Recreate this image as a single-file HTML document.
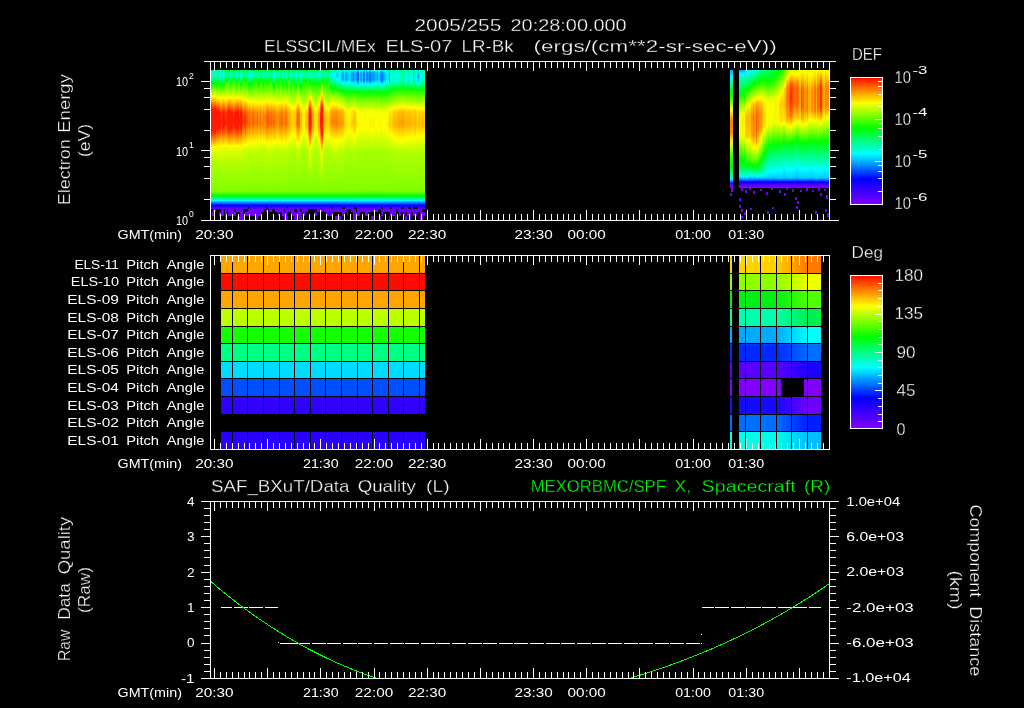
<!DOCTYPE html>
<html><head><meta charset="utf-8"><title>ELS plot</title>
<style>
html,body{margin:0;padding:0;background:#000;overflow:hidden}
svg{display:block;will-change:transform}
text{font-family:"Liberation Sans",sans-serif;fill:#fff}
.t{stroke:#000;stroke-width:.3px}
</style></head><body>
<svg width="1024" height="708" viewBox="0 0 1024 708">
<rect width="1024" height="708" fill="#000"/>
<defs>
<linearGradient id="cb" x1="0" y1="0" x2="0" y2="1"><stop offset="0" stop-color="#ff0a00"/><stop offset="0.2" stop-color="#ffff00"/><stop offset="0.4" stop-color="#00ff00"/><stop offset="0.6" stop-color="#00ffff"/><stop offset="0.8" stop-color="#0000ff"/><stop offset="1" stop-color="#8000ff"/></linearGradient>
<linearGradient id="a0" x1="0" y1="0" x2="0" y2="1"><stop offset="0.000" stop-color="#00ff5e"/><stop offset="0.013" stop-color="#00ffc2"/><stop offset="0.033" stop-color="#00ffef"/><stop offset="0.092" stop-color="#00ff00"/><stop offset="0.093" stop-color="#05ff00"/><stop offset="0.173" stop-color="#ffff00"/><stop offset="0.247" stop-color="#ff1700"/><stop offset="0.427" stop-color="#ff2000"/><stop offset="0.513" stop-color="#ffee00"/><stop offset="0.531" stop-color="#ffff00"/><stop offset="0.600" stop-color="#bbff00"/><stop offset="0.807" stop-color="#80ff00"/><stop offset="0.840" stop-color="#00ff00"/><stop offset="0.840" stop-color="#00ff00"/><stop offset="0.860" stop-color="#00ffae"/><stop offset="0.870" stop-color="#00ffff"/><stop offset="0.873" stop-color="#00dfff"/><stop offset="0.901" stop-color="#0000ff"/><stop offset="0.927" stop-color="#6600ff"/><stop offset="0.953" stop-color="#7300ff"/><stop offset="1.000" stop-color="#7300ff"/></linearGradient><linearGradient id="a1" x1="0" y1="0" x2="0" y2="1"><stop offset="0.000" stop-color="#00ff65"/><stop offset="0.013" stop-color="#00ffc8"/><stop offset="0.033" stop-color="#00fff6"/><stop offset="0.093" stop-color="#00ff05"/><stop offset="0.095" stop-color="#00ff00"/><stop offset="0.179" stop-color="#ffff00"/><stop offset="0.193" stop-color="#ffd300"/><stop offset="0.267" stop-color="#ff1300"/><stop offset="0.407" stop-color="#ff1a00"/><stop offset="0.513" stop-color="#fffd00"/><stop offset="0.516" stop-color="#ffff00"/><stop offset="0.607" stop-color="#b4ff00"/><stop offset="0.807" stop-color="#80ff00"/><stop offset="0.840" stop-color="#00ff00"/><stop offset="0.840" stop-color="#00ff00"/><stop offset="0.860" stop-color="#00ffae"/><stop offset="0.870" stop-color="#00ffff"/><stop offset="0.873" stop-color="#00dfff"/><stop offset="0.901" stop-color="#0000ff"/><stop offset="0.927" stop-color="#6600ff"/><stop offset="0.953" stop-color="#7300ff"/><stop offset="1.000" stop-color="#7300ff"/></linearGradient><linearGradient id="a2" x1="0" y1="0" x2="0" y2="1"><stop offset="0.000" stop-color="#00ff44"/><stop offset="0.013" stop-color="#00ffa7"/><stop offset="0.033" stop-color="#00ffd5"/><stop offset="0.085" stop-color="#00ff00"/><stop offset="0.087" stop-color="#05ff00"/><stop offset="0.176" stop-color="#ffff00"/><stop offset="0.260" stop-color="#ff1500"/><stop offset="0.413" stop-color="#ff2100"/><stop offset="0.513" stop-color="#fffb00"/><stop offset="0.518" stop-color="#ffff00"/><stop offset="0.607" stop-color="#b5ff00"/><stop offset="0.807" stop-color="#80ff00"/><stop offset="0.840" stop-color="#00ff00"/><stop offset="0.840" stop-color="#00ff00"/><stop offset="0.860" stop-color="#00ffae"/><stop offset="0.870" stop-color="#00ffff"/><stop offset="0.873" stop-color="#00dfff"/><stop offset="0.901" stop-color="#0000ff"/><stop offset="0.927" stop-color="#6600ff"/><stop offset="0.953" stop-color="#7300ff"/><stop offset="1.000" stop-color="#7300ff"/></linearGradient><linearGradient id="a3" x1="0" y1="0" x2="0" y2="1"><stop offset="0.000" stop-color="#00ff39"/><stop offset="0.013" stop-color="#00ff9d"/><stop offset="0.033" stop-color="#00ffca"/><stop offset="0.083" stop-color="#00ff00"/><stop offset="0.087" stop-color="#10ff00"/><stop offset="0.174" stop-color="#ffff00"/><stop offset="0.260" stop-color="#ff1300"/><stop offset="0.413" stop-color="#ff1d00"/><stop offset="0.513" stop-color="#fff900"/><stop offset="0.520" stop-color="#ffff00"/><stop offset="0.607" stop-color="#b5ff00"/><stop offset="0.807" stop-color="#80ff00"/><stop offset="0.840" stop-color="#00ff00"/><stop offset="0.840" stop-color="#00ff00"/><stop offset="0.860" stop-color="#00ffae"/><stop offset="0.870" stop-color="#00ffff"/><stop offset="0.873" stop-color="#00dfff"/><stop offset="0.901" stop-color="#0000ff"/><stop offset="0.927" stop-color="#6600ff"/><stop offset="0.953" stop-color="#7300ff"/><stop offset="1.000" stop-color="#7300ff"/></linearGradient><linearGradient id="a4" x1="0" y1="0" x2="0" y2="1"><stop offset="0.000" stop-color="#00ff52"/><stop offset="0.013" stop-color="#00ffb6"/><stop offset="0.033" stop-color="#00ffe4"/><stop offset="0.087" stop-color="#00ff0a"/><stop offset="0.090" stop-color="#00ff00"/><stop offset="0.184" stop-color="#ffff00"/><stop offset="0.260" stop-color="#ff3200"/><stop offset="0.287" stop-color="#ff1300"/><stop offset="0.400" stop-color="#ff2200"/><stop offset="0.510" stop-color="#ffff00"/><stop offset="0.513" stop-color="#f9ff00"/><stop offset="0.613" stop-color="#b1ff00"/><stop offset="0.807" stop-color="#80ff00"/><stop offset="0.840" stop-color="#00ff00"/><stop offset="0.840" stop-color="#00ff00"/><stop offset="0.860" stop-color="#00ffae"/><stop offset="0.870" stop-color="#00ffff"/><stop offset="0.873" stop-color="#00dfff"/><stop offset="0.901" stop-color="#0000ff"/><stop offset="0.927" stop-color="#6600ff"/><stop offset="0.953" stop-color="#7300ff"/><stop offset="1.000" stop-color="#7300ff"/></linearGradient><linearGradient id="a5" x1="0" y1="0" x2="0" y2="1"><stop offset="0.000" stop-color="#00ff3a"/><stop offset="0.013" stop-color="#00ff9e"/><stop offset="0.033" stop-color="#00ffcc"/><stop offset="0.084" stop-color="#00ff00"/><stop offset="0.087" stop-color="#0bff00"/><stop offset="0.185" stop-color="#ffff00"/><stop offset="0.280" stop-color="#ff1300"/><stop offset="0.393" stop-color="#ff1c00"/><stop offset="0.511" stop-color="#ffff00"/><stop offset="0.520" stop-color="#efff00"/><stop offset="0.633" stop-color="#acff00"/><stop offset="0.807" stop-color="#80ff00"/><stop offset="0.840" stop-color="#00ff00"/><stop offset="0.840" stop-color="#00ff00"/><stop offset="0.860" stop-color="#00ffae"/><stop offset="0.870" stop-color="#00ffff"/><stop offset="0.873" stop-color="#00dfff"/><stop offset="0.901" stop-color="#0000ff"/><stop offset="0.927" stop-color="#6600ff"/><stop offset="0.953" stop-color="#7300ff"/><stop offset="1.000" stop-color="#7300ff"/></linearGradient><linearGradient id="a6" x1="0" y1="0" x2="0" y2="1"><stop offset="0.000" stop-color="#00ff72"/><stop offset="0.013" stop-color="#00ffd6"/><stop offset="0.031" stop-color="#00ffff"/><stop offset="0.033" stop-color="#00f9ff"/><stop offset="0.035" stop-color="#00ffff"/><stop offset="0.093" stop-color="#00ff15"/><stop offset="0.100" stop-color="#00ff00"/><stop offset="0.173" stop-color="#e2ff00"/><stop offset="0.186" stop-color="#ffff00"/><stop offset="0.287" stop-color="#ff1d00"/><stop offset="0.380" stop-color="#ff1d00"/><stop offset="0.507" stop-color="#ffff00"/><stop offset="0.520" stop-color="#e8ff00"/><stop offset="0.647" stop-color="#a8ff00"/><stop offset="0.807" stop-color="#80ff00"/><stop offset="0.840" stop-color="#00ff00"/><stop offset="0.840" stop-color="#00ff00"/><stop offset="0.860" stop-color="#00ffae"/><stop offset="0.870" stop-color="#00ffff"/><stop offset="0.873" stop-color="#00dfff"/><stop offset="0.901" stop-color="#0000ff"/><stop offset="0.927" stop-color="#6600ff"/><stop offset="0.953" stop-color="#7300ff"/><stop offset="1.000" stop-color="#7300ff"/></linearGradient><linearGradient id="a7" x1="0" y1="0" x2="0" y2="1"><stop offset="0.000" stop-color="#00ff2e"/><stop offset="0.013" stop-color="#00ff92"/><stop offset="0.033" stop-color="#00ffc1"/><stop offset="0.082" stop-color="#00ff00"/><stop offset="0.087" stop-color="#11ff00"/><stop offset="0.197" stop-color="#ffff00"/><stop offset="0.280" stop-color="#ff4b00"/><stop offset="0.347" stop-color="#ff2800"/><stop offset="0.427" stop-color="#ff8c00"/><stop offset="0.501" stop-color="#ffff00"/><stop offset="0.527" stop-color="#d7ff00"/><stop offset="0.700" stop-color="#a1ff00"/><stop offset="0.807" stop-color="#80ff00"/><stop offset="0.840" stop-color="#00ff00"/><stop offset="0.840" stop-color="#00ff00"/><stop offset="0.860" stop-color="#00ffae"/><stop offset="0.870" stop-color="#00ffff"/><stop offset="0.873" stop-color="#00dfff"/><stop offset="0.901" stop-color="#0000ff"/><stop offset="0.927" stop-color="#6600ff"/><stop offset="0.953" stop-color="#7300ff"/><stop offset="1.000" stop-color="#7300ff"/></linearGradient><linearGradient id="a8" x1="0" y1="0" x2="0" y2="1"><stop offset="0.000" stop-color="#00ff7e"/><stop offset="0.013" stop-color="#00ffe2"/><stop offset="0.026" stop-color="#00ffff"/><stop offset="0.033" stop-color="#00eeff"/><stop offset="0.038" stop-color="#00ffff"/><stop offset="0.100" stop-color="#00ff07"/><stop offset="0.102" stop-color="#00ff00"/><stop offset="0.167" stop-color="#d7ff00"/><stop offset="0.184" stop-color="#ffff00"/><stop offset="0.287" stop-color="#ff1300"/><stop offset="0.387" stop-color="#ff1d00"/><stop offset="0.509" stop-color="#ffff00"/><stop offset="0.520" stop-color="#ebff00"/><stop offset="0.640" stop-color="#aaff00"/><stop offset="0.807" stop-color="#80ff00"/><stop offset="0.840" stop-color="#00ff00"/><stop offset="0.840" stop-color="#00ff00"/><stop offset="0.860" stop-color="#00ffae"/><stop offset="0.870" stop-color="#00ffff"/><stop offset="0.873" stop-color="#00dfff"/><stop offset="0.901" stop-color="#0000ff"/><stop offset="0.927" stop-color="#6600ff"/><stop offset="0.953" stop-color="#7300ff"/><stop offset="1.000" stop-color="#7300ff"/></linearGradient><linearGradient id="a9" x1="0" y1="0" x2="0" y2="1"><stop offset="0.000" stop-color="#00ff36"/><stop offset="0.013" stop-color="#00ff9a"/><stop offset="0.033" stop-color="#00ffc9"/><stop offset="0.084" stop-color="#00ff00"/><stop offset="0.087" stop-color="#0cff00"/><stop offset="0.189" stop-color="#ffff00"/><stop offset="0.280" stop-color="#ff2700"/><stop offset="0.360" stop-color="#ff1300"/><stop offset="0.413" stop-color="#ff5500"/><stop offset="0.507" stop-color="#ffff00"/><stop offset="0.520" stop-color="#e8ff00"/><stop offset="0.647" stop-color="#a8ff00"/><stop offset="0.807" stop-color="#80ff00"/><stop offset="0.840" stop-color="#00ff00"/><stop offset="0.840" stop-color="#00ff00"/><stop offset="0.860" stop-color="#00ffae"/><stop offset="0.870" stop-color="#00ffff"/><stop offset="0.873" stop-color="#00dfff"/><stop offset="0.901" stop-color="#0000ff"/><stop offset="0.927" stop-color="#6600ff"/><stop offset="0.953" stop-color="#7300ff"/><stop offset="1.000" stop-color="#7300ff"/></linearGradient><linearGradient id="a10" x1="0" y1="0" x2="0" y2="1"><stop offset="0.000" stop-color="#00ff0f"/><stop offset="0.013" stop-color="#00ff73"/><stop offset="0.033" stop-color="#00ffa2"/><stop offset="0.072" stop-color="#00ff00"/><stop offset="0.080" stop-color="#24ff00"/><stop offset="0.173" stop-color="#d8ff00"/><stop offset="0.192" stop-color="#ffff00"/><stop offset="0.287" stop-color="#ff3600"/><stop offset="0.347" stop-color="#ff1b00"/><stop offset="0.420" stop-color="#ff7700"/><stop offset="0.502" stop-color="#ffff00"/><stop offset="0.520" stop-color="#e1ff00"/><stop offset="0.660" stop-color="#a5ff00"/><stop offset="0.807" stop-color="#80ff00"/><stop offset="0.840" stop-color="#00ff00"/><stop offset="0.840" stop-color="#00ff00"/><stop offset="0.860" stop-color="#00ffae"/><stop offset="0.870" stop-color="#00ffff"/><stop offset="0.873" stop-color="#00dfff"/><stop offset="0.901" stop-color="#0000ff"/><stop offset="0.927" stop-color="#6600ff"/><stop offset="0.953" stop-color="#7300ff"/><stop offset="1.000" stop-color="#7300ff"/></linearGradient><linearGradient id="a11" x1="0" y1="0" x2="0" y2="1"><stop offset="0.000" stop-color="#03ff00"/><stop offset="0.000" stop-color="#00ff00"/><stop offset="0.013" stop-color="#00ff61"/><stop offset="0.033" stop-color="#00ff90"/><stop offset="0.067" stop-color="#00ff00"/><stop offset="0.080" stop-color="#37ff00"/><stop offset="0.160" stop-color="#bfff00"/><stop offset="0.188" stop-color="#ffff00"/><stop offset="0.287" stop-color="#ff2000"/><stop offset="0.380" stop-color="#ff2000"/><stop offset="0.507" stop-color="#ffff00"/><stop offset="0.520" stop-color="#e7ff00"/><stop offset="0.647" stop-color="#a8ff00"/><stop offset="0.807" stop-color="#80ff00"/><stop offset="0.840" stop-color="#00ff00"/><stop offset="0.840" stop-color="#00ff00"/><stop offset="0.860" stop-color="#00ffae"/><stop offset="0.870" stop-color="#00ffff"/><stop offset="0.873" stop-color="#00dfff"/><stop offset="0.901" stop-color="#0000ff"/><stop offset="0.927" stop-color="#6600ff"/><stop offset="0.953" stop-color="#7300ff"/><stop offset="1.000" stop-color="#7300ff"/></linearGradient><linearGradient id="a12" x1="0" y1="0" x2="0" y2="1"><stop offset="0.000" stop-color="#1fff00"/><stop offset="0.004" stop-color="#00ff00"/><stop offset="0.013" stop-color="#00ff45"/><stop offset="0.033" stop-color="#00ff73"/><stop offset="0.060" stop-color="#00ff00"/><stop offset="0.080" stop-color="#56ff00"/><stop offset="0.153" stop-color="#b7ff00"/><stop offset="0.182" stop-color="#ffff00"/><stop offset="0.273" stop-color="#ff1700"/><stop offset="0.400" stop-color="#ff2300"/><stop offset="0.510" stop-color="#ffff00"/><stop offset="0.513" stop-color="#f9ff00"/><stop offset="0.613" stop-color="#b1ff00"/><stop offset="0.807" stop-color="#80ff00"/><stop offset="0.840" stop-color="#00ff00"/><stop offset="0.840" stop-color="#00ff00"/><stop offset="0.860" stop-color="#00ffae"/><stop offset="0.870" stop-color="#00ffff"/><stop offset="0.873" stop-color="#00dfff"/><stop offset="0.901" stop-color="#0000ff"/><stop offset="0.927" stop-color="#6600ff"/><stop offset="0.953" stop-color="#7300ff"/><stop offset="1.000" stop-color="#7300ff"/></linearGradient><linearGradient id="a13" x1="0" y1="0" x2="0" y2="1"><stop offset="0.000" stop-color="#00ff73"/><stop offset="0.013" stop-color="#00ffd7"/><stop offset="0.031" stop-color="#00ffff"/><stop offset="0.033" stop-color="#00f9ff"/><stop offset="0.035" stop-color="#00ffff"/><stop offset="0.093" stop-color="#00ff13"/><stop offset="0.099" stop-color="#00ff00"/><stop offset="0.173" stop-color="#ebff00"/><stop offset="0.182" stop-color="#ffff00"/><stop offset="0.280" stop-color="#ff1300"/><stop offset="0.393" stop-color="#ff1a00"/><stop offset="0.512" stop-color="#ffff00"/><stop offset="0.520" stop-color="#efff00"/><stop offset="0.633" stop-color="#acff00"/><stop offset="0.807" stop-color="#80ff00"/><stop offset="0.840" stop-color="#00ff00"/><stop offset="0.840" stop-color="#00ff00"/><stop offset="0.860" stop-color="#00ffae"/><stop offset="0.870" stop-color="#00ffff"/><stop offset="0.873" stop-color="#00dfff"/><stop offset="0.901" stop-color="#0000ff"/><stop offset="0.927" stop-color="#6600ff"/><stop offset="0.953" stop-color="#7300ff"/><stop offset="1.000" stop-color="#7300ff"/></linearGradient><linearGradient id="a14" x1="0" y1="0" x2="0" y2="1"><stop offset="0.000" stop-color="#00ff0c"/><stop offset="0.013" stop-color="#00ff70"/><stop offset="0.033" stop-color="#00ff9e"/><stop offset="0.070" stop-color="#00ff00"/><stop offset="0.080" stop-color="#29ff00"/><stop offset="0.160" stop-color="#c3ff00"/><stop offset="0.186" stop-color="#ffff00"/><stop offset="0.287" stop-color="#ff1600"/><stop offset="0.387" stop-color="#ff2000"/><stop offset="0.509" stop-color="#ffff00"/><stop offset="0.520" stop-color="#eaff00"/><stop offset="0.640" stop-color="#aaff00"/><stop offset="0.807" stop-color="#80ff00"/><stop offset="0.840" stop-color="#00ff00"/><stop offset="0.840" stop-color="#00ff00"/><stop offset="0.860" stop-color="#00ffae"/><stop offset="0.870" stop-color="#00ffff"/><stop offset="0.873" stop-color="#00dfff"/><stop offset="0.901" stop-color="#0000ff"/><stop offset="0.927" stop-color="#6600ff"/><stop offset="0.953" stop-color="#7300ff"/><stop offset="1.000" stop-color="#7300ff"/></linearGradient><linearGradient id="a15" x1="0" y1="0" x2="0" y2="1"><stop offset="0.000" stop-color="#08ff00"/><stop offset="0.001" stop-color="#00ff00"/><stop offset="0.013" stop-color="#00ff5d"/><stop offset="0.033" stop-color="#00ff8b"/><stop offset="0.066" stop-color="#00ff00"/><stop offset="0.080" stop-color="#3aff00"/><stop offset="0.160" stop-color="#b6ff00"/><stop offset="0.195" stop-color="#ffff00"/><stop offset="0.287" stop-color="#ff3d00"/><stop offset="0.353" stop-color="#ff2500"/><stop offset="0.433" stop-color="#ff9500"/><stop offset="0.504" stop-color="#ffff00"/><stop offset="0.533" stop-color="#d2ff00"/><stop offset="0.807" stop-color="#80ff00"/><stop offset="0.840" stop-color="#00ff00"/><stop offset="0.840" stop-color="#00ff00"/><stop offset="0.860" stop-color="#00ffae"/><stop offset="0.870" stop-color="#00ffff"/><stop offset="0.873" stop-color="#00dfff"/><stop offset="0.901" stop-color="#0000ff"/><stop offset="0.927" stop-color="#6600ff"/><stop offset="0.953" stop-color="#7300ff"/><stop offset="1.000" stop-color="#7300ff"/></linearGradient><linearGradient id="a16" x1="0" y1="0" x2="0" y2="1"><stop offset="0.000" stop-color="#00ff02"/><stop offset="0.013" stop-color="#00ff66"/><stop offset="0.033" stop-color="#00ff94"/><stop offset="0.068" stop-color="#00ff00"/><stop offset="0.080" stop-color="#33ff00"/><stop offset="0.160" stop-color="#c1ff00"/><stop offset="0.187" stop-color="#ffff00"/><stop offset="0.287" stop-color="#ff1b00"/><stop offset="0.380" stop-color="#ff1b00"/><stop offset="0.508" stop-color="#ffff00"/><stop offset="0.520" stop-color="#e9ff00"/><stop offset="0.640" stop-color="#aaff00"/><stop offset="0.807" stop-color="#80ff00"/><stop offset="0.840" stop-color="#00ff00"/><stop offset="0.840" stop-color="#00ff00"/><stop offset="0.860" stop-color="#00ffae"/><stop offset="0.870" stop-color="#00ffff"/><stop offset="0.873" stop-color="#00dfff"/><stop offset="0.901" stop-color="#0000ff"/><stop offset="0.927" stop-color="#6600ff"/><stop offset="0.953" stop-color="#7300ff"/><stop offset="1.000" stop-color="#7300ff"/></linearGradient><linearGradient id="a17" x1="0" y1="0" x2="0" y2="1"><stop offset="0.000" stop-color="#00ff57"/><stop offset="0.013" stop-color="#00ffbb"/><stop offset="0.033" stop-color="#00ffe9"/><stop offset="0.087" stop-color="#00ff11"/><stop offset="0.093" stop-color="#00ff00"/><stop offset="0.188" stop-color="#ffff00"/><stop offset="0.227" stop-color="#ff9600"/><stop offset="0.287" stop-color="#ff1600"/><stop offset="0.387" stop-color="#ff1f00"/><stop offset="0.509" stop-color="#ffff00"/><stop offset="0.520" stop-color="#eaff00"/><stop offset="0.640" stop-color="#aaff00"/><stop offset="0.807" stop-color="#80ff00"/><stop offset="0.840" stop-color="#00ff00"/><stop offset="0.840" stop-color="#00ff00"/><stop offset="0.860" stop-color="#00ffae"/><stop offset="0.870" stop-color="#00ffff"/><stop offset="0.873" stop-color="#00dfff"/><stop offset="0.901" stop-color="#0000ff"/><stop offset="0.927" stop-color="#6600ff"/><stop offset="0.953" stop-color="#7300ff"/><stop offset="1.000" stop-color="#7300ff"/></linearGradient><linearGradient id="a18" x1="0" y1="0" x2="0" y2="1"><stop offset="0.000" stop-color="#00ff1b"/><stop offset="0.013" stop-color="#00ff7f"/><stop offset="0.033" stop-color="#00ffad"/><stop offset="0.077" stop-color="#00ff00"/><stop offset="0.087" stop-color="#27ff00"/><stop offset="0.180" stop-color="#ffff00"/><stop offset="0.200" stop-color="#ffd100"/><stop offset="0.280" stop-color="#ff1300"/><stop offset="0.393" stop-color="#ff1b00"/><stop offset="0.512" stop-color="#ffff00"/><stop offset="0.520" stop-color="#efff00"/><stop offset="0.633" stop-color="#acff00"/><stop offset="0.807" stop-color="#80ff00"/><stop offset="0.840" stop-color="#00ff00"/><stop offset="0.840" stop-color="#00ff00"/><stop offset="0.860" stop-color="#00ffae"/><stop offset="0.870" stop-color="#00ffff"/><stop offset="0.873" stop-color="#00dfff"/><stop offset="0.901" stop-color="#0000ff"/><stop offset="0.927" stop-color="#6600ff"/><stop offset="0.953" stop-color="#7300ff"/><stop offset="1.000" stop-color="#7300ff"/></linearGradient><linearGradient id="a19" x1="0" y1="0" x2="0" y2="1"><stop offset="0.000" stop-color="#25ff00"/><stop offset="0.005" stop-color="#00ff00"/><stop offset="0.013" stop-color="#00ff3f"/><stop offset="0.033" stop-color="#00ff6e"/><stop offset="0.059" stop-color="#00ff00"/><stop offset="0.080" stop-color="#58ff00"/><stop offset="0.153" stop-color="#a6ff00"/><stop offset="0.193" stop-color="#ffff00"/><stop offset="0.280" stop-color="#ff4000"/><stop offset="0.347" stop-color="#ff1c00"/><stop offset="0.420" stop-color="#ff7700"/><stop offset="0.502" stop-color="#ffff00"/><stop offset="0.520" stop-color="#e1ff00"/><stop offset="0.660" stop-color="#a5ff00"/><stop offset="0.807" stop-color="#80ff00"/><stop offset="0.840" stop-color="#00ff00"/><stop offset="0.840" stop-color="#00ff00"/><stop offset="0.860" stop-color="#00ffae"/><stop offset="0.870" stop-color="#00ffff"/><stop offset="0.873" stop-color="#00dfff"/><stop offset="0.901" stop-color="#0000ff"/><stop offset="0.927" stop-color="#6600ff"/><stop offset="0.953" stop-color="#7300ff"/><stop offset="1.000" stop-color="#7300ff"/></linearGradient><linearGradient id="a20" x1="0" y1="0" x2="0" y2="1"><stop offset="0.000" stop-color="#00ff70"/><stop offset="0.013" stop-color="#00ffd4"/><stop offset="0.032" stop-color="#00ffff"/><stop offset="0.033" stop-color="#00fbff"/><stop offset="0.034" stop-color="#00ffff"/><stop offset="0.093" stop-color="#00ff13"/><stop offset="0.099" stop-color="#00ff00"/><stop offset="0.173" stop-color="#e5ff00"/><stop offset="0.185" stop-color="#ffff00"/><stop offset="0.287" stop-color="#ff1400"/><stop offset="0.387" stop-color="#ff1e00"/><stop offset="0.509" stop-color="#ffff00"/><stop offset="0.520" stop-color="#ebff00"/><stop offset="0.640" stop-color="#aaff00"/><stop offset="0.807" stop-color="#80ff00"/><stop offset="0.840" stop-color="#00ff00"/><stop offset="0.840" stop-color="#00ff00"/><stop offset="0.860" stop-color="#00ffae"/><stop offset="0.870" stop-color="#00ffff"/><stop offset="0.873" stop-color="#00dfff"/><stop offset="0.901" stop-color="#0000ff"/><stop offset="0.927" stop-color="#6600ff"/><stop offset="0.953" stop-color="#7300ff"/><stop offset="1.000" stop-color="#7300ff"/></linearGradient><linearGradient id="a21" x1="0" y1="0" x2="0" y2="1"><stop offset="0.000" stop-color="#00ff19"/><stop offset="0.013" stop-color="#00ff7d"/><stop offset="0.033" stop-color="#00ffac"/><stop offset="0.074" stop-color="#00ff00"/><stop offset="0.080" stop-color="#19ff00"/><stop offset="0.193" stop-color="#ffff00"/><stop offset="0.207" stop-color="#ffe300"/><stop offset="0.287" stop-color="#ff4200"/><stop offset="0.353" stop-color="#ff2b00"/><stop offset="0.433" stop-color="#ff9900"/><stop offset="0.502" stop-color="#ffff00"/><stop offset="0.533" stop-color="#d1ff00"/><stop offset="0.807" stop-color="#80ff00"/><stop offset="0.840" stop-color="#00ff00"/><stop offset="0.840" stop-color="#00ff00"/><stop offset="0.860" stop-color="#00ffae"/><stop offset="0.870" stop-color="#00ffff"/><stop offset="0.873" stop-color="#00dfff"/><stop offset="0.901" stop-color="#0000ff"/><stop offset="0.927" stop-color="#6600ff"/><stop offset="0.953" stop-color="#7300ff"/><stop offset="1.000" stop-color="#7300ff"/></linearGradient><linearGradient id="a22" x1="0" y1="0" x2="0" y2="1"><stop offset="0.000" stop-color="#03ff00"/><stop offset="0.000" stop-color="#00ff00"/><stop offset="0.013" stop-color="#00ff61"/><stop offset="0.033" stop-color="#00ff90"/><stop offset="0.068" stop-color="#00ff00"/><stop offset="0.080" stop-color="#34ff00"/><stop offset="0.160" stop-color="#aeff00"/><stop offset="0.201" stop-color="#ffff00"/><stop offset="0.287" stop-color="#ff5400"/><stop offset="0.353" stop-color="#ff3d00"/><stop offset="0.440" stop-color="#ffb200"/><stop offset="0.498" stop-color="#ffff00"/><stop offset="0.540" stop-color="#c8ff00"/><stop offset="0.807" stop-color="#80ff00"/><stop offset="0.840" stop-color="#00ff00"/><stop offset="0.840" stop-color="#00ff00"/><stop offset="0.860" stop-color="#00ffae"/><stop offset="0.870" stop-color="#00ffff"/><stop offset="0.873" stop-color="#00dfff"/><stop offset="0.901" stop-color="#0000ff"/><stop offset="0.927" stop-color="#6600ff"/><stop offset="0.953" stop-color="#7300ff"/><stop offset="1.000" stop-color="#7300ff"/></linearGradient><linearGradient id="a23" x1="0" y1="0" x2="0" y2="1"><stop offset="0.000" stop-color="#00ff4d"/><stop offset="0.013" stop-color="#00ffb1"/><stop offset="0.033" stop-color="#00ffe0"/><stop offset="0.087" stop-color="#00ff0b"/><stop offset="0.091" stop-color="#00ff00"/><stop offset="0.195" stop-color="#ffff00"/><stop offset="0.247" stop-color="#ff7f00"/><stop offset="0.313" stop-color="#ff1f00"/><stop offset="0.373" stop-color="#ff2f00"/><stop offset="0.503" stop-color="#ffff00"/><stop offset="0.527" stop-color="#daff00"/><stop offset="0.687" stop-color="#a2ff00"/><stop offset="0.807" stop-color="#80ff00"/><stop offset="0.840" stop-color="#00ff00"/><stop offset="0.840" stop-color="#00ff00"/><stop offset="0.860" stop-color="#00ffae"/><stop offset="0.870" stop-color="#00ffff"/><stop offset="0.873" stop-color="#00dfff"/><stop offset="0.901" stop-color="#0000ff"/><stop offset="0.927" stop-color="#6600ff"/><stop offset="0.953" stop-color="#7300ff"/><stop offset="1.000" stop-color="#7300ff"/></linearGradient><linearGradient id="a24" x1="0" y1="0" x2="0" y2="1"><stop offset="0.000" stop-color="#00ff15"/><stop offset="0.013" stop-color="#00ff79"/><stop offset="0.033" stop-color="#00ffa8"/><stop offset="0.074" stop-color="#00ff00"/><stop offset="0.080" stop-color="#1bff00"/><stop offset="0.201" stop-color="#ffff00"/><stop offset="0.207" stop-color="#fff400"/><stop offset="0.287" stop-color="#ff6000"/><stop offset="0.353" stop-color="#ff4a00"/><stop offset="0.447" stop-color="#ffc600"/><stop offset="0.495" stop-color="#ffff00"/><stop offset="0.547" stop-color="#c2ff00"/><stop offset="0.807" stop-color="#80ff00"/><stop offset="0.840" stop-color="#00ff00"/><stop offset="0.840" stop-color="#00ff00"/><stop offset="0.860" stop-color="#00ffae"/><stop offset="0.870" stop-color="#00ffff"/><stop offset="0.873" stop-color="#00dfff"/><stop offset="0.901" stop-color="#0000ff"/><stop offset="0.927" stop-color="#6600ff"/><stop offset="0.953" stop-color="#7300ff"/><stop offset="1.000" stop-color="#7300ff"/></linearGradient><linearGradient id="a25" x1="0" y1="0" x2="0" y2="1"><stop offset="0.000" stop-color="#00ff5f"/><stop offset="0.013" stop-color="#00ffc3"/><stop offset="0.033" stop-color="#00fff3"/><stop offset="0.087" stop-color="#00ff21"/><stop offset="0.100" stop-color="#00ff00"/><stop offset="0.180" stop-color="#c7ff00"/><stop offset="0.212" stop-color="#ffff00"/><stop offset="0.287" stop-color="#ff7d00"/><stop offset="0.360" stop-color="#ff6d00"/><stop offset="0.483" stop-color="#ffff00"/><stop offset="0.533" stop-color="#c4ff00"/><stop offset="0.807" stop-color="#80ff00"/><stop offset="0.840" stop-color="#00ff00"/><stop offset="0.840" stop-color="#00ff00"/><stop offset="0.860" stop-color="#00ffae"/><stop offset="0.870" stop-color="#00ffff"/><stop offset="0.873" stop-color="#00dfff"/><stop offset="0.901" stop-color="#0000ff"/><stop offset="0.927" stop-color="#6600ff"/><stop offset="0.953" stop-color="#7300ff"/><stop offset="1.000" stop-color="#7300ff"/></linearGradient><linearGradient id="a26" x1="0" y1="0" x2="0" y2="1"><stop offset="0.000" stop-color="#00ff53"/><stop offset="0.013" stop-color="#00ffb8"/><stop offset="0.033" stop-color="#00ffe7"/><stop offset="0.087" stop-color="#00ff16"/><stop offset="0.096" stop-color="#00ff00"/><stop offset="0.193" stop-color="#e3ff00"/><stop offset="0.209" stop-color="#ffff00"/><stop offset="0.287" stop-color="#ff7600"/><stop offset="0.360" stop-color="#ff6600"/><stop offset="0.486" stop-color="#ffff00"/><stop offset="0.533" stop-color="#c5ff00"/><stop offset="0.807" stop-color="#80ff00"/><stop offset="0.840" stop-color="#00ff00"/><stop offset="0.840" stop-color="#00ff00"/><stop offset="0.860" stop-color="#00ffae"/><stop offset="0.870" stop-color="#00ffff"/><stop offset="0.873" stop-color="#00dfff"/><stop offset="0.901" stop-color="#0000ff"/><stop offset="0.927" stop-color="#6600ff"/><stop offset="0.953" stop-color="#7300ff"/><stop offset="1.000" stop-color="#7300ff"/></linearGradient><linearGradient id="a27" x1="0" y1="0" x2="0" y2="1"><stop offset="0.000" stop-color="#00ff54"/><stop offset="0.013" stop-color="#00ffb9"/><stop offset="0.033" stop-color="#00ffe9"/><stop offset="0.087" stop-color="#00ff19"/><stop offset="0.098" stop-color="#00ff00"/><stop offset="0.187" stop-color="#c6ff00"/><stop offset="0.224" stop-color="#ffff00"/><stop offset="0.293" stop-color="#ff9300"/><stop offset="0.367" stop-color="#ff8f00"/><stop offset="0.472" stop-color="#ffff00"/><stop offset="0.533" stop-color="#bdff00"/><stop offset="0.807" stop-color="#80ff00"/><stop offset="0.840" stop-color="#00ff00"/><stop offset="0.840" stop-color="#00ff00"/><stop offset="0.860" stop-color="#00ffae"/><stop offset="0.870" stop-color="#00ffff"/><stop offset="0.873" stop-color="#00dfff"/><stop offset="0.901" stop-color="#0000ff"/><stop offset="0.927" stop-color="#6600ff"/><stop offset="0.953" stop-color="#7300ff"/><stop offset="1.000" stop-color="#7300ff"/></linearGradient><linearGradient id="a28" x1="0" y1="0" x2="0" y2="1"><stop offset="0.000" stop-color="#00ff26"/><stop offset="0.013" stop-color="#00ff8b"/><stop offset="0.033" stop-color="#00ffba"/><stop offset="0.082" stop-color="#00ff00"/><stop offset="0.087" stop-color="#13ff00"/><stop offset="0.211" stop-color="#ffff00"/><stop offset="0.287" stop-color="#ff7000"/><stop offset="0.353" stop-color="#ff5b00"/><stop offset="0.447" stop-color="#ffd000"/><stop offset="0.489" stop-color="#ffff00"/><stop offset="0.547" stop-color="#bfff00"/><stop offset="0.807" stop-color="#80ff00"/><stop offset="0.840" stop-color="#00ff00"/><stop offset="0.840" stop-color="#00ff00"/><stop offset="0.860" stop-color="#00ffae"/><stop offset="0.870" stop-color="#00ffff"/><stop offset="0.873" stop-color="#00dfff"/><stop offset="0.901" stop-color="#0000ff"/><stop offset="0.927" stop-color="#6600ff"/><stop offset="0.953" stop-color="#7300ff"/><stop offset="1.000" stop-color="#7300ff"/></linearGradient><linearGradient id="a29" x1="0" y1="0" x2="0" y2="1"><stop offset="0.000" stop-color="#00ff33"/><stop offset="0.013" stop-color="#00ff98"/><stop offset="0.033" stop-color="#00ffc8"/><stop offset="0.085" stop-color="#00ff00"/><stop offset="0.087" stop-color="#06ff00"/><stop offset="0.216" stop-color="#ffff00"/><stop offset="0.273" stop-color="#ff9200"/><stop offset="0.347" stop-color="#ff6e00"/><stop offset="0.440" stop-color="#ffd300"/><stop offset="0.482" stop-color="#ffff00"/><stop offset="0.547" stop-color="#bbff00"/><stop offset="0.807" stop-color="#80ff00"/><stop offset="0.840" stop-color="#00ff00"/><stop offset="0.840" stop-color="#00ff00"/><stop offset="0.860" stop-color="#00ffae"/><stop offset="0.870" stop-color="#00ffff"/><stop offset="0.873" stop-color="#00dfff"/><stop offset="0.901" stop-color="#0000ff"/><stop offset="0.927" stop-color="#6600ff"/><stop offset="0.953" stop-color="#7300ff"/><stop offset="1.000" stop-color="#7300ff"/></linearGradient><linearGradient id="a30" x1="0" y1="0" x2="0" y2="1"><stop offset="0.000" stop-color="#00ff05"/><stop offset="0.013" stop-color="#00ff69"/><stop offset="0.033" stop-color="#00ff99"/><stop offset="0.070" stop-color="#00ff00"/><stop offset="0.080" stop-color="#28ff00"/><stop offset="0.173" stop-color="#b7ff00"/><stop offset="0.216" stop-color="#ffff00"/><stop offset="0.287" stop-color="#ff8800"/><stop offset="0.360" stop-color="#ff7900"/><stop offset="0.479" stop-color="#ffff00"/><stop offset="0.533" stop-color="#c1ff00"/><stop offset="0.807" stop-color="#80ff00"/><stop offset="0.840" stop-color="#00ff00"/><stop offset="0.840" stop-color="#00ff00"/><stop offset="0.860" stop-color="#00ffae"/><stop offset="0.870" stop-color="#00ffff"/><stop offset="0.873" stop-color="#00dfff"/><stop offset="0.901" stop-color="#0000ff"/><stop offset="0.927" stop-color="#6600ff"/><stop offset="0.953" stop-color="#7300ff"/><stop offset="1.000" stop-color="#7300ff"/></linearGradient><linearGradient id="a31" x1="0" y1="0" x2="0" y2="1"><stop offset="0.000" stop-color="#00ff59"/><stop offset="0.013" stop-color="#00ffbd"/><stop offset="0.033" stop-color="#00ffed"/><stop offset="0.087" stop-color="#00ff1a"/><stop offset="0.097" stop-color="#00ff00"/><stop offset="0.187" stop-color="#daff00"/><stop offset="0.207" stop-color="#ffff00"/><stop offset="0.287" stop-color="#ff6f00"/><stop offset="0.353" stop-color="#ff5b00"/><stop offset="0.447" stop-color="#ffd000"/><stop offset="0.489" stop-color="#ffff00"/><stop offset="0.547" stop-color="#bfff00"/><stop offset="0.807" stop-color="#80ff00"/><stop offset="0.840" stop-color="#00ff00"/><stop offset="0.840" stop-color="#00ff00"/><stop offset="0.860" stop-color="#00ffae"/><stop offset="0.870" stop-color="#00ffff"/><stop offset="0.873" stop-color="#00dfff"/><stop offset="0.901" stop-color="#0000ff"/><stop offset="0.927" stop-color="#6600ff"/><stop offset="0.953" stop-color="#7300ff"/><stop offset="1.000" stop-color="#7300ff"/></linearGradient><linearGradient id="a32" x1="0" y1="0" x2="0" y2="1"><stop offset="0.000" stop-color="#00ff35"/><stop offset="0.013" stop-color="#00ff9a"/><stop offset="0.033" stop-color="#00ffca"/><stop offset="0.086" stop-color="#00ff00"/><stop offset="0.087" stop-color="#03ff00"/><stop offset="0.221" stop-color="#ffff00"/><stop offset="0.267" stop-color="#ffa900"/><stop offset="0.347" stop-color="#ff8000"/><stop offset="0.447" stop-color="#ffe800"/><stop offset="0.472" stop-color="#ffff00"/><stop offset="0.553" stop-color="#b6ff00"/><stop offset="0.807" stop-color="#80ff00"/><stop offset="0.840" stop-color="#00ff00"/><stop offset="0.840" stop-color="#00ff00"/><stop offset="0.860" stop-color="#00ffae"/><stop offset="0.870" stop-color="#00ffff"/><stop offset="0.873" stop-color="#00dfff"/><stop offset="0.901" stop-color="#0000ff"/><stop offset="0.927" stop-color="#6600ff"/><stop offset="0.953" stop-color="#7300ff"/><stop offset="1.000" stop-color="#7300ff"/></linearGradient><linearGradient id="a33" x1="0" y1="0" x2="0" y2="1"><stop offset="0.000" stop-color="#00ff04"/><stop offset="0.013" stop-color="#00ff69"/><stop offset="0.033" stop-color="#00ff98"/><stop offset="0.070" stop-color="#00ff00"/><stop offset="0.080" stop-color="#2aff00"/><stop offset="0.167" stop-color="#b2ff00"/><stop offset="0.210" stop-color="#ffff00"/><stop offset="0.287" stop-color="#ff7700"/><stop offset="0.360" stop-color="#ff6600"/><stop offset="0.486" stop-color="#ffff00"/><stop offset="0.533" stop-color="#c5ff00"/><stop offset="0.807" stop-color="#80ff00"/><stop offset="0.840" stop-color="#00ff00"/><stop offset="0.840" stop-color="#00ff00"/><stop offset="0.860" stop-color="#00ffae"/><stop offset="0.870" stop-color="#00ffff"/><stop offset="0.873" stop-color="#00dfff"/><stop offset="0.901" stop-color="#0000ff"/><stop offset="0.927" stop-color="#6600ff"/><stop offset="0.953" stop-color="#7300ff"/><stop offset="1.000" stop-color="#7300ff"/></linearGradient><linearGradient id="a34" x1="0" y1="0" x2="0" y2="1"><stop offset="0.000" stop-color="#00ff17"/><stop offset="0.013" stop-color="#00ff7b"/><stop offset="0.033" stop-color="#00ffab"/><stop offset="0.075" stop-color="#00ff00"/><stop offset="0.080" stop-color="#15ff00"/><stop offset="0.224" stop-color="#ffff00"/><stop offset="0.287" stop-color="#ff9a00"/><stop offset="0.360" stop-color="#ff8b00"/><stop offset="0.470" stop-color="#ffff00"/><stop offset="0.533" stop-color="#bdff00"/><stop offset="0.807" stop-color="#80ff00"/><stop offset="0.840" stop-color="#00ff00"/><stop offset="0.840" stop-color="#00ff00"/><stop offset="0.860" stop-color="#00ffae"/><stop offset="0.870" stop-color="#00ffff"/><stop offset="0.873" stop-color="#00dfff"/><stop offset="0.901" stop-color="#0000ff"/><stop offset="0.927" stop-color="#6600ff"/><stop offset="0.953" stop-color="#7300ff"/><stop offset="1.000" stop-color="#7300ff"/></linearGradient><linearGradient id="a35" x1="0" y1="0" x2="0" y2="1"><stop offset="0.000" stop-color="#00ff6a"/><stop offset="0.013" stop-color="#00ffcf"/><stop offset="0.033" stop-color="#00ffff"/><stop offset="0.093" stop-color="#00ff1a"/><stop offset="0.103" stop-color="#00ff00"/><stop offset="0.173" stop-color="#b7ff00"/><stop offset="0.216" stop-color="#ffff00"/><stop offset="0.287" stop-color="#ff8700"/><stop offset="0.360" stop-color="#ff7700"/><stop offset="0.479" stop-color="#ffff00"/><stop offset="0.533" stop-color="#c1ff00"/><stop offset="0.807" stop-color="#80ff00"/><stop offset="0.840" stop-color="#00ff00"/><stop offset="0.840" stop-color="#00ff00"/><stop offset="0.860" stop-color="#00ffae"/><stop offset="0.870" stop-color="#00ffff"/><stop offset="0.873" stop-color="#00dfff"/><stop offset="0.901" stop-color="#0000ff"/><stop offset="0.927" stop-color="#6600ff"/><stop offset="0.953" stop-color="#7300ff"/><stop offset="1.000" stop-color="#7300ff"/></linearGradient><linearGradient id="a36" x1="0" y1="0" x2="0" y2="1"><stop offset="0.000" stop-color="#00ff12"/><stop offset="0.013" stop-color="#00ff76"/><stop offset="0.033" stop-color="#00ffa6"/><stop offset="0.074" stop-color="#00ff00"/><stop offset="0.080" stop-color="#1bff00"/><stop offset="0.214" stop-color="#ffff00"/><stop offset="0.233" stop-color="#ffde00"/><stop offset="0.307" stop-color="#ff7f00"/><stop offset="0.380" stop-color="#ff8e00"/><stop offset="0.476" stop-color="#ffff00"/><stop offset="0.527" stop-color="#c4ff00"/><stop offset="0.807" stop-color="#80ff00"/><stop offset="0.840" stop-color="#00ff00"/><stop offset="0.840" stop-color="#00ff00"/><stop offset="0.860" stop-color="#00ffae"/><stop offset="0.870" stop-color="#00ffff"/><stop offset="0.873" stop-color="#00dfff"/><stop offset="0.901" stop-color="#0000ff"/><stop offset="0.927" stop-color="#6600ff"/><stop offset="0.953" stop-color="#7300ff"/><stop offset="1.000" stop-color="#7300ff"/></linearGradient><linearGradient id="a37" x1="0" y1="0" x2="0" y2="1"><stop offset="0.000" stop-color="#00ff44"/><stop offset="0.013" stop-color="#00ffa9"/><stop offset="0.033" stop-color="#00ffd8"/><stop offset="0.087" stop-color="#00ff07"/><stop offset="0.090" stop-color="#00ff00"/><stop offset="0.206" stop-color="#ffff00"/><stop offset="0.240" stop-color="#ffb600"/><stop offset="0.307" stop-color="#ff5900"/><stop offset="0.373" stop-color="#ff6400"/><stop offset="0.489" stop-color="#ffff00"/><stop offset="0.527" stop-color="#cdff00"/><stop offset="0.807" stop-color="#80ff00"/><stop offset="0.840" stop-color="#00ff00"/><stop offset="0.840" stop-color="#00ff00"/><stop offset="0.860" stop-color="#00ffae"/><stop offset="0.870" stop-color="#00ffff"/><stop offset="0.873" stop-color="#00dfff"/><stop offset="0.901" stop-color="#0000ff"/><stop offset="0.927" stop-color="#6600ff"/><stop offset="0.953" stop-color="#7300ff"/><stop offset="1.000" stop-color="#7300ff"/></linearGradient><linearGradient id="a38" x1="0" y1="0" x2="0" y2="1"><stop offset="0.000" stop-color="#00ff1e"/><stop offset="0.013" stop-color="#00ff82"/><stop offset="0.033" stop-color="#00ffb1"/><stop offset="0.079" stop-color="#00ff00"/><stop offset="0.087" stop-color="#1cff00"/><stop offset="0.206" stop-color="#ffff00"/><stop offset="0.287" stop-color="#ff6600"/><stop offset="0.353" stop-color="#ff5100"/><stop offset="0.447" stop-color="#ffca00"/><stop offset="0.493" stop-color="#ffff00"/><stop offset="0.547" stop-color="#c1ff00"/><stop offset="0.807" stop-color="#80ff00"/><stop offset="0.840" stop-color="#00ff00"/><stop offset="0.840" stop-color="#00ff00"/><stop offset="0.860" stop-color="#00ffae"/><stop offset="0.870" stop-color="#00ffff"/><stop offset="0.873" stop-color="#00dfff"/><stop offset="0.901" stop-color="#0000ff"/><stop offset="0.927" stop-color="#6600ff"/><stop offset="0.953" stop-color="#7300ff"/><stop offset="1.000" stop-color="#7300ff"/></linearGradient><linearGradient id="a39" x1="0" y1="0" x2="0" y2="1"><stop offset="0.000" stop-color="#00ff22"/><stop offset="0.013" stop-color="#00ff86"/><stop offset="0.033" stop-color="#00ffb6"/><stop offset="0.081" stop-color="#00ff00"/><stop offset="0.087" stop-color="#16ff00"/><stop offset="0.217" stop-color="#ffff00"/><stop offset="0.287" stop-color="#ff8200"/><stop offset="0.360" stop-color="#ff7300"/><stop offset="0.481" stop-color="#ffff00"/><stop offset="0.533" stop-color="#c2ff00"/><stop offset="0.807" stop-color="#80ff00"/><stop offset="0.840" stop-color="#00ff00"/><stop offset="0.840" stop-color="#00ff00"/><stop offset="0.860" stop-color="#00ffae"/><stop offset="0.870" stop-color="#00ffff"/><stop offset="0.873" stop-color="#00dfff"/><stop offset="0.901" stop-color="#0000ff"/><stop offset="0.927" stop-color="#6600ff"/><stop offset="0.953" stop-color="#7300ff"/><stop offset="1.000" stop-color="#7300ff"/></linearGradient><linearGradient id="a40" x1="0" y1="0" x2="0" y2="1"><stop offset="0.000" stop-color="#07ff00"/><stop offset="0.001" stop-color="#00ff00"/><stop offset="0.013" stop-color="#00ff5d"/><stop offset="0.033" stop-color="#00ff8d"/><stop offset="0.067" stop-color="#00ff00"/><stop offset="0.080" stop-color="#36ff00"/><stop offset="0.160" stop-color="#a4ff00"/><stop offset="0.210" stop-color="#ffff00"/><stop offset="0.287" stop-color="#ff7300"/><stop offset="0.353" stop-color="#ff5f00"/><stop offset="0.447" stop-color="#ffd300"/><stop offset="0.487" stop-color="#ffff00"/><stop offset="0.547" stop-color="#beff00"/><stop offset="0.807" stop-color="#80ff00"/><stop offset="0.840" stop-color="#00ff00"/><stop offset="0.840" stop-color="#00ff00"/><stop offset="0.860" stop-color="#00ffae"/><stop offset="0.870" stop-color="#00ffff"/><stop offset="0.873" stop-color="#00dfff"/><stop offset="0.901" stop-color="#0000ff"/><stop offset="0.927" stop-color="#6600ff"/><stop offset="0.953" stop-color="#7300ff"/><stop offset="1.000" stop-color="#7300ff"/></linearGradient><linearGradient id="a41" x1="0" y1="0" x2="0" y2="1"><stop offset="0.000" stop-color="#00ff2a"/><stop offset="0.013" stop-color="#00ff8f"/><stop offset="0.033" stop-color="#00ffbe"/><stop offset="0.083" stop-color="#00ff00"/><stop offset="0.087" stop-color="#0eff00"/><stop offset="0.216" stop-color="#ffff00"/><stop offset="0.280" stop-color="#ff8900"/><stop offset="0.353" stop-color="#ff6f00"/><stop offset="0.453" stop-color="#ffe700"/><stop offset="0.480" stop-color="#ffff00"/><stop offset="0.560" stop-color="#b6ff00"/><stop offset="0.807" stop-color="#80ff00"/><stop offset="0.840" stop-color="#00ff00"/><stop offset="0.840" stop-color="#00ff00"/><stop offset="0.860" stop-color="#00ffae"/><stop offset="0.870" stop-color="#00ffff"/><stop offset="0.873" stop-color="#00dfff"/><stop offset="0.901" stop-color="#0000ff"/><stop offset="0.927" stop-color="#6600ff"/><stop offset="0.953" stop-color="#7300ff"/><stop offset="1.000" stop-color="#7300ff"/></linearGradient><linearGradient id="a42" x1="0" y1="0" x2="0" y2="1"><stop offset="0.000" stop-color="#00ff82"/><stop offset="0.013" stop-color="#00ffe6"/><stop offset="0.024" stop-color="#00ffff"/><stop offset="0.033" stop-color="#00e8ff"/><stop offset="0.039" stop-color="#00ffff"/><stop offset="0.100" stop-color="#00ff16"/><stop offset="0.107" stop-color="#00ff00"/><stop offset="0.167" stop-color="#b1ff00"/><stop offset="0.211" stop-color="#ffff00"/><stop offset="0.287" stop-color="#ff7900"/><stop offset="0.360" stop-color="#ff6900"/><stop offset="0.485" stop-color="#ffff00"/><stop offset="0.533" stop-color="#c4ff00"/><stop offset="0.807" stop-color="#80ff00"/><stop offset="0.840" stop-color="#00ff00"/><stop offset="0.840" stop-color="#00ff00"/><stop offset="0.860" stop-color="#00ffae"/><stop offset="0.870" stop-color="#00ffff"/><stop offset="0.873" stop-color="#00dfff"/><stop offset="0.901" stop-color="#0000ff"/><stop offset="0.927" stop-color="#6600ff"/><stop offset="0.953" stop-color="#7300ff"/><stop offset="1.000" stop-color="#7300ff"/></linearGradient><linearGradient id="a43" x1="0" y1="0" x2="0" y2="1"><stop offset="0.000" stop-color="#00ff6d"/><stop offset="0.013" stop-color="#00ffd1"/><stop offset="0.033" stop-color="#00ffff"/><stop offset="0.033" stop-color="#00fdff"/><stop offset="0.034" stop-color="#00ffff"/><stop offset="0.093" stop-color="#00ff1c"/><stop offset="0.104" stop-color="#00ff00"/><stop offset="0.173" stop-color="#b5ff00"/><stop offset="0.218" stop-color="#ffff00"/><stop offset="0.287" stop-color="#ff8c00"/><stop offset="0.360" stop-color="#ff7d00"/><stop offset="0.477" stop-color="#ffff00"/><stop offset="0.533" stop-color="#c0ff00"/><stop offset="0.807" stop-color="#80ff00"/><stop offset="0.840" stop-color="#00ff00"/><stop offset="0.840" stop-color="#00ff00"/><stop offset="0.860" stop-color="#00ffae"/><stop offset="0.870" stop-color="#00ffff"/><stop offset="0.873" stop-color="#00dfff"/><stop offset="0.901" stop-color="#0000ff"/><stop offset="0.927" stop-color="#6600ff"/><stop offset="0.953" stop-color="#7300ff"/><stop offset="1.000" stop-color="#7300ff"/></linearGradient><linearGradient id="a44" x1="0" y1="0" x2="0" y2="1"><stop offset="0.000" stop-color="#00ff0f"/><stop offset="0.013" stop-color="#00ff74"/><stop offset="0.033" stop-color="#00ffa4"/><stop offset="0.073" stop-color="#00ff00"/><stop offset="0.080" stop-color="#1dff00"/><stop offset="0.219" stop-color="#ffff00"/><stop offset="0.220" stop-color="#fffe00"/><stop offset="0.300" stop-color="#ff8f00"/><stop offset="0.373" stop-color="#ff9400"/><stop offset="0.472" stop-color="#ffff00"/><stop offset="0.533" stop-color="#bdff00"/><stop offset="0.807" stop-color="#80ff00"/><stop offset="0.840" stop-color="#00ff00"/><stop offset="0.840" stop-color="#00ff00"/><stop offset="0.860" stop-color="#00ffae"/><stop offset="0.870" stop-color="#00ffff"/><stop offset="0.873" stop-color="#00dfff"/><stop offset="0.901" stop-color="#0000ff"/><stop offset="0.927" stop-color="#6600ff"/><stop offset="0.953" stop-color="#7300ff"/><stop offset="1.000" stop-color="#7300ff"/></linearGradient><linearGradient id="a45" x1="0" y1="0" x2="0" y2="1"><stop offset="0.000" stop-color="#00ff3b"/><stop offset="0.013" stop-color="#00ffa0"/><stop offset="0.033" stop-color="#00ffd0"/><stop offset="0.087" stop-color="#00ff03"/><stop offset="0.088" stop-color="#00ff00"/><stop offset="0.222" stop-color="#ffff00"/><stop offset="0.240" stop-color="#ffdc00"/><stop offset="0.313" stop-color="#ff8b00"/><stop offset="0.393" stop-color="#ffa900"/><stop offset="0.471" stop-color="#ffff00"/><stop offset="0.527" stop-color="#c0ff00"/><stop offset="0.807" stop-color="#80ff00"/><stop offset="0.840" stop-color="#00ff00"/><stop offset="0.840" stop-color="#00ff00"/><stop offset="0.860" stop-color="#00ffae"/><stop offset="0.870" stop-color="#00ffff"/><stop offset="0.873" stop-color="#00dfff"/><stop offset="0.901" stop-color="#0000ff"/><stop offset="0.927" stop-color="#6600ff"/><stop offset="0.953" stop-color="#7300ff"/><stop offset="1.000" stop-color="#7300ff"/></linearGradient><linearGradient id="a46" x1="0" y1="0" x2="0" y2="1"><stop offset="0.000" stop-color="#04ff00"/><stop offset="0.000" stop-color="#00ff00"/><stop offset="0.013" stop-color="#00ff61"/><stop offset="0.033" stop-color="#00ff91"/><stop offset="0.068" stop-color="#00ff00"/><stop offset="0.080" stop-color="#31ff00"/><stop offset="0.160" stop-color="#9fff00"/><stop offset="0.215" stop-color="#ffff00"/><stop offset="0.287" stop-color="#ff8100"/><stop offset="0.360" stop-color="#ff7100"/><stop offset="0.482" stop-color="#ffff00"/><stop offset="0.533" stop-color="#c3ff00"/><stop offset="0.807" stop-color="#80ff00"/><stop offset="0.840" stop-color="#00ff00"/><stop offset="0.840" stop-color="#00ff00"/><stop offset="0.860" stop-color="#00ffae"/><stop offset="0.870" stop-color="#00ffff"/><stop offset="0.873" stop-color="#00dfff"/><stop offset="0.901" stop-color="#0000ff"/><stop offset="0.927" stop-color="#6600ff"/><stop offset="0.953" stop-color="#7300ff"/><stop offset="1.000" stop-color="#7300ff"/></linearGradient><linearGradient id="a47" x1="0" y1="0" x2="0" y2="1"><stop offset="0.000" stop-color="#00ff23"/><stop offset="0.013" stop-color="#00ff87"/><stop offset="0.033" stop-color="#00ffb6"/><stop offset="0.081" stop-color="#00ff00"/><stop offset="0.087" stop-color="#17ff00"/><stop offset="0.208" stop-color="#ffff00"/><stop offset="0.287" stop-color="#ff6900"/><stop offset="0.353" stop-color="#ff5500"/><stop offset="0.447" stop-color="#ffcc00"/><stop offset="0.491" stop-color="#ffff00"/><stop offset="0.547" stop-color="#c0ff00"/><stop offset="0.807" stop-color="#80ff00"/><stop offset="0.840" stop-color="#00ff00"/><stop offset="0.840" stop-color="#00ff00"/><stop offset="0.860" stop-color="#00ffae"/><stop offset="0.870" stop-color="#00ffff"/><stop offset="0.873" stop-color="#00dfff"/><stop offset="0.901" stop-color="#0000ff"/><stop offset="0.927" stop-color="#6600ff"/><stop offset="0.953" stop-color="#7300ff"/><stop offset="1.000" stop-color="#7300ff"/></linearGradient><linearGradient id="a48" x1="0" y1="0" x2="0" y2="1"><stop offset="0.000" stop-color="#00ff51"/><stop offset="0.013" stop-color="#00ffb5"/><stop offset="0.033" stop-color="#00ffe5"/><stop offset="0.087" stop-color="#00ff15"/><stop offset="0.096" stop-color="#00ff00"/><stop offset="0.193" stop-color="#dcff00"/><stop offset="0.214" stop-color="#ffff00"/><stop offset="0.287" stop-color="#ff8400"/><stop offset="0.360" stop-color="#ff7500"/><stop offset="0.480" stop-color="#ffff00"/><stop offset="0.533" stop-color="#c2ff00"/><stop offset="0.807" stop-color="#80ff00"/><stop offset="0.840" stop-color="#00ff00"/><stop offset="0.840" stop-color="#00ff00"/><stop offset="0.860" stop-color="#00ffae"/><stop offset="0.870" stop-color="#00ffff"/><stop offset="0.873" stop-color="#00dfff"/><stop offset="0.901" stop-color="#0000ff"/><stop offset="0.927" stop-color="#6600ff"/><stop offset="0.953" stop-color="#7300ff"/><stop offset="1.000" stop-color="#7300ff"/></linearGradient><linearGradient id="a49" x1="0" y1="0" x2="0" y2="1"><stop offset="0.000" stop-color="#01ff00"/><stop offset="0.000" stop-color="#00ff00"/><stop offset="0.013" stop-color="#00ff64"/><stop offset="0.033" stop-color="#00ff94"/><stop offset="0.069" stop-color="#00ff00"/><stop offset="0.080" stop-color="#2dff00"/><stop offset="0.160" stop-color="#9aff00"/><stop offset="0.220" stop-color="#ffff00"/><stop offset="0.287" stop-color="#ff9000"/><stop offset="0.360" stop-color="#ff8100"/><stop offset="0.475" stop-color="#ffff00"/><stop offset="0.533" stop-color="#bfff00"/><stop offset="0.807" stop-color="#80ff00"/><stop offset="0.840" stop-color="#00ff00"/><stop offset="0.840" stop-color="#00ff00"/><stop offset="0.860" stop-color="#00ffae"/><stop offset="0.870" stop-color="#00ffff"/><stop offset="0.873" stop-color="#00dfff"/><stop offset="0.901" stop-color="#0000ff"/><stop offset="0.927" stop-color="#6600ff"/><stop offset="0.953" stop-color="#7300ff"/><stop offset="1.000" stop-color="#7300ff"/></linearGradient><linearGradient id="a50" x1="0" y1="0" x2="0" y2="1"><stop offset="0.000" stop-color="#00ff53"/><stop offset="0.013" stop-color="#00ffb8"/><stop offset="0.033" stop-color="#00ffe7"/><stop offset="0.087" stop-color="#00ff16"/><stop offset="0.096" stop-color="#00ff00"/><stop offset="0.193" stop-color="#e1ff00"/><stop offset="0.210" stop-color="#ffff00"/><stop offset="0.287" stop-color="#ff7900"/><stop offset="0.360" stop-color="#ff6900"/><stop offset="0.485" stop-color="#ffff00"/><stop offset="0.533" stop-color="#c4ff00"/><stop offset="0.807" stop-color="#80ff00"/><stop offset="0.840" stop-color="#00ff00"/><stop offset="0.840" stop-color="#00ff00"/><stop offset="0.860" stop-color="#00ffae"/><stop offset="0.870" stop-color="#00ffff"/><stop offset="0.873" stop-color="#00dfff"/><stop offset="0.901" stop-color="#0000ff"/><stop offset="0.927" stop-color="#6600ff"/><stop offset="0.953" stop-color="#7300ff"/><stop offset="1.000" stop-color="#7300ff"/></linearGradient><linearGradient id="a51" x1="0" y1="0" x2="0" y2="1"><stop offset="0.000" stop-color="#00ff8b"/><stop offset="0.013" stop-color="#00fff0"/><stop offset="0.020" stop-color="#00ffff"/><stop offset="0.033" stop-color="#00deff"/><stop offset="0.042" stop-color="#00ffff"/><stop offset="0.100" stop-color="#00ff21"/><stop offset="0.111" stop-color="#00ff00"/><stop offset="0.160" stop-color="#95ff00"/><stop offset="0.226" stop-color="#ffff00"/><stop offset="0.287" stop-color="#ff9d00"/><stop offset="0.360" stop-color="#ff8f00"/><stop offset="0.471" stop-color="#ffff00"/><stop offset="0.540" stop-color="#b9ff00"/><stop offset="0.807" stop-color="#80ff00"/><stop offset="0.840" stop-color="#00ff00"/><stop offset="0.840" stop-color="#00ff00"/><stop offset="0.860" stop-color="#00ffae"/><stop offset="0.870" stop-color="#00ffff"/><stop offset="0.873" stop-color="#00dfff"/><stop offset="0.901" stop-color="#0000ff"/><stop offset="0.927" stop-color="#6600ff"/><stop offset="0.953" stop-color="#7300ff"/><stop offset="1.000" stop-color="#7300ff"/></linearGradient><linearGradient id="a52" x1="0" y1="0" x2="0" y2="1"><stop offset="0.000" stop-color="#2cff00"/><stop offset="0.006" stop-color="#00ff00"/><stop offset="0.013" stop-color="#00ff38"/><stop offset="0.033" stop-color="#00ff69"/><stop offset="0.059" stop-color="#00ff00"/><stop offset="0.080" stop-color="#56ff00"/><stop offset="0.153" stop-color="#82ff00"/><stop offset="0.234" stop-color="#ffff00"/><stop offset="0.287" stop-color="#ffae00"/><stop offset="0.367" stop-color="#ffa500"/><stop offset="0.460" stop-color="#ffff00"/><stop offset="0.533" stop-color="#b8ff00"/><stop offset="0.807" stop-color="#80ff00"/><stop offset="0.840" stop-color="#00ff00"/><stop offset="0.840" stop-color="#00ff00"/><stop offset="0.860" stop-color="#00ffae"/><stop offset="0.870" stop-color="#00ffff"/><stop offset="0.873" stop-color="#00dfff"/><stop offset="0.901" stop-color="#0000ff"/><stop offset="0.927" stop-color="#6600ff"/><stop offset="0.953" stop-color="#7300ff"/><stop offset="1.000" stop-color="#7300ff"/></linearGradient><linearGradient id="a53" x1="0" y1="0" x2="0" y2="1"><stop offset="0.000" stop-color="#00ff85"/><stop offset="0.013" stop-color="#00ffea"/><stop offset="0.022" stop-color="#00ffff"/><stop offset="0.033" stop-color="#00e3ff"/><stop offset="0.041" stop-color="#00ffff"/><stop offset="0.093" stop-color="#00ff35"/><stop offset="0.112" stop-color="#00ff00"/><stop offset="0.160" stop-color="#8bff00"/><stop offset="0.240" stop-color="#ffff00"/><stop offset="0.287" stop-color="#ffbc00"/><stop offset="0.367" stop-color="#ffb300"/><stop offset="0.451" stop-color="#ffff00"/><stop offset="0.533" stop-color="#b5ff00"/><stop offset="0.807" stop-color="#80ff00"/><stop offset="0.840" stop-color="#00ff00"/><stop offset="0.840" stop-color="#00ff00"/><stop offset="0.860" stop-color="#00ffae"/><stop offset="0.870" stop-color="#00ffff"/><stop offset="0.873" stop-color="#00dfff"/><stop offset="0.901" stop-color="#0000ff"/><stop offset="0.927" stop-color="#6600ff"/><stop offset="0.953" stop-color="#7300ff"/><stop offset="1.000" stop-color="#7300ff"/></linearGradient><linearGradient id="a54" x1="0" y1="0" x2="0" y2="1"><stop offset="0.000" stop-color="#00ff14"/><stop offset="0.013" stop-color="#00ff79"/><stop offset="0.033" stop-color="#00ffa9"/><stop offset="0.075" stop-color="#00ff00"/><stop offset="0.080" stop-color="#14ff00"/><stop offset="0.251" stop-color="#ffff00"/><stop offset="0.287" stop-color="#ffcf00"/><stop offset="0.373" stop-color="#ffca00"/><stop offset="0.438" stop-color="#ffff00"/><stop offset="0.533" stop-color="#b1ff00"/><stop offset="0.807" stop-color="#80ff00"/><stop offset="0.840" stop-color="#00ff00"/><stop offset="0.840" stop-color="#00ff00"/><stop offset="0.860" stop-color="#00ffae"/><stop offset="0.870" stop-color="#00ffff"/><stop offset="0.873" stop-color="#00dfff"/><stop offset="0.901" stop-color="#0000ff"/><stop offset="0.927" stop-color="#6600ff"/><stop offset="0.953" stop-color="#7300ff"/><stop offset="1.000" stop-color="#7300ff"/></linearGradient><linearGradient id="a55" x1="0" y1="0" x2="0" y2="1"><stop offset="0.000" stop-color="#00ff06"/><stop offset="0.013" stop-color="#00ff6b"/><stop offset="0.033" stop-color="#00ff9c"/><stop offset="0.072" stop-color="#00ff00"/><stop offset="0.080" stop-color="#21ff00"/><stop offset="0.213" stop-color="#d4ff00"/><stop offset="0.251" stop-color="#ffff00"/><stop offset="0.300" stop-color="#ffc600"/><stop offset="0.387" stop-color="#ffd300"/><stop offset="0.440" stop-color="#ffff00"/><stop offset="0.533" stop-color="#b1ff00"/><stop offset="0.807" stop-color="#80ff00"/><stop offset="0.840" stop-color="#00ff00"/><stop offset="0.840" stop-color="#00ff00"/><stop offset="0.860" stop-color="#00ffae"/><stop offset="0.870" stop-color="#00ffff"/><stop offset="0.873" stop-color="#00dfff"/><stop offset="0.901" stop-color="#0000ff"/><stop offset="0.927" stop-color="#6600ff"/><stop offset="0.953" stop-color="#7300ff"/><stop offset="1.000" stop-color="#7300ff"/></linearGradient><linearGradient id="a56" x1="0" y1="0" x2="0" y2="1"><stop offset="0.000" stop-color="#00ff2a"/><stop offset="0.013" stop-color="#00ff8f"/><stop offset="0.033" stop-color="#00ffbf"/><stop offset="0.085" stop-color="#00ff00"/><stop offset="0.087" stop-color="#07ff00"/><stop offset="0.248" stop-color="#ffff00"/><stop offset="0.267" stop-color="#ffe300"/><stop offset="0.353" stop-color="#ffc600"/><stop offset="0.430" stop-color="#ffff00"/><stop offset="0.540" stop-color="#aeff00"/><stop offset="0.807" stop-color="#80ff00"/><stop offset="0.840" stop-color="#00ff00"/><stop offset="0.840" stop-color="#00ff00"/><stop offset="0.860" stop-color="#00ffae"/><stop offset="0.870" stop-color="#00ffff"/><stop offset="0.873" stop-color="#00dfff"/><stop offset="0.901" stop-color="#0000ff"/><stop offset="0.927" stop-color="#6600ff"/><stop offset="0.953" stop-color="#7300ff"/><stop offset="1.000" stop-color="#7300ff"/></linearGradient><linearGradient id="a57" x1="0" y1="0" x2="0" y2="1"><stop offset="0.000" stop-color="#00ff7b"/><stop offset="0.013" stop-color="#00ffdf"/><stop offset="0.027" stop-color="#00ffff"/><stop offset="0.033" stop-color="#00efff"/><stop offset="0.038" stop-color="#00ffff"/><stop offset="0.093" stop-color="#00ff29"/><stop offset="0.108" stop-color="#00ff00"/><stop offset="0.167" stop-color="#a6ff00"/><stop offset="0.222" stop-color="#ffff00"/><stop offset="0.287" stop-color="#ff9700"/><stop offset="0.360" stop-color="#ff8900"/><stop offset="0.472" stop-color="#ffff00"/><stop offset="0.533" stop-color="#beff00"/><stop offset="0.807" stop-color="#80ff00"/><stop offset="0.840" stop-color="#00ff00"/><stop offset="0.840" stop-color="#00ff00"/><stop offset="0.860" stop-color="#00ffae"/><stop offset="0.870" stop-color="#00ffff"/><stop offset="0.873" stop-color="#00dfff"/><stop offset="0.901" stop-color="#0000ff"/><stop offset="0.927" stop-color="#6600ff"/><stop offset="0.953" stop-color="#7300ff"/><stop offset="1.000" stop-color="#7300ff"/></linearGradient><linearGradient id="a58" x1="0" y1="0" x2="0" y2="1"><stop offset="0.000" stop-color="#00ff02"/><stop offset="0.013" stop-color="#00ff66"/><stop offset="0.033" stop-color="#00ff96"/><stop offset="0.069" stop-color="#00ff00"/><stop offset="0.080" stop-color="#2dff00"/><stop offset="0.160" stop-color="#a5ff00"/><stop offset="0.209" stop-color="#ffff00"/><stop offset="0.287" stop-color="#ff7000"/><stop offset="0.353" stop-color="#ff5b00"/><stop offset="0.447" stop-color="#ffd000"/><stop offset="0.489" stop-color="#ffff00"/><stop offset="0.547" stop-color="#bfff00"/><stop offset="0.807" stop-color="#80ff00"/><stop offset="0.840" stop-color="#00ff00"/><stop offset="0.840" stop-color="#00ff00"/><stop offset="0.860" stop-color="#00ffae"/><stop offset="0.870" stop-color="#00ffff"/><stop offset="0.873" stop-color="#00dfff"/><stop offset="0.901" stop-color="#0000ff"/><stop offset="0.927" stop-color="#6600ff"/><stop offset="0.953" stop-color="#7300ff"/><stop offset="1.000" stop-color="#7300ff"/></linearGradient><linearGradient id="a59" x1="0" y1="0" x2="0" y2="1"><stop offset="0.000" stop-color="#00ff70"/><stop offset="0.013" stop-color="#00ffd4"/><stop offset="0.031" stop-color="#00ffff"/><stop offset="0.033" stop-color="#00faff"/><stop offset="0.035" stop-color="#00ffff"/><stop offset="0.093" stop-color="#00ff1d"/><stop offset="0.104" stop-color="#00ff00"/><stop offset="0.173" stop-color="#bbff00"/><stop offset="0.213" stop-color="#ffff00"/><stop offset="0.287" stop-color="#ff7e00"/><stop offset="0.360" stop-color="#ff6f00"/><stop offset="0.483" stop-color="#ffff00"/><stop offset="0.533" stop-color="#c3ff00"/><stop offset="0.807" stop-color="#80ff00"/><stop offset="0.840" stop-color="#00ff00"/><stop offset="0.840" stop-color="#00ff00"/><stop offset="0.860" stop-color="#00ffae"/><stop offset="0.870" stop-color="#00ffff"/><stop offset="0.873" stop-color="#00dfff"/><stop offset="0.901" stop-color="#0000ff"/><stop offset="0.927" stop-color="#6600ff"/><stop offset="0.953" stop-color="#7300ff"/><stop offset="1.000" stop-color="#7300ff"/></linearGradient><linearGradient id="a60" x1="0" y1="0" x2="0" y2="1"><stop offset="0.000" stop-color="#00ff6c"/><stop offset="0.013" stop-color="#00ffd1"/><stop offset="0.032" stop-color="#00ffff"/><stop offset="0.033" stop-color="#00fdff"/><stop offset="0.034" stop-color="#00ffff"/><stop offset="0.087" stop-color="#00ff32"/><stop offset="0.107" stop-color="#00ff00"/><stop offset="0.167" stop-color="#97ff00"/><stop offset="0.243" stop-color="#ffff00"/><stop offset="0.293" stop-color="#ffbc00"/><stop offset="0.373" stop-color="#ffbc00"/><stop offset="0.449" stop-color="#ffff00"/><stop offset="0.533" stop-color="#b4ff00"/><stop offset="0.807" stop-color="#80ff00"/><stop offset="0.840" stop-color="#00ff00"/><stop offset="0.840" stop-color="#00ff00"/><stop offset="0.860" stop-color="#00ffae"/><stop offset="0.870" stop-color="#00ffff"/><stop offset="0.873" stop-color="#00dfff"/><stop offset="0.901" stop-color="#0000ff"/><stop offset="0.927" stop-color="#6600ff"/><stop offset="0.953" stop-color="#7300ff"/><stop offset="1.000" stop-color="#7300ff"/></linearGradient><linearGradient id="a61" x1="0" y1="0" x2="0" y2="1"><stop offset="0.000" stop-color="#00ff41"/><stop offset="0.013" stop-color="#00ffa6"/><stop offset="0.033" stop-color="#00ffd7"/><stop offset="0.087" stop-color="#00ff0f"/><stop offset="0.095" stop-color="#00ff00"/><stop offset="0.193" stop-color="#a9ff00"/><stop offset="0.270" stop-color="#ffff00"/><stop offset="0.293" stop-color="#ffe500"/><stop offset="0.387" stop-color="#ffed00"/><stop offset="0.413" stop-color="#ffff00"/><stop offset="0.533" stop-color="#abff00"/><stop offset="0.800" stop-color="#83ff00"/><stop offset="0.820" stop-color="#4dff00"/><stop offset="0.837" stop-color="#00ff00"/><stop offset="0.847" stop-color="#00ff2d"/><stop offset="0.867" stop-color="#00fff2"/><stop offset="0.869" stop-color="#00ffff"/><stop offset="0.880" stop-color="#00b3ff"/><stop offset="0.901" stop-color="#0000ff"/><stop offset="0.907" stop-color="#1a00ff"/><stop offset="0.927" stop-color="#6600ff"/><stop offset="0.953" stop-color="#7300ff"/><stop offset="1.000" stop-color="#7300ff"/></linearGradient><linearGradient id="a62" x1="0" y1="0" x2="0" y2="1"><stop offset="0.000" stop-color="#00ff0e"/><stop offset="0.013" stop-color="#00ff73"/><stop offset="0.033" stop-color="#00ffa4"/><stop offset="0.074" stop-color="#00ff00"/><stop offset="0.080" stop-color="#17ff00"/><stop offset="0.277" stop-color="#ffff00"/><stop offset="0.293" stop-color="#ffec00"/><stop offset="0.387" stop-color="#fff400"/><stop offset="0.404" stop-color="#ffff00"/><stop offset="0.533" stop-color="#a9ff00"/><stop offset="0.800" stop-color="#83ff00"/><stop offset="0.820" stop-color="#4dff00"/><stop offset="0.837" stop-color="#00ff00"/><stop offset="0.847" stop-color="#00ff2d"/><stop offset="0.867" stop-color="#00fff2"/><stop offset="0.869" stop-color="#00ffff"/><stop offset="0.880" stop-color="#00b3ff"/><stop offset="0.901" stop-color="#0000ff"/><stop offset="0.907" stop-color="#1a00ff"/><stop offset="0.927" stop-color="#6600ff"/><stop offset="0.953" stop-color="#7300ff"/><stop offset="1.000" stop-color="#7300ff"/></linearGradient><linearGradient id="a63" x1="0" y1="0" x2="0" y2="1"><stop offset="0.000" stop-color="#00ff23"/><stop offset="0.013" stop-color="#00ff88"/><stop offset="0.033" stop-color="#00ffb8"/><stop offset="0.079" stop-color="#00ff00"/><stop offset="0.080" stop-color="#05ff00"/><stop offset="0.249" stop-color="#ffff00"/><stop offset="0.280" stop-color="#ffd100"/><stop offset="0.367" stop-color="#ffc300"/><stop offset="0.439" stop-color="#ffff00"/><stop offset="0.533" stop-color="#b2ff00"/><stop offset="0.807" stop-color="#80ff00"/><stop offset="0.840" stop-color="#00ff00"/><stop offset="0.840" stop-color="#00ff00"/><stop offset="0.860" stop-color="#00ffae"/><stop offset="0.870" stop-color="#00ffff"/><stop offset="0.873" stop-color="#00dfff"/><stop offset="0.901" stop-color="#0000ff"/><stop offset="0.927" stop-color="#6600ff"/><stop offset="0.953" stop-color="#7300ff"/><stop offset="1.000" stop-color="#7300ff"/></linearGradient><linearGradient id="a64" x1="0" y1="0" x2="0" y2="1"><stop offset="0.000" stop-color="#00ff0c"/><stop offset="0.013" stop-color="#00ff71"/><stop offset="0.033" stop-color="#00ffa1"/><stop offset="0.073" stop-color="#00ff00"/><stop offset="0.080" stop-color="#1dff00"/><stop offset="0.245" stop-color="#ffff00"/><stop offset="0.293" stop-color="#ffbd00"/><stop offset="0.373" stop-color="#ffbd00"/><stop offset="0.448" stop-color="#ffff00"/><stop offset="0.533" stop-color="#b4ff00"/><stop offset="0.807" stop-color="#80ff00"/><stop offset="0.840" stop-color="#00ff00"/><stop offset="0.840" stop-color="#00ff00"/><stop offset="0.860" stop-color="#00ffae"/><stop offset="0.870" stop-color="#00ffff"/><stop offset="0.873" stop-color="#00dfff"/><stop offset="0.901" stop-color="#0000ff"/><stop offset="0.927" stop-color="#6600ff"/><stop offset="0.953" stop-color="#7300ff"/><stop offset="1.000" stop-color="#7300ff"/></linearGradient><linearGradient id="a65" x1="0" y1="0" x2="0" y2="1"><stop offset="0.000" stop-color="#00ff43"/><stop offset="0.013" stop-color="#00ffa7"/><stop offset="0.033" stop-color="#00ffd7"/><stop offset="0.087" stop-color="#00ff06"/><stop offset="0.089" stop-color="#00ff00"/><stop offset="0.208" stop-color="#ffff00"/><stop offset="0.247" stop-color="#ffab00"/><stop offset="0.313" stop-color="#ff5900"/><stop offset="0.380" stop-color="#ff6e00"/><stop offset="0.489" stop-color="#ffff00"/><stop offset="0.527" stop-color="#ccff00"/><stop offset="0.807" stop-color="#80ff00"/><stop offset="0.840" stop-color="#00ff00"/><stop offset="0.840" stop-color="#00ff00"/><stop offset="0.860" stop-color="#00ffae"/><stop offset="0.870" stop-color="#00ffff"/><stop offset="0.873" stop-color="#00dfff"/><stop offset="0.901" stop-color="#0000ff"/><stop offset="0.927" stop-color="#6600ff"/><stop offset="0.953" stop-color="#7300ff"/><stop offset="1.000" stop-color="#7300ff"/></linearGradient><linearGradient id="a66" x1="0" y1="0" x2="0" y2="1"><stop offset="0.000" stop-color="#00ff31"/><stop offset="0.013" stop-color="#00ff94"/><stop offset="0.033" stop-color="#00ffc0"/><stop offset="0.080" stop-color="#00ff00"/><stop offset="0.087" stop-color="#1dff00"/><stop offset="0.179" stop-color="#ffff00"/><stop offset="0.267" stop-color="#ff2700"/><stop offset="0.320" stop-color="#ff1300"/><stop offset="0.393" stop-color="#ff1d00"/><stop offset="0.525" stop-color="#ffff00"/><stop offset="0.533" stop-color="#f1ff00"/><stop offset="0.680" stop-color="#a6ff00"/><stop offset="0.807" stop-color="#80ff00"/><stop offset="0.840" stop-color="#00ff00"/><stop offset="0.840" stop-color="#00ff00"/><stop offset="0.860" stop-color="#00ffae"/><stop offset="0.870" stop-color="#00ffff"/><stop offset="0.873" stop-color="#00dfff"/><stop offset="0.901" stop-color="#0000ff"/><stop offset="0.927" stop-color="#6600ff"/><stop offset="0.953" stop-color="#7300ff"/><stop offset="1.000" stop-color="#7300ff"/></linearGradient><linearGradient id="a67" x1="0" y1="0" x2="0" y2="1"><stop offset="0.000" stop-color="#00ff61"/><stop offset="0.013" stop-color="#00ffc5"/><stop offset="0.033" stop-color="#00fff5"/><stop offset="0.087" stop-color="#00ff1f"/><stop offset="0.098" stop-color="#00ff00"/><stop offset="0.180" stop-color="#dbff00"/><stop offset="0.198" stop-color="#ffff00"/><stop offset="0.287" stop-color="#ff4f00"/><stop offset="0.353" stop-color="#ff3800"/><stop offset="0.440" stop-color="#ffae00"/><stop offset="0.500" stop-color="#ffff00"/><stop offset="0.540" stop-color="#c9ff00"/><stop offset="0.807" stop-color="#80ff00"/><stop offset="0.840" stop-color="#00ff00"/><stop offset="0.840" stop-color="#00ff00"/><stop offset="0.860" stop-color="#00ffae"/><stop offset="0.870" stop-color="#00ffff"/><stop offset="0.873" stop-color="#00dfff"/><stop offset="0.901" stop-color="#0000ff"/><stop offset="0.927" stop-color="#6600ff"/><stop offset="0.953" stop-color="#7300ff"/><stop offset="1.000" stop-color="#7300ff"/></linearGradient><linearGradient id="a68" x1="0" y1="0" x2="0" y2="1"><stop offset="0.000" stop-color="#00ff3e"/><stop offset="0.013" stop-color="#00ffa3"/><stop offset="0.033" stop-color="#00ffd3"/><stop offset="0.087" stop-color="#00ff07"/><stop offset="0.090" stop-color="#00ff00"/><stop offset="0.220" stop-color="#f5ff00"/><stop offset="0.228" stop-color="#ffff00"/><stop offset="0.300" stop-color="#ffa100"/><stop offset="0.380" stop-color="#ffaa00"/><stop offset="0.462" stop-color="#ffff00"/><stop offset="0.527" stop-color="#bdff00"/><stop offset="0.807" stop-color="#80ff00"/><stop offset="0.840" stop-color="#00ff00"/><stop offset="0.840" stop-color="#00ff00"/><stop offset="0.860" stop-color="#00ffae"/><stop offset="0.870" stop-color="#00ffff"/><stop offset="0.873" stop-color="#00dfff"/><stop offset="0.901" stop-color="#0000ff"/><stop offset="0.927" stop-color="#6600ff"/><stop offset="0.953" stop-color="#7300ff"/><stop offset="1.000" stop-color="#7300ff"/></linearGradient><linearGradient id="a69" x1="0" y1="0" x2="0" y2="1"><stop offset="0.000" stop-color="#00ff16"/><stop offset="0.013" stop-color="#00ff7b"/><stop offset="0.033" stop-color="#00ffac"/><stop offset="0.076" stop-color="#00ff00"/><stop offset="0.080" stop-color="#11ff00"/><stop offset="0.260" stop-color="#ffff00"/><stop offset="0.287" stop-color="#ffdc00"/><stop offset="0.373" stop-color="#ffd800"/><stop offset="0.425" stop-color="#ffff00"/><stop offset="0.533" stop-color="#aeff00"/><stop offset="0.807" stop-color="#80ff00"/><stop offset="0.840" stop-color="#00ff00"/><stop offset="0.840" stop-color="#00ff00"/><stop offset="0.860" stop-color="#00ffae"/><stop offset="0.870" stop-color="#00ffff"/><stop offset="0.873" stop-color="#00dfff"/><stop offset="0.901" stop-color="#0000ff"/><stop offset="0.927" stop-color="#6600ff"/><stop offset="0.953" stop-color="#7300ff"/><stop offset="1.000" stop-color="#7300ff"/></linearGradient><linearGradient id="a70" x1="0" y1="0" x2="0" y2="1"><stop offset="0.000" stop-color="#00ff3e"/><stop offset="0.013" stop-color="#00ffa3"/><stop offset="0.033" stop-color="#00ffd4"/><stop offset="0.087" stop-color="#00ff0c"/><stop offset="0.094" stop-color="#00ff00"/><stop offset="0.200" stop-color="#b5ff00"/><stop offset="0.267" stop-color="#ffff00"/><stop offset="0.300" stop-color="#ffdb00"/><stop offset="0.393" stop-color="#ffeb00"/><stop offset="0.420" stop-color="#ffff00"/><stop offset="0.533" stop-color="#acff00"/><stop offset="0.807" stop-color="#80ff00"/><stop offset="0.840" stop-color="#00ff00"/><stop offset="0.840" stop-color="#00ff00"/><stop offset="0.860" stop-color="#00ffae"/><stop offset="0.870" stop-color="#00ffff"/><stop offset="0.873" stop-color="#00dfff"/><stop offset="0.901" stop-color="#0000ff"/><stop offset="0.927" stop-color="#6600ff"/><stop offset="0.953" stop-color="#7300ff"/><stop offset="1.000" stop-color="#7300ff"/></linearGradient><linearGradient id="a71" x1="0" y1="0" x2="0" y2="1"><stop offset="0.000" stop-color="#00ff1b"/><stop offset="0.013" stop-color="#00ff80"/><stop offset="0.033" stop-color="#00ffb1"/><stop offset="0.077" stop-color="#00ff00"/><stop offset="0.080" stop-color="#0cff00"/><stop offset="0.255" stop-color="#ffff00"/><stop offset="0.287" stop-color="#ffd300"/><stop offset="0.373" stop-color="#ffcf00"/><stop offset="0.433" stop-color="#ffff00"/><stop offset="0.533" stop-color="#b0ff00"/><stop offset="0.807" stop-color="#80ff00"/><stop offset="0.840" stop-color="#00ff00"/><stop offset="0.840" stop-color="#00ff00"/><stop offset="0.860" stop-color="#00ffae"/><stop offset="0.870" stop-color="#00ffff"/><stop offset="0.873" stop-color="#00dfff"/><stop offset="0.901" stop-color="#0000ff"/><stop offset="0.927" stop-color="#6600ff"/><stop offset="0.953" stop-color="#7300ff"/><stop offset="1.000" stop-color="#7300ff"/></linearGradient><linearGradient id="a72" x1="0" y1="0" x2="0" y2="1"><stop offset="0.000" stop-color="#00ff49"/><stop offset="0.013" stop-color="#00ffae"/><stop offset="0.033" stop-color="#00ffde"/><stop offset="0.087" stop-color="#00ff11"/><stop offset="0.095" stop-color="#00ff00"/><stop offset="0.200" stop-color="#d6ff00"/><stop offset="0.229" stop-color="#ffff00"/><stop offset="0.293" stop-color="#ffa100"/><stop offset="0.373" stop-color="#ffa100"/><stop offset="0.465" stop-color="#ffff00"/><stop offset="0.533" stop-color="#baff00"/><stop offset="0.807" stop-color="#80ff00"/><stop offset="0.840" stop-color="#00ff00"/><stop offset="0.840" stop-color="#00ff00"/><stop offset="0.860" stop-color="#00ffae"/><stop offset="0.870" stop-color="#00ffff"/><stop offset="0.873" stop-color="#00dfff"/><stop offset="0.901" stop-color="#0000ff"/><stop offset="0.927" stop-color="#6600ff"/><stop offset="0.953" stop-color="#7300ff"/><stop offset="1.000" stop-color="#7300ff"/></linearGradient><linearGradient id="a73" x1="0" y1="0" x2="0" y2="1"><stop offset="0.000" stop-color="#00ff47"/><stop offset="0.013" stop-color="#00ffaa"/><stop offset="0.033" stop-color="#00ffd8"/><stop offset="0.087" stop-color="#00ff00"/><stop offset="0.087" stop-color="#01ff00"/><stop offset="0.189" stop-color="#ffff00"/><stop offset="0.240" stop-color="#ff7f00"/><stop offset="0.307" stop-color="#ff1600"/><stop offset="0.373" stop-color="#ff2200"/><stop offset="0.513" stop-color="#ffff00"/><stop offset="0.533" stop-color="#dfff00"/><stop offset="0.693" stop-color="#a3ff00"/><stop offset="0.807" stop-color="#80ff00"/><stop offset="0.840" stop-color="#00ff00"/><stop offset="0.840" stop-color="#00ff00"/><stop offset="0.860" stop-color="#00ffae"/><stop offset="0.870" stop-color="#00ffff"/><stop offset="0.873" stop-color="#00dfff"/><stop offset="0.901" stop-color="#0000ff"/><stop offset="0.927" stop-color="#6600ff"/><stop offset="0.953" stop-color="#7300ff"/><stop offset="1.000" stop-color="#7300ff"/></linearGradient><linearGradient id="a74" x1="0" y1="0" x2="0" y2="1"><stop offset="0.000" stop-color="#00ff20"/><stop offset="0.013" stop-color="#00ff81"/><stop offset="0.033" stop-color="#00ffaa"/><stop offset="0.073" stop-color="#00ff00"/><stop offset="0.087" stop-color="#3dff00"/><stop offset="0.162" stop-color="#ffff00"/><stop offset="0.253" stop-color="#ff1300"/><stop offset="0.427" stop-color="#ff2100"/><stop offset="0.547" stop-color="#fffa00"/><stop offset="0.554" stop-color="#ffff00"/><stop offset="0.687" stop-color="#abff00"/><stop offset="0.807" stop-color="#80ff00"/><stop offset="0.840" stop-color="#00ff00"/><stop offset="0.840" stop-color="#00ff00"/><stop offset="0.860" stop-color="#00ffae"/><stop offset="0.870" stop-color="#00ffff"/><stop offset="0.873" stop-color="#00dfff"/><stop offset="0.901" stop-color="#0000ff"/><stop offset="0.927" stop-color="#6600ff"/><stop offset="0.953" stop-color="#7300ff"/><stop offset="1.000" stop-color="#7300ff"/></linearGradient><linearGradient id="a75" x1="0" y1="0" x2="0" y2="1"><stop offset="0.000" stop-color="#00ff38"/><stop offset="0.013" stop-color="#00ff9c"/><stop offset="0.033" stop-color="#00ffcc"/><stop offset="0.086" stop-color="#00ff00"/><stop offset="0.087" stop-color="#03ff00"/><stop offset="0.213" stop-color="#ffff00"/><stop offset="0.267" stop-color="#ff9300"/><stop offset="0.340" stop-color="#ff6500"/><stop offset="0.420" stop-color="#ffaf00"/><stop offset="0.483" stop-color="#ffff00"/><stop offset="0.527" stop-color="#c9ff00"/><stop offset="0.807" stop-color="#80ff00"/><stop offset="0.840" stop-color="#00ff00"/><stop offset="0.840" stop-color="#00ff00"/><stop offset="0.860" stop-color="#00ffae"/><stop offset="0.870" stop-color="#00ffff"/><stop offset="0.873" stop-color="#00dfff"/><stop offset="0.901" stop-color="#0000ff"/><stop offset="0.927" stop-color="#6600ff"/><stop offset="0.953" stop-color="#7300ff"/><stop offset="1.000" stop-color="#7300ff"/></linearGradient><linearGradient id="a76" x1="0" y1="0" x2="0" y2="1"><stop offset="0.000" stop-color="#00ff16"/><stop offset="0.013" stop-color="#00ff7a"/><stop offset="0.033" stop-color="#00ffab"/><stop offset="0.075" stop-color="#00ff00"/><stop offset="0.080" stop-color="#13ff00"/><stop offset="0.242" stop-color="#ffff00"/><stop offset="0.287" stop-color="#ffbe00"/><stop offset="0.367" stop-color="#ffb500"/><stop offset="0.450" stop-color="#ffff00"/><stop offset="0.533" stop-color="#b5ff00"/><stop offset="0.807" stop-color="#80ff00"/><stop offset="0.840" stop-color="#00ff00"/><stop offset="0.840" stop-color="#00ff00"/><stop offset="0.860" stop-color="#00ffae"/><stop offset="0.870" stop-color="#00ffff"/><stop offset="0.873" stop-color="#00dfff"/><stop offset="0.901" stop-color="#0000ff"/><stop offset="0.927" stop-color="#6600ff"/><stop offset="0.953" stop-color="#7300ff"/><stop offset="1.000" stop-color="#7300ff"/></linearGradient><linearGradient id="a77" x1="0" y1="0" x2="0" y2="1"><stop offset="0.000" stop-color="#00ff32"/><stop offset="0.013" stop-color="#00ff97"/><stop offset="0.033" stop-color="#00ffc7"/><stop offset="0.087" stop-color="#00ff07"/><stop offset="0.091" stop-color="#00ff00"/><stop offset="0.243" stop-color="#ffff00"/><stop offset="0.247" stop-color="#fff900"/><stop offset="0.327" stop-color="#ffbc00"/><stop offset="0.420" stop-color="#fff000"/><stop offset="0.439" stop-color="#ffff00"/><stop offset="0.540" stop-color="#b0ff00"/><stop offset="0.807" stop-color="#80ff00"/><stop offset="0.840" stop-color="#00ff00"/><stop offset="0.840" stop-color="#00ff00"/><stop offset="0.860" stop-color="#00ffae"/><stop offset="0.870" stop-color="#00ffff"/><stop offset="0.873" stop-color="#00dfff"/><stop offset="0.901" stop-color="#0000ff"/><stop offset="0.927" stop-color="#6600ff"/><stop offset="0.953" stop-color="#7300ff"/><stop offset="1.000" stop-color="#7300ff"/></linearGradient><linearGradient id="a78" x1="0" y1="0" x2="0" y2="1"><stop offset="0.000" stop-color="#08ff00"/><stop offset="0.001" stop-color="#00ff00"/><stop offset="0.013" stop-color="#00ff5e"/><stop offset="0.033" stop-color="#00ff8c"/><stop offset="0.072" stop-color="#00ff00"/><stop offset="0.080" stop-color="#1eff00"/><stop offset="0.160" stop-color="#78ff00"/><stop offset="0.256" stop-color="#ffff00"/><stop offset="0.287" stop-color="#ffd400"/><stop offset="0.373" stop-color="#ffcf00"/><stop offset="0.434" stop-color="#ffff00"/><stop offset="0.533" stop-color="#b0ff00"/><stop offset="0.807" stop-color="#80ff00"/><stop offset="0.840" stop-color="#00ff00"/><stop offset="0.840" stop-color="#00ff00"/><stop offset="0.860" stop-color="#00ffae"/><stop offset="0.870" stop-color="#00ffff"/><stop offset="0.873" stop-color="#00dfff"/><stop offset="0.901" stop-color="#0000ff"/><stop offset="0.927" stop-color="#6600ff"/><stop offset="0.953" stop-color="#7300ff"/><stop offset="1.000" stop-color="#7300ff"/></linearGradient><linearGradient id="a79" x1="0" y1="0" x2="0" y2="1"><stop offset="0.000" stop-color="#00ff5b"/><stop offset="0.013" stop-color="#00ffc2"/><stop offset="0.033" stop-color="#00ffee"/><stop offset="0.093" stop-color="#00ff2f"/><stop offset="0.114" stop-color="#00ff00"/><stop offset="0.180" stop-color="#95ff00"/><stop offset="0.254" stop-color="#ffff00"/><stop offset="0.287" stop-color="#ffd000"/><stop offset="0.373" stop-color="#ffca00"/><stop offset="0.438" stop-color="#ffff00"/><stop offset="0.533" stop-color="#b1ff00"/><stop offset="0.807" stop-color="#80ff00"/><stop offset="0.840" stop-color="#00ff00"/><stop offset="0.840" stop-color="#00ff00"/><stop offset="0.860" stop-color="#00ffae"/><stop offset="0.870" stop-color="#00ffff"/><stop offset="0.873" stop-color="#00dfff"/><stop offset="0.901" stop-color="#0000ff"/><stop offset="0.927" stop-color="#6600ff"/><stop offset="0.953" stop-color="#7300ff"/><stop offset="1.000" stop-color="#7300ff"/></linearGradient><linearGradient id="a80" x1="0" y1="0" x2="0" y2="1"><stop offset="0.000" stop-color="#00ff66"/><stop offset="0.013" stop-color="#00ffcd"/><stop offset="0.033" stop-color="#00fff8"/><stop offset="0.116" stop-color="#00ff00"/><stop offset="0.153" stop-color="#6eff00"/><stop offset="0.232" stop-color="#ffff00"/><stop offset="0.280" stop-color="#ffa700"/><stop offset="0.353" stop-color="#ff8e00"/><stop offset="0.469" stop-color="#ffff00"/><stop offset="0.540" stop-color="#b9ff00"/><stop offset="0.807" stop-color="#80ff00"/><stop offset="0.840" stop-color="#00ff00"/><stop offset="0.840" stop-color="#00ff00"/><stop offset="0.860" stop-color="#00ffae"/><stop offset="0.870" stop-color="#00ffff"/><stop offset="0.873" stop-color="#00dfff"/><stop offset="0.901" stop-color="#0000ff"/><stop offset="0.927" stop-color="#6600ff"/><stop offset="0.953" stop-color="#7300ff"/><stop offset="1.000" stop-color="#7300ff"/></linearGradient><linearGradient id="a81" x1="0" y1="0" x2="0" y2="1"><stop offset="0.000" stop-color="#00ff95"/><stop offset="0.013" stop-color="#00fffe"/><stop offset="0.014" stop-color="#00ffff"/><stop offset="0.033" stop-color="#00d7ff"/><stop offset="0.047" stop-color="#00ffff"/><stop offset="0.073" stop-color="#00ffb3"/><stop offset="0.126" stop-color="#00ff00"/><stop offset="0.167" stop-color="#8cff00"/><stop offset="0.227" stop-color="#ffff00"/><stop offset="0.280" stop-color="#ff9800"/><stop offset="0.353" stop-color="#ff7e00"/><stop offset="0.460" stop-color="#fff800"/><stop offset="0.469" stop-color="#ffff00"/><stop offset="0.567" stop-color="#b3ff00"/><stop offset="0.807" stop-color="#80ff00"/><stop offset="0.840" stop-color="#00ff00"/><stop offset="0.840" stop-color="#00ff00"/><stop offset="0.860" stop-color="#00ffae"/><stop offset="0.870" stop-color="#00ffff"/><stop offset="0.873" stop-color="#00dfff"/><stop offset="0.901" stop-color="#0000ff"/><stop offset="0.927" stop-color="#6600ff"/><stop offset="0.953" stop-color="#7300ff"/><stop offset="1.000" stop-color="#7300ff"/></linearGradient><linearGradient id="a82" x1="0" y1="0" x2="0" y2="1"><stop offset="0.000" stop-color="#00ff71"/><stop offset="0.013" stop-color="#00ffda"/><stop offset="0.032" stop-color="#00ffff"/><stop offset="0.033" stop-color="#00fcff"/><stop offset="0.034" stop-color="#00ffff"/><stop offset="0.073" stop-color="#00ff99"/><stop offset="0.124" stop-color="#00ff00"/><stop offset="0.173" stop-color="#95ff00"/><stop offset="0.227" stop-color="#ffff00"/><stop offset="0.280" stop-color="#ff9400"/><stop offset="0.353" stop-color="#ff7900"/><stop offset="0.460" stop-color="#fff500"/><stop offset="0.473" stop-color="#ffff00"/><stop offset="0.567" stop-color="#b3ff00"/><stop offset="0.807" stop-color="#80ff00"/><stop offset="0.840" stop-color="#00ff00"/><stop offset="0.840" stop-color="#00ff00"/><stop offset="0.860" stop-color="#00ffae"/><stop offset="0.870" stop-color="#00ffff"/><stop offset="0.873" stop-color="#00dfff"/><stop offset="0.901" stop-color="#0000ff"/><stop offset="0.927" stop-color="#6600ff"/><stop offset="0.953" stop-color="#7300ff"/><stop offset="1.000" stop-color="#7300ff"/></linearGradient><linearGradient id="a83" x1="0" y1="0" x2="0" y2="1"><stop offset="0.000" stop-color="#00ff5f"/><stop offset="0.013" stop-color="#00ffc9"/><stop offset="0.033" stop-color="#00ffef"/><stop offset="0.073" stop-color="#00ff91"/><stop offset="0.125" stop-color="#00ff00"/><stop offset="0.180" stop-color="#9bff00"/><stop offset="0.230" stop-color="#ffff00"/><stop offset="0.280" stop-color="#ff9c00"/><stop offset="0.353" stop-color="#ff8100"/><stop offset="0.460" stop-color="#fff900"/><stop offset="0.468" stop-color="#ffff00"/><stop offset="0.567" stop-color="#b3ff00"/><stop offset="0.807" stop-color="#80ff00"/><stop offset="0.840" stop-color="#00ff00"/><stop offset="0.840" stop-color="#00ff00"/><stop offset="0.860" stop-color="#00ffae"/><stop offset="0.870" stop-color="#00ffff"/><stop offset="0.873" stop-color="#00dfff"/><stop offset="0.901" stop-color="#0000ff"/><stop offset="0.927" stop-color="#6600ff"/><stop offset="0.953" stop-color="#7300ff"/><stop offset="1.000" stop-color="#7300ff"/></linearGradient><linearGradient id="a84" x1="0" y1="0" x2="0" y2="1"><stop offset="0.000" stop-color="#00ffaa"/><stop offset="0.011" stop-color="#00ffff"/><stop offset="0.013" stop-color="#00e9ff"/><stop offset="0.033" stop-color="#00c5ff"/><stop offset="0.061" stop-color="#00ffff"/><stop offset="0.073" stop-color="#00ffe5"/><stop offset="0.132" stop-color="#00ff00"/><stop offset="0.160" stop-color="#6bff00"/><stop offset="0.230" stop-color="#ffff00"/><stop offset="0.280" stop-color="#ff9400"/><stop offset="0.353" stop-color="#ff7800"/><stop offset="0.460" stop-color="#fff400"/><stop offset="0.474" stop-color="#ffff00"/><stop offset="0.567" stop-color="#b4ff00"/><stop offset="0.807" stop-color="#80ff00"/><stop offset="0.840" stop-color="#00ff00"/><stop offset="0.840" stop-color="#00ff00"/><stop offset="0.860" stop-color="#00ffae"/><stop offset="0.870" stop-color="#00ffff"/><stop offset="0.873" stop-color="#00dfff"/><stop offset="0.901" stop-color="#0000ff"/><stop offset="0.927" stop-color="#6600ff"/><stop offset="0.953" stop-color="#7300ff"/><stop offset="1.000" stop-color="#7300ff"/></linearGradient><linearGradient id="a85" x1="0" y1="0" x2="0" y2="1"><stop offset="0.000" stop-color="#00ff97"/><stop offset="0.013" stop-color="#00ffff"/><stop offset="0.013" stop-color="#00fcff"/><stop offset="0.033" stop-color="#00d8ff"/><stop offset="0.062" stop-color="#00ffff"/><stop offset="0.067" stop-color="#00fff8"/><stop offset="0.134" stop-color="#00ff00"/><stop offset="0.160" stop-color="#5fff00"/><stop offset="0.237" stop-color="#ffff00"/><stop offset="0.280" stop-color="#ffa500"/><stop offset="0.353" stop-color="#ff8a00"/><stop offset="0.471" stop-color="#ffff00"/><stop offset="0.540" stop-color="#baff00"/><stop offset="0.807" stop-color="#80ff00"/><stop offset="0.840" stop-color="#00ff00"/><stop offset="0.840" stop-color="#00ff00"/><stop offset="0.860" stop-color="#00ffae"/><stop offset="0.870" stop-color="#00ffff"/><stop offset="0.873" stop-color="#00dfff"/><stop offset="0.901" stop-color="#0000ff"/><stop offset="0.927" stop-color="#6600ff"/><stop offset="0.953" stop-color="#7300ff"/><stop offset="1.000" stop-color="#7300ff"/></linearGradient><linearGradient id="a86" x1="0" y1="0" x2="0" y2="1"><stop offset="0.000" stop-color="#00ff80"/><stop offset="0.013" stop-color="#00ffed"/><stop offset="0.024" stop-color="#00ffff"/><stop offset="0.033" stop-color="#00efff"/><stop offset="0.048" stop-color="#00ffff"/><stop offset="0.067" stop-color="#00ffeb"/><stop offset="0.136" stop-color="#00ff00"/><stop offset="0.167" stop-color="#66ff00"/><stop offset="0.241" stop-color="#ffff00"/><stop offset="0.280" stop-color="#ffae00"/><stop offset="0.360" stop-color="#ff9600"/><stop offset="0.468" stop-color="#ffff00"/><stop offset="0.540" stop-color="#b9ff00"/><stop offset="0.807" stop-color="#80ff00"/><stop offset="0.840" stop-color="#00ff00"/><stop offset="0.840" stop-color="#00ff00"/><stop offset="0.860" stop-color="#00ffae"/><stop offset="0.870" stop-color="#00ffff"/><stop offset="0.873" stop-color="#00dfff"/><stop offset="0.901" stop-color="#0000ff"/><stop offset="0.927" stop-color="#6600ff"/><stop offset="0.953" stop-color="#7300ff"/><stop offset="1.000" stop-color="#7300ff"/></linearGradient><linearGradient id="a87" x1="0" y1="0" x2="0" y2="1"><stop offset="0.000" stop-color="#00ffb2"/><stop offset="0.009" stop-color="#00ffff"/><stop offset="0.013" stop-color="#00e0ff"/><stop offset="0.033" stop-color="#00bfff"/><stop offset="0.067" stop-color="#00d8ff"/><stop offset="0.076" stop-color="#00ffff"/><stop offset="0.140" stop-color="#00ff00"/><stop offset="0.160" stop-color="#52ff00"/><stop offset="0.240" stop-color="#ffff00"/><stop offset="0.280" stop-color="#ffa800"/><stop offset="0.353" stop-color="#ff8c00"/><stop offset="0.472" stop-color="#ffff00"/><stop offset="0.547" stop-color="#b7ff00"/><stop offset="0.807" stop-color="#80ff00"/><stop offset="0.840" stop-color="#00ff00"/><stop offset="0.840" stop-color="#00ff00"/><stop offset="0.860" stop-color="#00ffae"/><stop offset="0.870" stop-color="#00ffff"/><stop offset="0.873" stop-color="#00dfff"/><stop offset="0.901" stop-color="#0000ff"/><stop offset="0.927" stop-color="#6600ff"/><stop offset="0.953" stop-color="#7300ff"/><stop offset="1.000" stop-color="#7300ff"/></linearGradient><linearGradient id="a88" x1="0" y1="0" x2="0" y2="1"><stop offset="0.000" stop-color="#00ffcf"/><stop offset="0.006" stop-color="#00ffff"/><stop offset="0.013" stop-color="#00c2ff"/><stop offset="0.027" stop-color="#00a4ff"/><stop offset="0.067" stop-color="#00b1ff"/><stop offset="0.084" stop-color="#00ffff"/><stop offset="0.140" stop-color="#00ff0c"/><stop offset="0.143" stop-color="#00ff00"/><stop offset="0.160" stop-color="#46ff00"/><stop offset="0.244" stop-color="#ffff00"/><stop offset="0.273" stop-color="#ffbe00"/><stop offset="0.353" stop-color="#ff9d00"/><stop offset="0.463" stop-color="#ffff00"/><stop offset="0.547" stop-color="#b5ff00"/><stop offset="0.807" stop-color="#80ff00"/><stop offset="0.840" stop-color="#00ff00"/><stop offset="0.840" stop-color="#00ff00"/><stop offset="0.860" stop-color="#00ffae"/><stop offset="0.870" stop-color="#00ffff"/><stop offset="0.873" stop-color="#00dfff"/><stop offset="0.901" stop-color="#0000ff"/><stop offset="0.927" stop-color="#6600ff"/><stop offset="0.953" stop-color="#7300ff"/><stop offset="1.000" stop-color="#7300ff"/></linearGradient><linearGradient id="a89" x1="0" y1="0" x2="0" y2="1"><stop offset="0.000" stop-color="#00ff98"/><stop offset="0.012" stop-color="#00ffff"/><stop offset="0.013" stop-color="#00f7ff"/><stop offset="0.027" stop-color="#00daff"/><stop offset="0.067" stop-color="#00dcff"/><stop offset="0.076" stop-color="#00ffff"/><stop offset="0.145" stop-color="#00ff00"/><stop offset="0.147" stop-color="#06ff00"/><stop offset="0.200" stop-color="#93ff00"/><stop offset="0.258" stop-color="#ffff00"/><stop offset="0.280" stop-color="#ffd700"/><stop offset="0.367" stop-color="#ffc400"/><stop offset="0.443" stop-color="#ffff00"/><stop offset="0.547" stop-color="#afff00"/><stop offset="0.807" stop-color="#80ff00"/><stop offset="0.840" stop-color="#00ff00"/><stop offset="0.840" stop-color="#00ff00"/><stop offset="0.860" stop-color="#00ffae"/><stop offset="0.870" stop-color="#00ffff"/><stop offset="0.873" stop-color="#00dfff"/><stop offset="0.901" stop-color="#0000ff"/><stop offset="0.927" stop-color="#6600ff"/><stop offset="0.953" stop-color="#7300ff"/><stop offset="1.000" stop-color="#7300ff"/></linearGradient><linearGradient id="a90" x1="0" y1="0" x2="0" y2="1"><stop offset="0.000" stop-color="#00ffc5"/><stop offset="0.007" stop-color="#00ffff"/><stop offset="0.013" stop-color="#00caff"/><stop offset="0.027" stop-color="#00acff"/><stop offset="0.067" stop-color="#00a9ff"/><stop offset="0.087" stop-color="#00ffff"/><stop offset="0.147" stop-color="#00ff05"/><stop offset="0.148" stop-color="#00ff00"/><stop offset="0.187" stop-color="#66ff00"/><stop offset="0.270" stop-color="#ffff00"/><stop offset="0.280" stop-color="#ffed00"/><stop offset="0.367" stop-color="#ffdc00"/><stop offset="0.420" stop-color="#ffff00"/><stop offset="0.547" stop-color="#abff00"/><stop offset="0.807" stop-color="#80ff00"/><stop offset="0.840" stop-color="#00ff00"/><stop offset="0.840" stop-color="#00ff00"/><stop offset="0.860" stop-color="#00ffae"/><stop offset="0.870" stop-color="#00ffff"/><stop offset="0.873" stop-color="#00dfff"/><stop offset="0.901" stop-color="#0000ff"/><stop offset="0.927" stop-color="#6600ff"/><stop offset="0.953" stop-color="#7300ff"/><stop offset="1.000" stop-color="#7300ff"/></linearGradient><linearGradient id="a91" x1="0" y1="0" x2="0" y2="1"><stop offset="0.000" stop-color="#00ffb8"/><stop offset="0.008" stop-color="#00ffff"/><stop offset="0.013" stop-color="#00d7ff"/><stop offset="0.027" stop-color="#00b9ff"/><stop offset="0.067" stop-color="#00b5ff"/><stop offset="0.085" stop-color="#00ffff"/><stop offset="0.147" stop-color="#00ff09"/><stop offset="0.150" stop-color="#00ff00"/><stop offset="0.187" stop-color="#5eff00"/><stop offset="0.279" stop-color="#ffff00"/><stop offset="0.280" stop-color="#fffd00"/><stop offset="0.373" stop-color="#ffef00"/><stop offset="0.400" stop-color="#ffff00"/><stop offset="0.547" stop-color="#a8ff00"/><stop offset="0.800" stop-color="#83ff00"/><stop offset="0.820" stop-color="#4dff00"/><stop offset="0.837" stop-color="#00ff00"/><stop offset="0.847" stop-color="#00ff2d"/><stop offset="0.867" stop-color="#00fff2"/><stop offset="0.869" stop-color="#00ffff"/><stop offset="0.880" stop-color="#00b3ff"/><stop offset="0.901" stop-color="#0000ff"/><stop offset="0.907" stop-color="#1a00ff"/><stop offset="0.927" stop-color="#6600ff"/><stop offset="0.953" stop-color="#7300ff"/><stop offset="1.000" stop-color="#7300ff"/></linearGradient><linearGradient id="a92" x1="0" y1="0" x2="0" y2="1"><stop offset="0.000" stop-color="#00ff95"/><stop offset="0.013" stop-color="#00ffff"/><stop offset="0.013" stop-color="#00f9ff"/><stop offset="0.027" stop-color="#00dcff"/><stop offset="0.067" stop-color="#00d8ff"/><stop offset="0.078" stop-color="#00ffff"/><stop offset="0.147" stop-color="#00ff09"/><stop offset="0.150" stop-color="#00ff00"/><stop offset="0.187" stop-color="#5fff00"/><stop offset="0.278" stop-color="#ffff00"/><stop offset="0.280" stop-color="#fffc00"/><stop offset="0.373" stop-color="#ffef00"/><stop offset="0.401" stop-color="#ffff00"/><stop offset="0.547" stop-color="#a8ff00"/><stop offset="0.800" stop-color="#83ff00"/><stop offset="0.820" stop-color="#4dff00"/><stop offset="0.837" stop-color="#00ff00"/><stop offset="0.847" stop-color="#00ff2d"/><stop offset="0.867" stop-color="#00fff2"/><stop offset="0.869" stop-color="#00ffff"/><stop offset="0.880" stop-color="#00b3ff"/><stop offset="0.901" stop-color="#0000ff"/><stop offset="0.907" stop-color="#1a00ff"/><stop offset="0.927" stop-color="#6600ff"/><stop offset="0.953" stop-color="#7300ff"/><stop offset="1.000" stop-color="#7300ff"/></linearGradient><linearGradient id="a93" x1="0" y1="0" x2="0" y2="1"><stop offset="0.000" stop-color="#00ff97"/><stop offset="0.013" stop-color="#00ffff"/><stop offset="0.013" stop-color="#00f8ff"/><stop offset="0.027" stop-color="#00dbff"/><stop offset="0.067" stop-color="#00d7ff"/><stop offset="0.078" stop-color="#00ffff"/><stop offset="0.147" stop-color="#00ff07"/><stop offset="0.149" stop-color="#00ff00"/><stop offset="0.187" stop-color="#63ff00"/><stop offset="0.274" stop-color="#ffff00"/><stop offset="0.280" stop-color="#fff400"/><stop offset="0.373" stop-color="#ffe600"/><stop offset="0.412" stop-color="#ffff00"/><stop offset="0.547" stop-color="#a9ff00"/><stop offset="0.800" stop-color="#83ff00"/><stop offset="0.820" stop-color="#4dff00"/><stop offset="0.837" stop-color="#00ff00"/><stop offset="0.847" stop-color="#00ff2d"/><stop offset="0.867" stop-color="#00fff2"/><stop offset="0.869" stop-color="#00ffff"/><stop offset="0.880" stop-color="#00b3ff"/><stop offset="0.901" stop-color="#0000ff"/><stop offset="0.907" stop-color="#1a00ff"/><stop offset="0.927" stop-color="#6600ff"/><stop offset="0.953" stop-color="#7300ff"/><stop offset="1.000" stop-color="#7300ff"/></linearGradient><linearGradient id="a94" x1="0" y1="0" x2="0" y2="1"><stop offset="0.000" stop-color="#00ffd9"/><stop offset="0.005" stop-color="#00ffff"/><stop offset="0.013" stop-color="#00b6ff"/><stop offset="0.027" stop-color="#0099ff"/><stop offset="0.067" stop-color="#0096ff"/><stop offset="0.090" stop-color="#00ffff"/><stop offset="0.140" stop-color="#00ff24"/><stop offset="0.149" stop-color="#00ff00"/><stop offset="0.160" stop-color="#2eff00"/><stop offset="0.262" stop-color="#ffff00"/><stop offset="0.273" stop-color="#ffe900"/><stop offset="0.360" stop-color="#ffce00"/><stop offset="0.429" stop-color="#ffff00"/><stop offset="0.547" stop-color="#adff00"/><stop offset="0.807" stop-color="#80ff00"/><stop offset="0.840" stop-color="#00ff00"/><stop offset="0.840" stop-color="#00ff00"/><stop offset="0.860" stop-color="#00ffae"/><stop offset="0.870" stop-color="#00ffff"/><stop offset="0.873" stop-color="#00dfff"/><stop offset="0.901" stop-color="#0000ff"/><stop offset="0.927" stop-color="#6600ff"/><stop offset="0.953" stop-color="#7300ff"/><stop offset="1.000" stop-color="#7300ff"/></linearGradient><linearGradient id="a95" x1="0" y1="0" x2="0" y2="1"><stop offset="0.000" stop-color="#00ffe1"/><stop offset="0.004" stop-color="#00ffff"/><stop offset="0.013" stop-color="#00aeff"/><stop offset="0.027" stop-color="#0091ff"/><stop offset="0.067" stop-color="#0090ff"/><stop offset="0.091" stop-color="#00ffff"/><stop offset="0.140" stop-color="#00ff20"/><stop offset="0.147" stop-color="#00ff00"/><stop offset="0.160" stop-color="#35ff00"/><stop offset="0.254" stop-color="#ffff00"/><stop offset="0.273" stop-color="#ffd400"/><stop offset="0.353" stop-color="#ffb500"/><stop offset="0.447" stop-color="#ffff00"/><stop offset="0.547" stop-color="#b1ff00"/><stop offset="0.807" stop-color="#80ff00"/><stop offset="0.840" stop-color="#00ff00"/><stop offset="0.840" stop-color="#00ff00"/><stop offset="0.860" stop-color="#00ffae"/><stop offset="0.870" stop-color="#00ffff"/><stop offset="0.873" stop-color="#00dfff"/><stop offset="0.901" stop-color="#0000ff"/><stop offset="0.927" stop-color="#6600ff"/><stop offset="0.953" stop-color="#7300ff"/><stop offset="1.000" stop-color="#7300ff"/></linearGradient><linearGradient id="a96" x1="0" y1="0" x2="0" y2="1"><stop offset="0.000" stop-color="#00ffbc"/><stop offset="0.008" stop-color="#00ffff"/><stop offset="0.013" stop-color="#00d3ff"/><stop offset="0.027" stop-color="#00b6ff"/><stop offset="0.067" stop-color="#00b4ff"/><stop offset="0.085" stop-color="#00ffff"/><stop offset="0.146" stop-color="#00ff00"/><stop offset="0.147" stop-color="#03ff00"/><stop offset="0.187" stop-color="#74ff00"/><stop offset="0.256" stop-color="#ffff00"/><stop offset="0.280" stop-color="#ffd000"/><stop offset="0.360" stop-color="#ffba00"/><stop offset="0.447" stop-color="#ffff00"/><stop offset="0.547" stop-color="#b0ff00"/><stop offset="0.807" stop-color="#80ff00"/><stop offset="0.840" stop-color="#00ff00"/><stop offset="0.840" stop-color="#00ff00"/><stop offset="0.860" stop-color="#00ffae"/><stop offset="0.870" stop-color="#00ffff"/><stop offset="0.873" stop-color="#00dfff"/><stop offset="0.901" stop-color="#0000ff"/><stop offset="0.927" stop-color="#6600ff"/><stop offset="0.953" stop-color="#7300ff"/><stop offset="1.000" stop-color="#7300ff"/></linearGradient><linearGradient id="a97" x1="0" y1="0" x2="0" y2="1"><stop offset="0.000" stop-color="#00ffd0"/><stop offset="0.006" stop-color="#00ffff"/><stop offset="0.013" stop-color="#00bfff"/><stop offset="0.027" stop-color="#00a2ff"/><stop offset="0.067" stop-color="#009fff"/><stop offset="0.089" stop-color="#00ffff"/><stop offset="0.140" stop-color="#00ff27"/><stop offset="0.150" stop-color="#00ff00"/><stop offset="0.160" stop-color="#29ff00"/><stop offset="0.269" stop-color="#ffff00"/><stop offset="0.273" stop-color="#fff700"/><stop offset="0.367" stop-color="#ffe000"/><stop offset="0.414" stop-color="#ffff00"/><stop offset="0.547" stop-color="#aaff00"/><stop offset="0.800" stop-color="#83ff00"/><stop offset="0.820" stop-color="#4dff00"/><stop offset="0.837" stop-color="#00ff00"/><stop offset="0.847" stop-color="#00ff2d"/><stop offset="0.867" stop-color="#00fff2"/><stop offset="0.869" stop-color="#00ffff"/><stop offset="0.880" stop-color="#00b3ff"/><stop offset="0.901" stop-color="#0000ff"/><stop offset="0.907" stop-color="#1a00ff"/><stop offset="0.927" stop-color="#6600ff"/><stop offset="0.953" stop-color="#7300ff"/><stop offset="1.000" stop-color="#7300ff"/></linearGradient><linearGradient id="a98" x1="0" y1="0" x2="0" y2="1"><stop offset="0.000" stop-color="#00dfff"/><stop offset="0.013" stop-color="#0070ff"/><stop offset="0.027" stop-color="#0053ff"/><stop offset="0.067" stop-color="#004fff"/><stop offset="0.101" stop-color="#00ffff"/><stop offset="0.133" stop-color="#00ff5c"/><stop offset="0.150" stop-color="#00ff00"/><stop offset="0.153" stop-color="#16ff00"/><stop offset="0.273" stop-color="#f8ff00"/><stop offset="0.306" stop-color="#ffff00"/><stop offset="0.367" stop-color="#fff200"/><stop offset="0.391" stop-color="#ffff00"/><stop offset="0.547" stop-color="#a7ff00"/><stop offset="0.800" stop-color="#83ff00"/><stop offset="0.820" stop-color="#4dff00"/><stop offset="0.837" stop-color="#00ff00"/><stop offset="0.847" stop-color="#00ff2d"/><stop offset="0.867" stop-color="#00fff2"/><stop offset="0.869" stop-color="#00ffff"/><stop offset="0.880" stop-color="#00b3ff"/><stop offset="0.901" stop-color="#0000ff"/><stop offset="0.907" stop-color="#1a00ff"/><stop offset="0.927" stop-color="#6600ff"/><stop offset="0.953" stop-color="#7300ff"/><stop offset="1.000" stop-color="#7300ff"/></linearGradient><linearGradient id="a99" x1="0" y1="0" x2="0" y2="1"><stop offset="0.000" stop-color="#00ff91"/><stop offset="0.013" stop-color="#00ffff"/><stop offset="0.013" stop-color="#00feff"/><stop offset="0.027" stop-color="#00e0ff"/><stop offset="0.067" stop-color="#00dcff"/><stop offset="0.077" stop-color="#00ffff"/><stop offset="0.147" stop-color="#00ff0d"/><stop offset="0.152" stop-color="#00ff00"/><stop offset="0.187" stop-color="#59ff00"/><stop offset="0.280" stop-color="#f5ff00"/><stop offset="0.376" stop-color="#ffff00"/><stop offset="0.380" stop-color="#ffff00"/><stop offset="0.381" stop-color="#ffff00"/><stop offset="0.547" stop-color="#a6ff00"/><stop offset="0.793" stop-color="#86ff00"/><stop offset="0.813" stop-color="#66ff00"/><stop offset="0.837" stop-color="#00ff00"/><stop offset="0.847" stop-color="#00ff2d"/><stop offset="0.867" stop-color="#00fff2"/><stop offset="0.869" stop-color="#00ffff"/><stop offset="0.880" stop-color="#00b3ff"/><stop offset="0.901" stop-color="#0000ff"/><stop offset="0.907" stop-color="#1a00ff"/><stop offset="0.927" stop-color="#6600ff"/><stop offset="0.953" stop-color="#7300ff"/><stop offset="1.000" stop-color="#7300ff"/></linearGradient><linearGradient id="a100" x1="0" y1="0" x2="0" y2="1"><stop offset="0.000" stop-color="#00ffc9"/><stop offset="0.006" stop-color="#00ffff"/><stop offset="0.013" stop-color="#00c5ff"/><stop offset="0.027" stop-color="#00a8ff"/><stop offset="0.067" stop-color="#00a3ff"/><stop offset="0.089" stop-color="#00ffff"/><stop offset="0.147" stop-color="#00ff0e"/><stop offset="0.152" stop-color="#00ff00"/><stop offset="0.187" stop-color="#56ff00"/><stop offset="0.280" stop-color="#efff00"/><stop offset="0.380" stop-color="#f9ff00"/><stop offset="0.547" stop-color="#a4ff00"/><stop offset="0.793" stop-color="#86ff00"/><stop offset="0.813" stop-color="#66ff00"/><stop offset="0.837" stop-color="#00ff00"/><stop offset="0.847" stop-color="#00ff2d"/><stop offset="0.867" stop-color="#00fff2"/><stop offset="0.869" stop-color="#00ffff"/><stop offset="0.880" stop-color="#00b3ff"/><stop offset="0.901" stop-color="#0000ff"/><stop offset="0.907" stop-color="#1a00ff"/><stop offset="0.927" stop-color="#6600ff"/><stop offset="0.953" stop-color="#7300ff"/><stop offset="1.000" stop-color="#7300ff"/></linearGradient><linearGradient id="a101" x1="0" y1="0" x2="0" y2="1"><stop offset="0.000" stop-color="#00ffa9"/><stop offset="0.010" stop-color="#00ffff"/><stop offset="0.013" stop-color="#00e6ff"/><stop offset="0.027" stop-color="#00c8ff"/><stop offset="0.067" stop-color="#00c4ff"/><stop offset="0.082" stop-color="#00ffff"/><stop offset="0.147" stop-color="#00ff0c"/><stop offset="0.151" stop-color="#00ff00"/><stop offset="0.187" stop-color="#5aff00"/><stop offset="0.280" stop-color="#f8ff00"/><stop offset="0.347" stop-color="#ffff00"/><stop offset="0.380" stop-color="#fffc00"/><stop offset="0.386" stop-color="#ffff00"/><stop offset="0.547" stop-color="#a6ff00"/><stop offset="0.793" stop-color="#86ff00"/><stop offset="0.813" stop-color="#66ff00"/><stop offset="0.837" stop-color="#00ff00"/><stop offset="0.847" stop-color="#00ff2d"/><stop offset="0.867" stop-color="#00fff2"/><stop offset="0.869" stop-color="#00ffff"/><stop offset="0.880" stop-color="#00b3ff"/><stop offset="0.901" stop-color="#0000ff"/><stop offset="0.907" stop-color="#1a00ff"/><stop offset="0.927" stop-color="#6600ff"/><stop offset="0.953" stop-color="#7300ff"/><stop offset="1.000" stop-color="#7300ff"/></linearGradient><linearGradient id="a102" x1="0" y1="0" x2="0" y2="1"><stop offset="0.000" stop-color="#00fffe"/><stop offset="0.000" stop-color="#00ffff"/><stop offset="0.013" stop-color="#0090ff"/><stop offset="0.027" stop-color="#0073ff"/><stop offset="0.067" stop-color="#006fff"/><stop offset="0.097" stop-color="#00ffff"/><stop offset="0.140" stop-color="#00ff31"/><stop offset="0.152" stop-color="#00ff00"/><stop offset="0.160" stop-color="#22ff00"/><stop offset="0.273" stop-color="#f4ff00"/><stop offset="0.337" stop-color="#ffff00"/><stop offset="0.373" stop-color="#fff900"/><stop offset="0.385" stop-color="#ffff00"/><stop offset="0.547" stop-color="#a6ff00"/><stop offset="0.793" stop-color="#86ff00"/><stop offset="0.813" stop-color="#66ff00"/><stop offset="0.837" stop-color="#00ff00"/><stop offset="0.847" stop-color="#00ff2d"/><stop offset="0.867" stop-color="#00fff2"/><stop offset="0.869" stop-color="#00ffff"/><stop offset="0.880" stop-color="#00b3ff"/><stop offset="0.901" stop-color="#0000ff"/><stop offset="0.907" stop-color="#1a00ff"/><stop offset="0.927" stop-color="#6600ff"/><stop offset="0.953" stop-color="#7300ff"/><stop offset="1.000" stop-color="#7300ff"/></linearGradient><linearGradient id="a103" x1="0" y1="0" x2="0" y2="1"><stop offset="0.000" stop-color="#00ff91"/><stop offset="0.013" stop-color="#00ffff"/><stop offset="0.013" stop-color="#00feff"/><stop offset="0.027" stop-color="#00e0ff"/><stop offset="0.067" stop-color="#00dcff"/><stop offset="0.077" stop-color="#00ffff"/><stop offset="0.147" stop-color="#00ff10"/><stop offset="0.153" stop-color="#00ff00"/><stop offset="0.187" stop-color="#54ff00"/><stop offset="0.280" stop-color="#ebff00"/><stop offset="0.380" stop-color="#f5ff00"/><stop offset="0.547" stop-color="#a4ff00"/><stop offset="0.793" stop-color="#86ff00"/><stop offset="0.813" stop-color="#66ff00"/><stop offset="0.837" stop-color="#00ff00"/><stop offset="0.847" stop-color="#00ff2d"/><stop offset="0.867" stop-color="#00fff2"/><stop offset="0.869" stop-color="#00ffff"/><stop offset="0.880" stop-color="#00b3ff"/><stop offset="0.901" stop-color="#0000ff"/><stop offset="0.907" stop-color="#1a00ff"/><stop offset="0.927" stop-color="#6600ff"/><stop offset="0.953" stop-color="#7300ff"/><stop offset="1.000" stop-color="#7300ff"/></linearGradient><linearGradient id="a104" x1="0" y1="0" x2="0" y2="1"><stop offset="0.000" stop-color="#00ffe4"/><stop offset="0.003" stop-color="#00ffff"/><stop offset="0.013" stop-color="#00abff"/><stop offset="0.027" stop-color="#008dff"/><stop offset="0.067" stop-color="#0089ff"/><stop offset="0.093" stop-color="#00ffff"/><stop offset="0.140" stop-color="#00ff2e"/><stop offset="0.152" stop-color="#00ff00"/><stop offset="0.160" stop-color="#22ff00"/><stop offset="0.273" stop-color="#f4ff00"/><stop offset="0.333" stop-color="#ffff00"/><stop offset="0.373" stop-color="#fff800"/><stop offset="0.386" stop-color="#ffff00"/><stop offset="0.547" stop-color="#a6ff00"/><stop offset="0.793" stop-color="#86ff00"/><stop offset="0.813" stop-color="#66ff00"/><stop offset="0.837" stop-color="#00ff00"/><stop offset="0.847" stop-color="#00ff2d"/><stop offset="0.867" stop-color="#00fff2"/><stop offset="0.869" stop-color="#00ffff"/><stop offset="0.880" stop-color="#00b3ff"/><stop offset="0.901" stop-color="#0000ff"/><stop offset="0.907" stop-color="#1a00ff"/><stop offset="0.927" stop-color="#6600ff"/><stop offset="0.953" stop-color="#7300ff"/><stop offset="1.000" stop-color="#7300ff"/></linearGradient><linearGradient id="a105" x1="0" y1="0" x2="0" y2="1"><stop offset="0.000" stop-color="#00ffcf"/><stop offset="0.006" stop-color="#00ffff"/><stop offset="0.013" stop-color="#00c0ff"/><stop offset="0.027" stop-color="#00a2ff"/><stop offset="0.067" stop-color="#009eff"/><stop offset="0.090" stop-color="#00ffff"/><stop offset="0.147" stop-color="#00ff0e"/><stop offset="0.152" stop-color="#00ff00"/><stop offset="0.187" stop-color="#57ff00"/><stop offset="0.280" stop-color="#f1ff00"/><stop offset="0.380" stop-color="#fbff00"/><stop offset="0.547" stop-color="#a5ff00"/><stop offset="0.793" stop-color="#86ff00"/><stop offset="0.813" stop-color="#66ff00"/><stop offset="0.837" stop-color="#00ff00"/><stop offset="0.847" stop-color="#00ff2d"/><stop offset="0.867" stop-color="#00fff2"/><stop offset="0.869" stop-color="#00ffff"/><stop offset="0.880" stop-color="#00b3ff"/><stop offset="0.901" stop-color="#0000ff"/><stop offset="0.907" stop-color="#1a00ff"/><stop offset="0.927" stop-color="#6600ff"/><stop offset="0.953" stop-color="#7300ff"/><stop offset="1.000" stop-color="#7300ff"/></linearGradient><linearGradient id="a106" x1="0" y1="0" x2="0" y2="1"><stop offset="0.000" stop-color="#00f6ff"/><stop offset="0.013" stop-color="#0086ff"/><stop offset="0.027" stop-color="#0069ff"/><stop offset="0.067" stop-color="#0065ff"/><stop offset="0.098" stop-color="#00ffff"/><stop offset="0.133" stop-color="#00ff56"/><stop offset="0.149" stop-color="#00ff00"/><stop offset="0.153" stop-color="#17ff00"/><stop offset="0.273" stop-color="#fbff00"/><stop offset="0.292" stop-color="#ffff00"/><stop offset="0.367" stop-color="#ffee00"/><stop offset="0.396" stop-color="#ffff00"/><stop offset="0.547" stop-color="#a8ff00"/><stop offset="0.800" stop-color="#83ff00"/><stop offset="0.820" stop-color="#4dff00"/><stop offset="0.837" stop-color="#00ff00"/><stop offset="0.847" stop-color="#00ff2d"/><stop offset="0.867" stop-color="#00fff2"/><stop offset="0.869" stop-color="#00ffff"/><stop offset="0.880" stop-color="#00b3ff"/><stop offset="0.901" stop-color="#0000ff"/><stop offset="0.907" stop-color="#1a00ff"/><stop offset="0.927" stop-color="#6600ff"/><stop offset="0.953" stop-color="#7300ff"/><stop offset="1.000" stop-color="#7300ff"/></linearGradient><linearGradient id="a107" x1="0" y1="0" x2="0" y2="1"><stop offset="0.000" stop-color="#00ffd1"/><stop offset="0.005" stop-color="#00ffff"/><stop offset="0.013" stop-color="#00bdff"/><stop offset="0.027" stop-color="#00a0ff"/><stop offset="0.067" stop-color="#009cff"/><stop offset="0.090" stop-color="#00ffff"/><stop offset="0.147" stop-color="#00ff0c"/><stop offset="0.152" stop-color="#00ff00"/><stop offset="0.187" stop-color="#59ff00"/><stop offset="0.280" stop-color="#f7ff00"/><stop offset="0.363" stop-color="#ffff00"/><stop offset="0.380" stop-color="#fffd00"/><stop offset="0.383" stop-color="#ffff00"/><stop offset="0.547" stop-color="#a6ff00"/><stop offset="0.793" stop-color="#86ff00"/><stop offset="0.813" stop-color="#66ff00"/><stop offset="0.837" stop-color="#00ff00"/><stop offset="0.847" stop-color="#00ff2d"/><stop offset="0.867" stop-color="#00fff2"/><stop offset="0.869" stop-color="#00ffff"/><stop offset="0.880" stop-color="#00b3ff"/><stop offset="0.901" stop-color="#0000ff"/><stop offset="0.907" stop-color="#1a00ff"/><stop offset="0.927" stop-color="#6600ff"/><stop offset="0.953" stop-color="#7300ff"/><stop offset="1.000" stop-color="#7300ff"/></linearGradient><linearGradient id="a108" x1="0" y1="0" x2="0" y2="1"><stop offset="0.000" stop-color="#00ffd4"/><stop offset="0.005" stop-color="#00ffff"/><stop offset="0.013" stop-color="#00bbff"/><stop offset="0.027" stop-color="#009dff"/><stop offset="0.067" stop-color="#009aff"/><stop offset="0.090" stop-color="#00ffff"/><stop offset="0.140" stop-color="#00ff2a"/><stop offset="0.151" stop-color="#00ff00"/><stop offset="0.160" stop-color="#25ff00"/><stop offset="0.273" stop-color="#fdff00"/><stop offset="0.283" stop-color="#ffff00"/><stop offset="0.367" stop-color="#ffec00"/><stop offset="0.399" stop-color="#ffff00"/><stop offset="0.547" stop-color="#a8ff00"/><stop offset="0.800" stop-color="#83ff00"/><stop offset="0.820" stop-color="#4dff00"/><stop offset="0.837" stop-color="#00ff00"/><stop offset="0.847" stop-color="#00ff2d"/><stop offset="0.867" stop-color="#00fff2"/><stop offset="0.869" stop-color="#00ffff"/><stop offset="0.880" stop-color="#00b3ff"/><stop offset="0.901" stop-color="#0000ff"/><stop offset="0.907" stop-color="#1a00ff"/><stop offset="0.927" stop-color="#6600ff"/><stop offset="0.953" stop-color="#7300ff"/><stop offset="1.000" stop-color="#7300ff"/></linearGradient><linearGradient id="a109" x1="0" y1="0" x2="0" y2="1"><stop offset="0.000" stop-color="#00ffd2"/><stop offset="0.005" stop-color="#00ffff"/><stop offset="0.013" stop-color="#00bcff"/><stop offset="0.027" stop-color="#009fff"/><stop offset="0.067" stop-color="#009aff"/><stop offset="0.090" stop-color="#00ffff"/><stop offset="0.147" stop-color="#00ff0e"/><stop offset="0.152" stop-color="#00ff00"/><stop offset="0.187" stop-color="#57ff00"/><stop offset="0.280" stop-color="#f2ff00"/><stop offset="0.380" stop-color="#fcff00"/><stop offset="0.547" stop-color="#a5ff00"/><stop offset="0.793" stop-color="#86ff00"/><stop offset="0.813" stop-color="#66ff00"/><stop offset="0.837" stop-color="#00ff00"/><stop offset="0.847" stop-color="#00ff2d"/><stop offset="0.867" stop-color="#00fff2"/><stop offset="0.869" stop-color="#00ffff"/><stop offset="0.880" stop-color="#00b3ff"/><stop offset="0.901" stop-color="#0000ff"/><stop offset="0.907" stop-color="#1a00ff"/><stop offset="0.927" stop-color="#6600ff"/><stop offset="0.953" stop-color="#7300ff"/><stop offset="1.000" stop-color="#7300ff"/></linearGradient><linearGradient id="a110" x1="0" y1="0" x2="0" y2="1"><stop offset="0.000" stop-color="#00ffb6"/><stop offset="0.009" stop-color="#00ffff"/><stop offset="0.013" stop-color="#00d8ff"/><stop offset="0.027" stop-color="#00bbff"/><stop offset="0.067" stop-color="#00b6ff"/><stop offset="0.085" stop-color="#00ffff"/><stop offset="0.147" stop-color="#00ff0d"/><stop offset="0.152" stop-color="#00ff00"/><stop offset="0.187" stop-color="#58ff00"/><stop offset="0.280" stop-color="#f3ff00"/><stop offset="0.380" stop-color="#fdff00"/><stop offset="0.547" stop-color="#a5ff00"/><stop offset="0.793" stop-color="#86ff00"/><stop offset="0.813" stop-color="#66ff00"/><stop offset="0.837" stop-color="#00ff00"/><stop offset="0.847" stop-color="#00ff2d"/><stop offset="0.867" stop-color="#00fff2"/><stop offset="0.869" stop-color="#00ffff"/><stop offset="0.880" stop-color="#00b3ff"/><stop offset="0.901" stop-color="#0000ff"/><stop offset="0.907" stop-color="#1a00ff"/><stop offset="0.927" stop-color="#6600ff"/><stop offset="0.953" stop-color="#7300ff"/><stop offset="1.000" stop-color="#7300ff"/></linearGradient><linearGradient id="a111" x1="0" y1="0" x2="0" y2="1"><stop offset="0.000" stop-color="#00ffc7"/><stop offset="0.007" stop-color="#00ffff"/><stop offset="0.013" stop-color="#00c7ff"/><stop offset="0.027" stop-color="#00aaff"/><stop offset="0.067" stop-color="#00a6ff"/><stop offset="0.088" stop-color="#00ffff"/><stop offset="0.147" stop-color="#00ff0c"/><stop offset="0.151" stop-color="#00ff00"/><stop offset="0.187" stop-color="#5aff00"/><stop offset="0.280" stop-color="#f8ff00"/><stop offset="0.353" stop-color="#ffff00"/><stop offset="0.380" stop-color="#fffc00"/><stop offset="0.385" stop-color="#ffff00"/><stop offset="0.547" stop-color="#a6ff00"/><stop offset="0.793" stop-color="#86ff00"/><stop offset="0.813" stop-color="#66ff00"/><stop offset="0.837" stop-color="#00ff00"/><stop offset="0.847" stop-color="#00ff2d"/><stop offset="0.867" stop-color="#00fff2"/><stop offset="0.869" stop-color="#00ffff"/><stop offset="0.880" stop-color="#00b3ff"/><stop offset="0.901" stop-color="#0000ff"/><stop offset="0.907" stop-color="#1a00ff"/><stop offset="0.927" stop-color="#6600ff"/><stop offset="0.953" stop-color="#7300ff"/><stop offset="1.000" stop-color="#7300ff"/></linearGradient><linearGradient id="a112" x1="0" y1="0" x2="0" y2="1"><stop offset="0.000" stop-color="#00ff9e"/><stop offset="0.012" stop-color="#00ffff"/><stop offset="0.013" stop-color="#00f0ff"/><stop offset="0.027" stop-color="#00d3ff"/><stop offset="0.067" stop-color="#00cfff"/><stop offset="0.080" stop-color="#00ffff"/><stop offset="0.147" stop-color="#00ff0b"/><stop offset="0.151" stop-color="#00ff00"/><stop offset="0.187" stop-color="#5cff00"/><stop offset="0.280" stop-color="#fdff00"/><stop offset="0.294" stop-color="#ffff00"/><stop offset="0.373" stop-color="#fff400"/><stop offset="0.393" stop-color="#ffff00"/><stop offset="0.547" stop-color="#a7ff00"/><stop offset="0.800" stop-color="#83ff00"/><stop offset="0.820" stop-color="#4dff00"/><stop offset="0.837" stop-color="#00ff00"/><stop offset="0.847" stop-color="#00ff2d"/><stop offset="0.867" stop-color="#00fff2"/><stop offset="0.869" stop-color="#00ffff"/><stop offset="0.880" stop-color="#00b3ff"/><stop offset="0.901" stop-color="#0000ff"/><stop offset="0.907" stop-color="#1a00ff"/><stop offset="0.927" stop-color="#6600ff"/><stop offset="0.953" stop-color="#7300ff"/><stop offset="1.000" stop-color="#7300ff"/></linearGradient><linearGradient id="a113" x1="0" y1="0" x2="0" y2="1"><stop offset="0.000" stop-color="#00ffdf"/><stop offset="0.004" stop-color="#00ffff"/><stop offset="0.013" stop-color="#00b0ff"/><stop offset="0.027" stop-color="#0092ff"/><stop offset="0.067" stop-color="#008eff"/><stop offset="0.092" stop-color="#00ffff"/><stop offset="0.140" stop-color="#00ff2e"/><stop offset="0.151" stop-color="#00ff00"/><stop offset="0.160" stop-color="#22ff00"/><stop offset="0.273" stop-color="#f5ff00"/><stop offset="0.330" stop-color="#ffff00"/><stop offset="0.373" stop-color="#fff700"/><stop offset="0.387" stop-color="#ffff00"/><stop offset="0.547" stop-color="#a6ff00"/><stop offset="0.793" stop-color="#86ff00"/><stop offset="0.813" stop-color="#66ff00"/><stop offset="0.837" stop-color="#00ff00"/><stop offset="0.847" stop-color="#00ff2d"/><stop offset="0.867" stop-color="#00fff2"/><stop offset="0.869" stop-color="#00ffff"/><stop offset="0.880" stop-color="#00b3ff"/><stop offset="0.901" stop-color="#0000ff"/><stop offset="0.907" stop-color="#1a00ff"/><stop offset="0.927" stop-color="#6600ff"/><stop offset="0.953" stop-color="#7300ff"/><stop offset="1.000" stop-color="#7300ff"/></linearGradient><linearGradient id="a114" x1="0" y1="0" x2="0" y2="1"><stop offset="0.000" stop-color="#00fff6"/><stop offset="0.001" stop-color="#00ffff"/><stop offset="0.013" stop-color="#0098ff"/><stop offset="0.027" stop-color="#007bff"/><stop offset="0.067" stop-color="#0076ff"/><stop offset="0.096" stop-color="#00ffff"/><stop offset="0.140" stop-color="#00ff33"/><stop offset="0.153" stop-color="#00ff00"/><stop offset="0.160" stop-color="#1eff00"/><stop offset="0.280" stop-color="#edff00"/><stop offset="0.380" stop-color="#f7ff00"/><stop offset="0.547" stop-color="#a4ff00"/><stop offset="0.793" stop-color="#86ff00"/><stop offset="0.813" stop-color="#66ff00"/><stop offset="0.837" stop-color="#00ff00"/><stop offset="0.847" stop-color="#00ff2d"/><stop offset="0.867" stop-color="#00fff2"/><stop offset="0.869" stop-color="#00ffff"/><stop offset="0.880" stop-color="#00b3ff"/><stop offset="0.901" stop-color="#0000ff"/><stop offset="0.907" stop-color="#1a00ff"/><stop offset="0.927" stop-color="#6600ff"/><stop offset="0.953" stop-color="#7300ff"/><stop offset="1.000" stop-color="#7300ff"/></linearGradient><linearGradient id="a115" x1="0" y1="0" x2="0" y2="1"><stop offset="0.000" stop-color="#00ffcb"/><stop offset="0.006" stop-color="#00ffff"/><stop offset="0.013" stop-color="#00c4ff"/><stop offset="0.027" stop-color="#00a6ff"/><stop offset="0.067" stop-color="#00a2ff"/><stop offset="0.089" stop-color="#00ffff"/><stop offset="0.147" stop-color="#00ff0c"/><stop offset="0.152" stop-color="#00ff00"/><stop offset="0.187" stop-color="#59ff00"/><stop offset="0.280" stop-color="#f7ff00"/><stop offset="0.361" stop-color="#ffff00"/><stop offset="0.380" stop-color="#fffd00"/><stop offset="0.384" stop-color="#ffff00"/><stop offset="0.547" stop-color="#a6ff00"/><stop offset="0.793" stop-color="#86ff00"/><stop offset="0.813" stop-color="#66ff00"/><stop offset="0.837" stop-color="#00ff00"/><stop offset="0.847" stop-color="#00ff2d"/><stop offset="0.867" stop-color="#00fff2"/><stop offset="0.869" stop-color="#00ffff"/><stop offset="0.880" stop-color="#00b3ff"/><stop offset="0.901" stop-color="#0000ff"/><stop offset="0.907" stop-color="#1a00ff"/><stop offset="0.927" stop-color="#6600ff"/><stop offset="0.953" stop-color="#7300ff"/><stop offset="1.000" stop-color="#7300ff"/></linearGradient><linearGradient id="a116" x1="0" y1="0" x2="0" y2="1"><stop offset="0.000" stop-color="#00ffae"/><stop offset="0.010" stop-color="#00ffff"/><stop offset="0.013" stop-color="#00e1ff"/><stop offset="0.027" stop-color="#00c3ff"/><stop offset="0.067" stop-color="#00bfff"/><stop offset="0.083" stop-color="#00ffff"/><stop offset="0.147" stop-color="#00ff0d"/><stop offset="0.152" stop-color="#00ff00"/><stop offset="0.187" stop-color="#59ff00"/><stop offset="0.280" stop-color="#f6ff00"/><stop offset="0.372" stop-color="#ffff00"/><stop offset="0.380" stop-color="#fffe00"/><stop offset="0.381" stop-color="#ffff00"/><stop offset="0.547" stop-color="#a6ff00"/><stop offset="0.793" stop-color="#86ff00"/><stop offset="0.813" stop-color="#66ff00"/><stop offset="0.837" stop-color="#00ff00"/><stop offset="0.847" stop-color="#00ff2d"/><stop offset="0.867" stop-color="#00fff2"/><stop offset="0.869" stop-color="#00ffff"/><stop offset="0.880" stop-color="#00b3ff"/><stop offset="0.901" stop-color="#0000ff"/><stop offset="0.907" stop-color="#1a00ff"/><stop offset="0.927" stop-color="#6600ff"/><stop offset="0.953" stop-color="#7300ff"/><stop offset="1.000" stop-color="#7300ff"/></linearGradient><linearGradient id="a117" x1="0" y1="0" x2="0" y2="1"><stop offset="0.000" stop-color="#00ff8f"/><stop offset="0.013" stop-color="#00fff4"/><stop offset="0.019" stop-color="#00ffff"/><stop offset="0.027" stop-color="#00eeff"/><stop offset="0.067" stop-color="#00ebff"/><stop offset="0.072" stop-color="#00ffff"/><stop offset="0.149" stop-color="#00ff00"/><stop offset="0.160" stop-color="#26ff00"/><stop offset="0.280" stop-color="#fbff00"/><stop offset="0.305" stop-color="#ffff00"/><stop offset="0.373" stop-color="#fff500"/><stop offset="0.391" stop-color="#ffff00"/><stop offset="0.547" stop-color="#a7ff00"/><stop offset="0.793" stop-color="#86ff00"/><stop offset="0.813" stop-color="#66ff00"/><stop offset="0.837" stop-color="#00ff00"/><stop offset="0.847" stop-color="#00ff2d"/><stop offset="0.867" stop-color="#00fff2"/><stop offset="0.869" stop-color="#00ffff"/><stop offset="0.880" stop-color="#00b3ff"/><stop offset="0.901" stop-color="#0000ff"/><stop offset="0.907" stop-color="#1a00ff"/><stop offset="0.927" stop-color="#6600ff"/><stop offset="0.953" stop-color="#7300ff"/><stop offset="1.000" stop-color="#7300ff"/></linearGradient><linearGradient id="a118" x1="0" y1="0" x2="0" y2="1"><stop offset="0.000" stop-color="#00ff9e"/><stop offset="0.017" stop-color="#00ffff"/><stop offset="0.020" stop-color="#00f0ff"/><stop offset="0.067" stop-color="#00edff"/><stop offset="0.072" stop-color="#00ffff"/><stop offset="0.147" stop-color="#00ff00"/><stop offset="0.160" stop-color="#2dff00"/><stop offset="0.277" stop-color="#ffff00"/><stop offset="0.280" stop-color="#fffa00"/><stop offset="0.373" stop-color="#ffec00"/><stop offset="0.405" stop-color="#ffff00"/><stop offset="0.547" stop-color="#a8ff00"/><stop offset="0.800" stop-color="#83ff00"/><stop offset="0.820" stop-color="#4dff00"/><stop offset="0.837" stop-color="#00ff00"/><stop offset="0.847" stop-color="#00ff2d"/><stop offset="0.867" stop-color="#00fff2"/><stop offset="0.869" stop-color="#00ffff"/><stop offset="0.880" stop-color="#00b3ff"/><stop offset="0.901" stop-color="#0000ff"/><stop offset="0.907" stop-color="#1a00ff"/><stop offset="0.927" stop-color="#6600ff"/><stop offset="0.953" stop-color="#7300ff"/><stop offset="1.000" stop-color="#7300ff"/></linearGradient><linearGradient id="a119" x1="0" y1="0" x2="0" y2="1"><stop offset="0.000" stop-color="#00f1ff"/><stop offset="0.020" stop-color="#0091ff"/><stop offset="0.067" stop-color="#0090ff"/><stop offset="0.087" stop-color="#00d7ff"/><stop offset="0.095" stop-color="#00ffff"/><stop offset="0.145" stop-color="#00ff00"/><stop offset="0.153" stop-color="#2dff00"/><stop offset="0.261" stop-color="#ffff00"/><stop offset="0.280" stop-color="#ffda00"/><stop offset="0.367" stop-color="#ffc700"/><stop offset="0.440" stop-color="#ffff00"/><stop offset="0.547" stop-color="#aeff00"/><stop offset="0.807" stop-color="#80ff00"/><stop offset="0.840" stop-color="#00ff00"/><stop offset="0.840" stop-color="#00ff00"/><stop offset="0.860" stop-color="#00ffae"/><stop offset="0.870" stop-color="#00ffff"/><stop offset="0.873" stop-color="#00dfff"/><stop offset="0.901" stop-color="#0000ff"/><stop offset="0.927" stop-color="#6600ff"/><stop offset="0.953" stop-color="#7300ff"/><stop offset="1.000" stop-color="#7300ff"/></linearGradient><linearGradient id="a120" x1="0" y1="0" x2="0" y2="1"><stop offset="0.000" stop-color="#00ffaa"/><stop offset="0.020" stop-color="#00fffa"/><stop offset="0.067" stop-color="#00fffb"/><stop offset="0.120" stop-color="#00ff49"/><stop offset="0.142" stop-color="#00ff00"/><stop offset="0.160" stop-color="#3dff00"/><stop offset="0.264" stop-color="#ffff00"/><stop offset="0.280" stop-color="#ffe200"/><stop offset="0.367" stop-color="#ffd000"/><stop offset="0.432" stop-color="#ffff00"/><stop offset="0.547" stop-color="#adff00"/><stop offset="0.807" stop-color="#80ff00"/><stop offset="0.840" stop-color="#00ff00"/><stop offset="0.840" stop-color="#00ff00"/><stop offset="0.860" stop-color="#00ffae"/><stop offset="0.870" stop-color="#00ffff"/><stop offset="0.873" stop-color="#00dfff"/><stop offset="0.901" stop-color="#0000ff"/><stop offset="0.927" stop-color="#6600ff"/><stop offset="0.953" stop-color="#7300ff"/><stop offset="1.000" stop-color="#7300ff"/></linearGradient><linearGradient id="a121" x1="0" y1="0" x2="0" y2="1"><stop offset="0.000" stop-color="#00ff76"/><stop offset="0.033" stop-color="#00ffc8"/><stop offset="0.080" stop-color="#00ff9f"/><stop offset="0.135" stop-color="#00ff00"/><stop offset="0.153" stop-color="#34ff00"/><stop offset="0.262" stop-color="#ffff00"/><stop offset="0.280" stop-color="#ffdd00"/><stop offset="0.367" stop-color="#ffca00"/><stop offset="0.438" stop-color="#ffff00"/><stop offset="0.547" stop-color="#aeff00"/><stop offset="0.807" stop-color="#80ff00"/><stop offset="0.840" stop-color="#00ff00"/><stop offset="0.840" stop-color="#00ff00"/><stop offset="0.860" stop-color="#00ffae"/><stop offset="0.870" stop-color="#00ffff"/><stop offset="0.873" stop-color="#00dfff"/><stop offset="0.901" stop-color="#0000ff"/><stop offset="0.927" stop-color="#6600ff"/><stop offset="0.953" stop-color="#7300ff"/><stop offset="1.000" stop-color="#7300ff"/></linearGradient><linearGradient id="a122" x1="0" y1="0" x2="0" y2="1"><stop offset="0.000" stop-color="#00ffb0"/><stop offset="0.033" stop-color="#00fff6"/><stop offset="0.080" stop-color="#00ffce"/><stop offset="0.133" stop-color="#00ff00"/><stop offset="0.140" stop-color="#1cff00"/><stop offset="0.253" stop-color="#ffff00"/><stop offset="0.280" stop-color="#ffca00"/><stop offset="0.360" stop-color="#ffb300"/><stop offset="0.452" stop-color="#ffff00"/><stop offset="0.547" stop-color="#b1ff00"/><stop offset="0.807" stop-color="#80ff00"/><stop offset="0.840" stop-color="#00ff00"/><stop offset="0.840" stop-color="#00ff00"/><stop offset="0.860" stop-color="#00ffae"/><stop offset="0.870" stop-color="#00ffff"/><stop offset="0.873" stop-color="#00dfff"/><stop offset="0.901" stop-color="#0000ff"/><stop offset="0.927" stop-color="#6600ff"/><stop offset="0.953" stop-color="#7300ff"/><stop offset="1.000" stop-color="#7300ff"/></linearGradient><linearGradient id="a123" x1="0" y1="0" x2="0" y2="1"><stop offset="0.000" stop-color="#00ffc7"/><stop offset="0.040" stop-color="#00fffe"/><stop offset="0.080" stop-color="#00ffdd"/><stop offset="0.132" stop-color="#00ff00"/><stop offset="0.140" stop-color="#22ff00"/><stop offset="0.253" stop-color="#ffff00"/><stop offset="0.280" stop-color="#ffcb00"/><stop offset="0.360" stop-color="#ffb400"/><stop offset="0.452" stop-color="#ffff00"/><stop offset="0.547" stop-color="#b1ff00"/><stop offset="0.807" stop-color="#80ff00"/><stop offset="0.840" stop-color="#00ff00"/><stop offset="0.840" stop-color="#00ff00"/><stop offset="0.860" stop-color="#00ffae"/><stop offset="0.870" stop-color="#00ffff"/><stop offset="0.873" stop-color="#00dfff"/><stop offset="0.901" stop-color="#0000ff"/><stop offset="0.927" stop-color="#6600ff"/><stop offset="0.953" stop-color="#7300ff"/><stop offset="1.000" stop-color="#7300ff"/></linearGradient><linearGradient id="a124" x1="0" y1="0" x2="0" y2="1"><stop offset="0.000" stop-color="#00ffa2"/><stop offset="0.040" stop-color="#00ffd9"/><stop offset="0.080" stop-color="#00ffb8"/><stop offset="0.130" stop-color="#00ff00"/><stop offset="0.140" stop-color="#26ff00"/><stop offset="0.252" stop-color="#ffff00"/><stop offset="0.280" stop-color="#ffc800"/><stop offset="0.360" stop-color="#ffb100"/><stop offset="0.454" stop-color="#ffff00"/><stop offset="0.547" stop-color="#b2ff00"/><stop offset="0.807" stop-color="#80ff00"/><stop offset="0.840" stop-color="#00ff00"/><stop offset="0.840" stop-color="#00ff00"/><stop offset="0.860" stop-color="#00ffae"/><stop offset="0.870" stop-color="#00ffff"/><stop offset="0.873" stop-color="#00dfff"/><stop offset="0.901" stop-color="#0000ff"/><stop offset="0.927" stop-color="#6600ff"/><stop offset="0.953" stop-color="#7300ff"/><stop offset="1.000" stop-color="#7300ff"/></linearGradient><linearGradient id="a125" x1="0" y1="0" x2="0" y2="1"><stop offset="0.000" stop-color="#00ffc6"/><stop offset="0.040" stop-color="#00fffd"/><stop offset="0.080" stop-color="#00ffdb"/><stop offset="0.131" stop-color="#00ff00"/><stop offset="0.140" stop-color="#26ff00"/><stop offset="0.247" stop-color="#ffff00"/><stop offset="0.280" stop-color="#ffbb00"/><stop offset="0.360" stop-color="#ffa300"/><stop offset="0.463" stop-color="#ffff00"/><stop offset="0.547" stop-color="#b4ff00"/><stop offset="0.807" stop-color="#80ff00"/><stop offset="0.840" stop-color="#00ff00"/><stop offset="0.840" stop-color="#00ff00"/><stop offset="0.860" stop-color="#00ffae"/><stop offset="0.870" stop-color="#00ffff"/><stop offset="0.873" stop-color="#00dfff"/><stop offset="0.901" stop-color="#0000ff"/><stop offset="0.927" stop-color="#6600ff"/><stop offset="0.953" stop-color="#7300ff"/><stop offset="1.000" stop-color="#7300ff"/></linearGradient><linearGradient id="a126" x1="0" y1="0" x2="0" y2="1"><stop offset="0.000" stop-color="#00ff93"/><stop offset="0.040" stop-color="#00ffca"/><stop offset="0.087" stop-color="#00ff92"/><stop offset="0.128" stop-color="#00ff00"/><stop offset="0.140" stop-color="#2bff00"/><stop offset="0.246" stop-color="#ffff00"/><stop offset="0.280" stop-color="#ffba00"/><stop offset="0.360" stop-color="#ffa100"/><stop offset="0.464" stop-color="#ffff00"/><stop offset="0.547" stop-color="#b4ff00"/><stop offset="0.807" stop-color="#80ff00"/><stop offset="0.840" stop-color="#00ff00"/><stop offset="0.840" stop-color="#00ff00"/><stop offset="0.860" stop-color="#00ffae"/><stop offset="0.870" stop-color="#00ffff"/><stop offset="0.873" stop-color="#00dfff"/><stop offset="0.901" stop-color="#0000ff"/><stop offset="0.927" stop-color="#6600ff"/><stop offset="0.953" stop-color="#7300ff"/><stop offset="1.000" stop-color="#7300ff"/></linearGradient><linearGradient id="a127" x1="0" y1="0" x2="0" y2="1"><stop offset="0.000" stop-color="#00ffb0"/><stop offset="0.040" stop-color="#00ffe7"/><stop offset="0.080" stop-color="#00ffc5"/><stop offset="0.130" stop-color="#00ff00"/><stop offset="0.140" stop-color="#28ff00"/><stop offset="0.246" stop-color="#ffff00"/><stop offset="0.280" stop-color="#ffbb00"/><stop offset="0.360" stop-color="#ffa300"/><stop offset="0.463" stop-color="#ffff00"/><stop offset="0.547" stop-color="#b4ff00"/><stop offset="0.807" stop-color="#80ff00"/><stop offset="0.840" stop-color="#00ff00"/><stop offset="0.840" stop-color="#00ff00"/><stop offset="0.860" stop-color="#00ffae"/><stop offset="0.870" stop-color="#00ffff"/><stop offset="0.873" stop-color="#00dfff"/><stop offset="0.901" stop-color="#0000ff"/><stop offset="0.927" stop-color="#6600ff"/><stop offset="0.953" stop-color="#7300ff"/><stop offset="1.000" stop-color="#7300ff"/></linearGradient><linearGradient id="a128" x1="0" y1="0" x2="0" y2="1"><stop offset="0.000" stop-color="#00ff71"/><stop offset="0.040" stop-color="#00ffa8"/><stop offset="0.087" stop-color="#00ff73"/><stop offset="0.124" stop-color="#00ff00"/><stop offset="0.140" stop-color="#30ff00"/><stop offset="0.243" stop-color="#ffff00"/><stop offset="0.280" stop-color="#ffb500"/><stop offset="0.360" stop-color="#ff9c00"/><stop offset="0.465" stop-color="#ffff00"/><stop offset="0.540" stop-color="#b8ff00"/><stop offset="0.807" stop-color="#80ff00"/><stop offset="0.840" stop-color="#00ff00"/><stop offset="0.840" stop-color="#00ff00"/><stop offset="0.860" stop-color="#00ffae"/><stop offset="0.870" stop-color="#00ffff"/><stop offset="0.873" stop-color="#00dfff"/><stop offset="0.901" stop-color="#0000ff"/><stop offset="0.927" stop-color="#6600ff"/><stop offset="0.953" stop-color="#7300ff"/><stop offset="1.000" stop-color="#7300ff"/></linearGradient><linearGradient id="a129" x1="0" y1="0" x2="0" y2="1"><stop offset="0.000" stop-color="#00ff99"/><stop offset="0.040" stop-color="#00ffd0"/><stop offset="0.087" stop-color="#00ff98"/><stop offset="0.128" stop-color="#00ff00"/><stop offset="0.140" stop-color="#2aff00"/><stop offset="0.247" stop-color="#ffff00"/><stop offset="0.280" stop-color="#ffbd00"/><stop offset="0.360" stop-color="#ffa500"/><stop offset="0.462" stop-color="#ffff00"/><stop offset="0.547" stop-color="#b4ff00"/><stop offset="0.807" stop-color="#80ff00"/><stop offset="0.840" stop-color="#00ff00"/><stop offset="0.840" stop-color="#00ff00"/><stop offset="0.860" stop-color="#00ffae"/><stop offset="0.870" stop-color="#00ffff"/><stop offset="0.873" stop-color="#00dfff"/><stop offset="0.901" stop-color="#0000ff"/><stop offset="0.927" stop-color="#6600ff"/><stop offset="0.953" stop-color="#7300ff"/><stop offset="1.000" stop-color="#7300ff"/></linearGradient><linearGradient id="a130" x1="0" y1="0" x2="0" y2="1"><stop offset="0.000" stop-color="#00ffd0"/><stop offset="0.034" stop-color="#00ffff"/><stop offset="0.040" stop-color="#00f7ff"/><stop offset="0.050" stop-color="#00ffff"/><stop offset="0.080" stop-color="#00ffe6"/><stop offset="0.132" stop-color="#00ff00"/><stop offset="0.140" stop-color="#22ff00"/><stop offset="0.252" stop-color="#ffff00"/><stop offset="0.280" stop-color="#ffc700"/><stop offset="0.360" stop-color="#ffb000"/><stop offset="0.454" stop-color="#ffff00"/><stop offset="0.547" stop-color="#b2ff00"/><stop offset="0.807" stop-color="#80ff00"/><stop offset="0.840" stop-color="#00ff00"/><stop offset="0.840" stop-color="#00ff00"/><stop offset="0.860" stop-color="#00ffae"/><stop offset="0.870" stop-color="#00ffff"/><stop offset="0.873" stop-color="#00dfff"/><stop offset="0.901" stop-color="#0000ff"/><stop offset="0.927" stop-color="#6600ff"/><stop offset="0.953" stop-color="#7300ff"/><stop offset="1.000" stop-color="#7300ff"/></linearGradient><linearGradient id="a131" x1="0" y1="0" x2="0" y2="1"><stop offset="0.000" stop-color="#00ff94"/><stop offset="0.040" stop-color="#00ffcb"/><stop offset="0.087" stop-color="#00ff94"/><stop offset="0.129" stop-color="#00ff00"/><stop offset="0.140" stop-color="#28ff00"/><stop offset="0.250" stop-color="#ffff00"/><stop offset="0.280" stop-color="#ffc500"/><stop offset="0.360" stop-color="#ffae00"/><stop offset="0.456" stop-color="#ffff00"/><stop offset="0.547" stop-color="#b2ff00"/><stop offset="0.807" stop-color="#80ff00"/><stop offset="0.840" stop-color="#00ff00"/><stop offset="0.840" stop-color="#00ff00"/><stop offset="0.860" stop-color="#00ffae"/><stop offset="0.870" stop-color="#00ffff"/><stop offset="0.873" stop-color="#00dfff"/><stop offset="0.901" stop-color="#0000ff"/><stop offset="0.927" stop-color="#6600ff"/><stop offset="0.953" stop-color="#7300ff"/><stop offset="1.000" stop-color="#7300ff"/></linearGradient><linearGradient id="a132" x1="0" y1="0" x2="0" y2="1"><stop offset="0.000" stop-color="#00ff86"/><stop offset="0.040" stop-color="#00ffbd"/><stop offset="0.087" stop-color="#00ff87"/><stop offset="0.128" stop-color="#00ff00"/><stop offset="0.140" stop-color="#29ff00"/><stop offset="0.251" stop-color="#ffff00"/><stop offset="0.280" stop-color="#ffc700"/><stop offset="0.360" stop-color="#ffb000"/><stop offset="0.454" stop-color="#ffff00"/><stop offset="0.547" stop-color="#b2ff00"/><stop offset="0.807" stop-color="#80ff00"/><stop offset="0.840" stop-color="#00ff00"/><stop offset="0.840" stop-color="#00ff00"/><stop offset="0.860" stop-color="#00ffae"/><stop offset="0.870" stop-color="#00ffff"/><stop offset="0.873" stop-color="#00dfff"/><stop offset="0.901" stop-color="#0000ff"/><stop offset="0.927" stop-color="#6600ff"/><stop offset="0.953" stop-color="#7300ff"/><stop offset="1.000" stop-color="#7300ff"/></linearGradient><linearGradient id="a133" x1="0" y1="0" x2="0" y2="1"><stop offset="0.000" stop-color="#00ffc9"/><stop offset="0.040" stop-color="#00ffff"/><stop offset="0.040" stop-color="#00feff"/><stop offset="0.041" stop-color="#00ffff"/><stop offset="0.080" stop-color="#00ffdf"/><stop offset="0.132" stop-color="#00ff00"/><stop offset="0.140" stop-color="#24ff00"/><stop offset="0.249" stop-color="#ffff00"/><stop offset="0.280" stop-color="#ffc000"/><stop offset="0.360" stop-color="#ffa800"/><stop offset="0.460" stop-color="#ffff00"/><stop offset="0.547" stop-color="#b3ff00"/><stop offset="0.807" stop-color="#80ff00"/><stop offset="0.840" stop-color="#00ff00"/><stop offset="0.840" stop-color="#00ff00"/><stop offset="0.860" stop-color="#00ffae"/><stop offset="0.870" stop-color="#00ffff"/><stop offset="0.873" stop-color="#00dfff"/><stop offset="0.901" stop-color="#0000ff"/><stop offset="0.927" stop-color="#6600ff"/><stop offset="0.953" stop-color="#7300ff"/><stop offset="1.000" stop-color="#7300ff"/></linearGradient><linearGradient id="a134" x1="0" y1="0" x2="0" y2="1"><stop offset="0.000" stop-color="#00ffc3"/><stop offset="0.040" stop-color="#00fffa"/><stop offset="0.080" stop-color="#00ffd9"/><stop offset="0.132" stop-color="#00ff00"/><stop offset="0.140" stop-color="#21ff00"/><stop offset="0.255" stop-color="#ffff00"/><stop offset="0.280" stop-color="#ffce00"/><stop offset="0.360" stop-color="#ffb800"/><stop offset="0.449" stop-color="#ffff00"/><stop offset="0.547" stop-color="#b1ff00"/><stop offset="0.807" stop-color="#80ff00"/><stop offset="0.840" stop-color="#00ff00"/><stop offset="0.840" stop-color="#00ff00"/><stop offset="0.860" stop-color="#00ffae"/><stop offset="0.870" stop-color="#00ffff"/><stop offset="0.873" stop-color="#00dfff"/><stop offset="0.901" stop-color="#0000ff"/><stop offset="0.927" stop-color="#6600ff"/><stop offset="0.953" stop-color="#7300ff"/><stop offset="1.000" stop-color="#7300ff"/></linearGradient><linearGradient id="a135" x1="0" y1="0" x2="0" y2="1"><stop offset="0.000" stop-color="#00e7ff"/><stop offset="0.040" stop-color="#00b0ff"/><stop offset="0.080" stop-color="#00d0ff"/><stop offset="0.089" stop-color="#00ffff"/><stop offset="0.136" stop-color="#00ff00"/><stop offset="0.140" stop-color="#17ff00"/><stop offset="0.253" stop-color="#ffff00"/><stop offset="0.267" stop-color="#ffe300"/><stop offset="0.353" stop-color="#ffbf00"/><stop offset="0.439" stop-color="#ffff00"/><stop offset="0.547" stop-color="#afff00"/><stop offset="0.807" stop-color="#80ff00"/><stop offset="0.840" stop-color="#00ff00"/><stop offset="0.840" stop-color="#00ff00"/><stop offset="0.860" stop-color="#00ffae"/><stop offset="0.870" stop-color="#00ffff"/><stop offset="0.873" stop-color="#00dfff"/><stop offset="0.901" stop-color="#0000ff"/><stop offset="0.927" stop-color="#6600ff"/><stop offset="0.953" stop-color="#7300ff"/><stop offset="1.000" stop-color="#7300ff"/></linearGradient><linearGradient id="a136" x1="0" y1="0" x2="0" y2="1"><stop offset="0.000" stop-color="#00ff87"/><stop offset="0.040" stop-color="#00ffbe"/><stop offset="0.087" stop-color="#00ff88"/><stop offset="0.127" stop-color="#00ff00"/><stop offset="0.140" stop-color="#2aff00"/><stop offset="0.249" stop-color="#ffff00"/><stop offset="0.280" stop-color="#ffc300"/><stop offset="0.360" stop-color="#ffac00"/><stop offset="0.458" stop-color="#ffff00"/><stop offset="0.547" stop-color="#b3ff00"/><stop offset="0.807" stop-color="#80ff00"/><stop offset="0.840" stop-color="#00ff00"/><stop offset="0.840" stop-color="#00ff00"/><stop offset="0.860" stop-color="#00ffae"/><stop offset="0.870" stop-color="#00ffff"/><stop offset="0.873" stop-color="#00dfff"/><stop offset="0.901" stop-color="#0000ff"/><stop offset="0.927" stop-color="#6600ff"/><stop offset="0.953" stop-color="#7300ff"/><stop offset="1.000" stop-color="#7300ff"/></linearGradient><linearGradient id="a137" x1="0" y1="0" x2="0" y2="1"><stop offset="0.000" stop-color="#00ffca"/><stop offset="0.038" stop-color="#00ffff"/><stop offset="0.040" stop-color="#00fdff"/><stop offset="0.043" stop-color="#00ffff"/><stop offset="0.080" stop-color="#00ffe1"/><stop offset="0.133" stop-color="#00ff00"/><stop offset="0.140" stop-color="#1fff00"/><stop offset="0.258" stop-color="#ffff00"/><stop offset="0.280" stop-color="#ffd400"/><stop offset="0.367" stop-color="#ffc100"/><stop offset="0.446" stop-color="#ffff00"/><stop offset="0.547" stop-color="#afff00"/><stop offset="0.807" stop-color="#80ff00"/><stop offset="0.840" stop-color="#00ff00"/><stop offset="0.840" stop-color="#00ff00"/><stop offset="0.860" stop-color="#00ffae"/><stop offset="0.870" stop-color="#00ffff"/><stop offset="0.873" stop-color="#00dfff"/><stop offset="0.901" stop-color="#0000ff"/><stop offset="0.927" stop-color="#6600ff"/><stop offset="0.953" stop-color="#7300ff"/><stop offset="1.000" stop-color="#7300ff"/></linearGradient><linearGradient id="a138" x1="0" y1="0" x2="0" y2="1"><stop offset="0.000" stop-color="#00f0ff"/><stop offset="0.040" stop-color="#00b8ff"/><stop offset="0.080" stop-color="#00d8ff"/><stop offset="0.087" stop-color="#00ffff"/><stop offset="0.136" stop-color="#00ff00"/><stop offset="0.140" stop-color="#16ff00"/><stop offset="0.259" stop-color="#ffff00"/><stop offset="0.273" stop-color="#ffe300"/><stop offset="0.360" stop-color="#ffc800"/><stop offset="0.436" stop-color="#ffff00"/><stop offset="0.547" stop-color="#aeff00"/><stop offset="0.807" stop-color="#80ff00"/><stop offset="0.840" stop-color="#00ff00"/><stop offset="0.840" stop-color="#00ff00"/><stop offset="0.860" stop-color="#00ffae"/><stop offset="0.870" stop-color="#00ffff"/><stop offset="0.873" stop-color="#00dfff"/><stop offset="0.901" stop-color="#0000ff"/><stop offset="0.927" stop-color="#6600ff"/><stop offset="0.953" stop-color="#7300ff"/><stop offset="1.000" stop-color="#7300ff"/></linearGradient><linearGradient id="a139" x1="0" y1="0" x2="0" y2="1"><stop offset="0.000" stop-color="#00fffe"/><stop offset="0.000" stop-color="#00ffff"/><stop offset="0.040" stop-color="#00c9ff"/><stop offset="0.080" stop-color="#00e9ff"/><stop offset="0.084" stop-color="#00ffff"/><stop offset="0.134" stop-color="#00ff00"/><stop offset="0.140" stop-color="#1dff00"/><stop offset="0.252" stop-color="#ffff00"/><stop offset="0.280" stop-color="#ffc800"/><stop offset="0.360" stop-color="#ffb000"/><stop offset="0.454" stop-color="#ffff00"/><stop offset="0.547" stop-color="#b2ff00"/><stop offset="0.807" stop-color="#80ff00"/><stop offset="0.840" stop-color="#00ff00"/><stop offset="0.840" stop-color="#00ff00"/><stop offset="0.860" stop-color="#00ffae"/><stop offset="0.870" stop-color="#00ffff"/><stop offset="0.873" stop-color="#00dfff"/><stop offset="0.901" stop-color="#0000ff"/><stop offset="0.927" stop-color="#6600ff"/><stop offset="0.953" stop-color="#7300ff"/><stop offset="1.000" stop-color="#7300ff"/></linearGradient><linearGradient id="a140" x1="0" y1="0" x2="0" y2="1"><stop offset="0.000" stop-color="#00ffba"/><stop offset="0.040" stop-color="#00fff1"/><stop offset="0.080" stop-color="#00ffd1"/><stop offset="0.132" stop-color="#00ff00"/><stop offset="0.140" stop-color="#20ff00"/><stop offset="0.258" stop-color="#ffff00"/><stop offset="0.280" stop-color="#ffd500"/><stop offset="0.367" stop-color="#ffc200"/><stop offset="0.445" stop-color="#ffff00"/><stop offset="0.547" stop-color="#afff00"/><stop offset="0.807" stop-color="#80ff00"/><stop offset="0.840" stop-color="#00ff00"/><stop offset="0.840" stop-color="#00ff00"/><stop offset="0.860" stop-color="#00ffae"/><stop offset="0.870" stop-color="#00ffff"/><stop offset="0.873" stop-color="#00dfff"/><stop offset="0.901" stop-color="#0000ff"/><stop offset="0.927" stop-color="#6600ff"/><stop offset="0.953" stop-color="#7300ff"/><stop offset="1.000" stop-color="#7300ff"/></linearGradient><linearGradient id="a141" x1="0" y1="0" x2="0" y2="1"><stop offset="0.000" stop-color="#00ff8e"/><stop offset="0.040" stop-color="#00ffc5"/><stop offset="0.087" stop-color="#00ff8f"/><stop offset="0.129" stop-color="#00ff00"/><stop offset="0.140" stop-color="#27ff00"/><stop offset="0.253" stop-color="#ffff00"/><stop offset="0.280" stop-color="#ffcc00"/><stop offset="0.360" stop-color="#ffb500"/><stop offset="0.451" stop-color="#ffff00"/><stop offset="0.547" stop-color="#b1ff00"/><stop offset="0.807" stop-color="#80ff00"/><stop offset="0.840" stop-color="#00ff00"/><stop offset="0.840" stop-color="#00ff00"/><stop offset="0.860" stop-color="#00ffae"/><stop offset="0.870" stop-color="#00ffff"/><stop offset="0.873" stop-color="#00dfff"/><stop offset="0.901" stop-color="#0000ff"/><stop offset="0.927" stop-color="#6600ff"/><stop offset="0.953" stop-color="#7300ff"/><stop offset="1.000" stop-color="#7300ff"/></linearGradient><linearGradient id="a142" x1="0" y1="0" x2="0" y2="1"><stop offset="0.000" stop-color="#00ffb4"/><stop offset="0.040" stop-color="#00ffeb"/><stop offset="0.080" stop-color="#00ffcb"/><stop offset="0.132" stop-color="#00ff00"/><stop offset="0.140" stop-color="#20ff00"/><stop offset="0.259" stop-color="#ffff00"/><stop offset="0.280" stop-color="#ffd800"/><stop offset="0.367" stop-color="#ffc500"/><stop offset="0.442" stop-color="#ffff00"/><stop offset="0.547" stop-color="#afff00"/><stop offset="0.807" stop-color="#80ff00"/><stop offset="0.840" stop-color="#00ff00"/><stop offset="0.840" stop-color="#00ff00"/><stop offset="0.860" stop-color="#00ffae"/><stop offset="0.870" stop-color="#00ffff"/><stop offset="0.873" stop-color="#00dfff"/><stop offset="0.901" stop-color="#0000ff"/><stop offset="0.927" stop-color="#6600ff"/><stop offset="0.953" stop-color="#7300ff"/><stop offset="1.000" stop-color="#7300ff"/></linearGradient><linearGradient id="b0" x1="0" y1="0" x2="0" y2="1"><stop offset="0.000" stop-color="#00a8ff"/><stop offset="0.035" stop-color="#00ffff"/><stop offset="0.051" stop-color="#00ffd9"/><stop offset="0.207" stop-color="#00ff00"/><stop offset="0.220" stop-color="#13ff00"/><stop offset="0.331" stop-color="#c7ff00"/><stop offset="0.385" stop-color="#ffff00"/><stop offset="0.390" stop-color="#fffa00"/><stop offset="0.475" stop-color="#ffff00"/><stop offset="0.559" stop-color="#faff00"/><stop offset="0.737" stop-color="#13ff00"/><stop offset="0.762" stop-color="#00ff00"/><stop offset="0.814" stop-color="#00ff28"/><stop offset="0.890" stop-color="#00ffe3"/><stop offset="0.899" stop-color="#00ffff"/><stop offset="0.915" stop-color="#00ceff"/><stop offset="0.949" stop-color="#0000ff"/><stop offset="0.949" stop-color="#0100ff"/><stop offset="0.983" stop-color="#6d00ff"/><stop offset="1.000" stop-color="#8000ff"/></linearGradient><linearGradient id="b1" x1="0" y1="0" x2="0" y2="1"><stop offset="0.000" stop-color="#00aaff"/><stop offset="0.034" stop-color="#00ffff"/><stop offset="0.051" stop-color="#00ffd6"/><stop offset="0.204" stop-color="#00ff00"/><stop offset="0.220" stop-color="#17ff00"/><stop offset="0.331" stop-color="#cbff00"/><stop offset="0.381" stop-color="#ffff00"/><stop offset="0.390" stop-color="#fff600"/><stop offset="0.545" stop-color="#ffff00"/><stop offset="0.559" stop-color="#feff00"/><stop offset="0.737" stop-color="#17ff00"/><stop offset="0.766" stop-color="#00ff00"/><stop offset="0.814" stop-color="#00ff25"/><stop offset="0.890" stop-color="#00ffe1"/><stop offset="0.900" stop-color="#00ffff"/><stop offset="0.915" stop-color="#00d0ff"/><stop offset="0.949" stop-color="#0000ff"/><stop offset="0.949" stop-color="#0000ff"/><stop offset="0.983" stop-color="#6d00ff"/><stop offset="1.000" stop-color="#8000ff"/></linearGradient><linearGradient id="b2" x1="0" y1="0" x2="0" y2="1"><stop offset="0.000" stop-color="#00aeff"/><stop offset="0.032" stop-color="#00ffff"/><stop offset="0.051" stop-color="#00ffd0"/><stop offset="0.198" stop-color="#00ff00"/><stop offset="0.220" stop-color="#1fff00"/><stop offset="0.331" stop-color="#d5ff00"/><stop offset="0.371" stop-color="#ffff00"/><stop offset="0.390" stop-color="#ffeb00"/><stop offset="0.559" stop-color="#fff500"/><stop offset="0.567" stop-color="#ffff00"/><stop offset="0.737" stop-color="#1fff00"/><stop offset="0.776" stop-color="#00ff00"/><stop offset="0.814" stop-color="#00ff1d"/><stop offset="0.890" stop-color="#00ffdb"/><stop offset="0.902" stop-color="#00ffff"/><stop offset="0.915" stop-color="#00d5ff"/><stop offset="0.949" stop-color="#0002ff"/><stop offset="0.950" stop-color="#0000ff"/><stop offset="0.983" stop-color="#6c00ff"/><stop offset="1.000" stop-color="#8000ff"/></linearGradient><linearGradient id="b3" x1="0" y1="0" x2="0" y2="1"><stop offset="0.000" stop-color="#00a6ff"/><stop offset="0.037" stop-color="#00ffff"/><stop offset="0.051" stop-color="#00ffde"/><stop offset="0.208" stop-color="#00ff00"/><stop offset="0.229" stop-color="#1eff00"/><stop offset="0.331" stop-color="#bfff00"/><stop offset="0.398" stop-color="#faff00"/><stop offset="0.559" stop-color="#efff00"/><stop offset="0.737" stop-color="#0dff00"/><stop offset="0.754" stop-color="#00ff00"/><stop offset="0.814" stop-color="#00ff31"/><stop offset="0.890" stop-color="#00ffea"/><stop offset="0.896" stop-color="#00ffff"/><stop offset="0.924" stop-color="#009aff"/><stop offset="0.948" stop-color="#0000ff"/><stop offset="0.983" stop-color="#6d00ff"/><stop offset="1.000" stop-color="#8000ff"/></linearGradient><linearGradient id="b4" x1="0" y1="0" x2="0" y2="1"><stop offset="0.000" stop-color="#00ceff"/><stop offset="0.022" stop-color="#00ffff"/><stop offset="0.059" stop-color="#00ffac"/><stop offset="0.164" stop-color="#00ff00"/><stop offset="0.254" stop-color="#95ff00"/><stop offset="0.329" stop-color="#ffff00"/><stop offset="0.347" stop-color="#ffe500"/><stop offset="0.398" stop-color="#ffc000"/><stop offset="0.559" stop-color="#ffd100"/><stop offset="0.597" stop-color="#ffff00"/><stop offset="0.780" stop-color="#21ff00"/><stop offset="0.800" stop-color="#00ff00"/><stop offset="0.831" stop-color="#00ff33"/><stop offset="0.890" stop-color="#00ffd1"/><stop offset="0.902" stop-color="#00ffff"/><stop offset="0.924" stop-color="#00abff"/><stop offset="0.950" stop-color="#0000ff"/><stop offset="0.983" stop-color="#6c00ff"/><stop offset="1.000" stop-color="#8000ff"/></linearGradient><linearGradient id="b5" x1="0" y1="0" x2="0" y2="1"><stop offset="0.000" stop-color="#00e1ff"/><stop offset="0.015" stop-color="#00ffff"/><stop offset="0.076" stop-color="#00ff85"/><stop offset="0.155" stop-color="#00ff00"/><stop offset="0.307" stop-color="#ffff00"/><stop offset="0.322" stop-color="#ffe600"/><stop offset="0.398" stop-color="#ffae00"/><stop offset="0.559" stop-color="#ffc400"/><stop offset="0.606" stop-color="#ffff00"/><stop offset="0.805" stop-color="#06ff00"/><stop offset="0.808" stop-color="#00ff00"/><stop offset="0.881" stop-color="#00ffb5"/><stop offset="0.901" stop-color="#00ffff"/><stop offset="0.924" stop-color="#00a8ff"/><stop offset="0.950" stop-color="#0000ff"/><stop offset="0.983" stop-color="#6c00ff"/><stop offset="1.000" stop-color="#8000ff"/></linearGradient><linearGradient id="b6" x1="0" y1="0" x2="0" y2="1"><stop offset="0.000" stop-color="#00ebff"/><stop offset="0.011" stop-color="#00ffff"/><stop offset="0.152" stop-color="#00ff00"/><stop offset="0.293" stop-color="#ffff00"/><stop offset="0.297" stop-color="#fff800"/><stop offset="0.398" stop-color="#ffb100"/><stop offset="0.551" stop-color="#ffc500"/><stop offset="0.604" stop-color="#ffff00"/><stop offset="0.712" stop-color="#8bff00"/><stop offset="0.801" stop-color="#00ff00"/><stop offset="0.805" stop-color="#00ff07"/><stop offset="0.873" stop-color="#00ffa3"/><stop offset="0.897" stop-color="#00ffff"/><stop offset="0.924" stop-color="#009dff"/><stop offset="0.949" stop-color="#0000ff"/><stop offset="0.983" stop-color="#6d00ff"/><stop offset="1.000" stop-color="#8000ff"/></linearGradient><linearGradient id="b7" x1="0" y1="0" x2="0" y2="1"><stop offset="0.000" stop-color="#00f2ff"/><stop offset="0.007" stop-color="#00ffff"/><stop offset="0.147" stop-color="#00ff00"/><stop offset="0.280" stop-color="#f3ff00"/><stop offset="0.294" stop-color="#ffff00"/><stop offset="0.381" stop-color="#ffb500"/><stop offset="0.542" stop-color="#ffc900"/><stop offset="0.604" stop-color="#ffff00"/><stop offset="0.653" stop-color="#d5ff00"/><stop offset="0.763" stop-color="#45ff00"/><stop offset="0.794" stop-color="#00ff00"/><stop offset="0.873" stop-color="#00ffae"/><stop offset="0.895" stop-color="#00ffff"/><stop offset="0.924" stop-color="#0093ff"/><stop offset="0.948" stop-color="#0000ff"/><stop offset="0.983" stop-color="#6d00ff"/><stop offset="1.000" stop-color="#8000ff"/></linearGradient><linearGradient id="b8" x1="0" y1="0" x2="0" y2="1"><stop offset="0.000" stop-color="#00fff8"/><stop offset="0.128" stop-color="#00ff00"/><stop offset="0.260" stop-color="#ffff00"/><stop offset="0.280" stop-color="#ffd900"/><stop offset="0.390" stop-color="#ff8800"/><stop offset="0.542" stop-color="#ff9900"/><stop offset="0.636" stop-color="#ffef00"/><stop offset="0.647" stop-color="#ffff00"/><stop offset="0.763" stop-color="#62ff00"/><stop offset="0.805" stop-color="#00ff00"/><stop offset="0.873" stop-color="#00ff9b"/><stop offset="0.899" stop-color="#00ffff"/><stop offset="0.924" stop-color="#009eff"/><stop offset="0.949" stop-color="#0000ff"/><stop offset="0.983" stop-color="#6d00ff"/><stop offset="1.000" stop-color="#8000ff"/></linearGradient><linearGradient id="b9" x1="0" y1="0" x2="0" y2="1"><stop offset="0.000" stop-color="#00fff1"/><stop offset="0.121" stop-color="#00ff00"/><stop offset="0.249" stop-color="#ffff00"/><stop offset="0.280" stop-color="#ffc100"/><stop offset="0.390" stop-color="#ff7600"/><stop offset="0.551" stop-color="#ff8800"/><stop offset="0.636" stop-color="#ffe100"/><stop offset="0.657" stop-color="#ffff00"/><stop offset="0.763" stop-color="#6aff00"/><stop offset="0.810" stop-color="#00ff00"/><stop offset="0.864" stop-color="#00ff7b"/><stop offset="0.899" stop-color="#00ffff"/><stop offset="0.924" stop-color="#009eff"/><stop offset="0.949" stop-color="#0000ff"/><stop offset="0.983" stop-color="#6d00ff"/><stop offset="1.000" stop-color="#8000ff"/></linearGradient><linearGradient id="b10" x1="0" y1="0" x2="0" y2="1"><stop offset="0.000" stop-color="#00fff9"/><stop offset="0.122" stop-color="#00ff00"/><stop offset="0.136" stop-color="#1dff00"/><stop offset="0.259" stop-color="#ffff00"/><stop offset="0.297" stop-color="#ffba00"/><stop offset="0.407" stop-color="#ff8500"/><stop offset="0.559" stop-color="#ff9d00"/><stop offset="0.627" stop-color="#ffe400"/><stop offset="0.646" stop-color="#ffff00"/><stop offset="0.763" stop-color="#57ff00"/><stop offset="0.802" stop-color="#00ff00"/><stop offset="0.864" stop-color="#00ff8b"/><stop offset="0.895" stop-color="#00ffff"/><stop offset="0.924" stop-color="#0093ff"/><stop offset="0.948" stop-color="#0000ff"/><stop offset="0.983" stop-color="#6d00ff"/><stop offset="1.000" stop-color="#8000ff"/></linearGradient><linearGradient id="b11" x1="0" y1="0" x2="0" y2="1"><stop offset="0.000" stop-color="#00ffe1"/><stop offset="0.102" stop-color="#00ff00"/><stop offset="0.119" stop-color="#25ff00"/><stop offset="0.232" stop-color="#ffff00"/><stop offset="0.288" stop-color="#ff9400"/><stop offset="0.381" stop-color="#ff5f00"/><stop offset="0.500" stop-color="#ff5d00"/><stop offset="0.602" stop-color="#ff9800"/><stop offset="0.667" stop-color="#ffff00"/><stop offset="0.703" stop-color="#c6ff00"/><stop offset="0.771" stop-color="#5eff00"/><stop offset="0.813" stop-color="#00ff00"/><stop offset="0.856" stop-color="#00ff5e"/><stop offset="0.901" stop-color="#00ffff"/><stop offset="0.915" stop-color="#00ccff"/><stop offset="0.949" stop-color="#0000ff"/><stop offset="0.949" stop-color="#0100ff"/><stop offset="0.983" stop-color="#6d00ff"/><stop offset="1.000" stop-color="#8000ff"/></linearGradient><linearGradient id="b12" x1="0" y1="0" x2="0" y2="1"><stop offset="0.000" stop-color="#00ffc9"/><stop offset="0.102" stop-color="#00ff00"/><stop offset="0.144" stop-color="#52ff00"/><stop offset="0.240" stop-color="#ffff00"/><stop offset="0.288" stop-color="#ffa900"/><stop offset="0.373" stop-color="#ff7a00"/><stop offset="0.492" stop-color="#ff7b00"/><stop offset="0.602" stop-color="#ffc600"/><stop offset="0.641" stop-color="#ffff00"/><stop offset="0.737" stop-color="#74ff00"/><stop offset="0.797" stop-color="#00ff00"/><stop offset="0.856" stop-color="#00ff72"/><stop offset="0.899" stop-color="#00ffff"/><stop offset="0.915" stop-color="#00cbff"/><stop offset="0.947" stop-color="#0000ff"/><stop offset="0.958" stop-color="#2000ff"/><stop offset="0.983" stop-color="#6d00ff"/><stop offset="1.000" stop-color="#8000ff"/></linearGradient><linearGradient id="b13" x1="0" y1="0" x2="0" y2="1"><stop offset="0.000" stop-color="#00ffb4"/><stop offset="0.102" stop-color="#00ff00"/><stop offset="0.247" stop-color="#ffff00"/><stop offset="0.271" stop-color="#ffd400"/><stop offset="0.364" stop-color="#ff9700"/><stop offset="0.492" stop-color="#ffa000"/><stop offset="0.608" stop-color="#ffff00"/><stop offset="0.610" stop-color="#fdff00"/><stop offset="0.777" stop-color="#00ff00"/><stop offset="0.831" stop-color="#00ff51"/><stop offset="0.895" stop-color="#00ffff"/><stop offset="0.915" stop-color="#00c8ff"/><stop offset="0.947" stop-color="#0000ff"/><stop offset="0.958" stop-color="#2100ff"/><stop offset="0.983" stop-color="#6d00ff"/><stop offset="1.000" stop-color="#8000ff"/></linearGradient><linearGradient id="b14" x1="0" y1="0" x2="0" y2="1"><stop offset="0.000" stop-color="#00ff90"/><stop offset="0.086" stop-color="#00ff00"/><stop offset="0.237" stop-color="#ffff00"/><stop offset="0.254" stop-color="#ffe200"/><stop offset="0.356" stop-color="#ff9900"/><stop offset="0.483" stop-color="#ffa300"/><stop offset="0.576" stop-color="#ffff00"/><stop offset="0.627" stop-color="#ccff00"/><stop offset="0.768" stop-color="#00ff00"/><stop offset="0.831" stop-color="#00ff5a"/><stop offset="0.896" stop-color="#00ffff"/><stop offset="0.915" stop-color="#00cfff"/><stop offset="0.949" stop-color="#0000ff"/><stop offset="0.949" stop-color="#0000ff"/><stop offset="0.983" stop-color="#6d00ff"/><stop offset="1.000" stop-color="#8000ff"/></linearGradient><linearGradient id="b15" x1="0" y1="0" x2="0" y2="1"><stop offset="0.000" stop-color="#00ff77"/><stop offset="0.074" stop-color="#00ff00"/><stop offset="0.220" stop-color="#eaff00"/><stop offset="0.241" stop-color="#ffff00"/><stop offset="0.297" stop-color="#ffc700"/><stop offset="0.373" stop-color="#ffa800"/><stop offset="0.483" stop-color="#ffb800"/><stop offset="0.544" stop-color="#ffff00"/><stop offset="0.661" stop-color="#77ff00"/><stop offset="0.750" stop-color="#00ff00"/><stop offset="0.831" stop-color="#00ff6d"/><stop offset="0.895" stop-color="#00ffff"/><stop offset="0.915" stop-color="#00d2ff"/><stop offset="0.949" stop-color="#0000ff"/><stop offset="0.949" stop-color="#0000ff"/><stop offset="0.983" stop-color="#6d00ff"/><stop offset="1.000" stop-color="#8000ff"/></linearGradient><linearGradient id="b16" x1="0" y1="0" x2="0" y2="1"><stop offset="0.000" stop-color="#00ff7c"/><stop offset="0.083" stop-color="#00ff00"/><stop offset="0.212" stop-color="#c1ff00"/><stop offset="0.257" stop-color="#ffff00"/><stop offset="0.263" stop-color="#fff700"/><stop offset="0.381" stop-color="#ffcf00"/><stop offset="0.483" stop-color="#ffe100"/><stop offset="0.507" stop-color="#ffff00"/><stop offset="0.713" stop-color="#00ff00"/><stop offset="0.831" stop-color="#00ff91"/><stop offset="0.888" stop-color="#00ffff"/><stop offset="0.915" stop-color="#00c9ff"/><stop offset="0.947" stop-color="#0000ff"/><stop offset="0.958" stop-color="#2100ff"/><stop offset="0.983" stop-color="#6d00ff"/><stop offset="1.000" stop-color="#8000ff"/></linearGradient><linearGradient id="b17" x1="0" y1="0" x2="0" y2="1"><stop offset="0.000" stop-color="#00ff70"/><stop offset="0.083" stop-color="#00ff00"/><stop offset="0.169" stop-color="#74ff00"/><stop offset="0.249" stop-color="#ffff00"/><stop offset="0.254" stop-color="#fff600"/><stop offset="0.424" stop-color="#ffd900"/><stop offset="0.483" stop-color="#ffee00"/><stop offset="0.496" stop-color="#ffff00"/><stop offset="0.696" stop-color="#00ff00"/><stop offset="0.864" stop-color="#00ffd7"/><stop offset="0.887" stop-color="#00ffff"/><stop offset="0.915" stop-color="#00cdff"/><stop offset="0.949" stop-color="#0000ff"/><stop offset="0.949" stop-color="#0100ff"/><stop offset="0.983" stop-color="#6d00ff"/><stop offset="1.000" stop-color="#8000ff"/></linearGradient><linearGradient id="b18" x1="0" y1="0" x2="0" y2="1"><stop offset="0.000" stop-color="#00ff70"/><stop offset="0.094" stop-color="#00ff00"/><stop offset="0.136" stop-color="#32ff00"/><stop offset="0.263" stop-color="#fbff00"/><stop offset="0.475" stop-color="#fbff00"/><stop offset="0.666" stop-color="#00ff00"/><stop offset="0.703" stop-color="#00ff31"/><stop offset="0.871" stop-color="#00ffff"/><stop offset="0.915" stop-color="#00c8ff"/><stop offset="0.947" stop-color="#0000ff"/><stop offset="0.958" stop-color="#2100ff"/><stop offset="0.983" stop-color="#6d00ff"/><stop offset="1.000" stop-color="#8000ff"/></linearGradient><linearGradient id="b19" x1="0" y1="0" x2="0" y2="1"><stop offset="0.000" stop-color="#00ff6b"/><stop offset="0.100" stop-color="#00ff00"/><stop offset="0.119" stop-color="#14ff00"/><stop offset="0.263" stop-color="#f6ff00"/><stop offset="0.475" stop-color="#e8ff00"/><stop offset="0.640" stop-color="#00ff00"/><stop offset="0.669" stop-color="#00ff2a"/><stop offset="0.865" stop-color="#00ffff"/><stop offset="0.915" stop-color="#00c8ff"/><stop offset="0.947" stop-color="#0000ff"/><stop offset="0.958" stop-color="#2100ff"/><stop offset="0.983" stop-color="#6d00ff"/><stop offset="1.000" stop-color="#8000ff"/></linearGradient><linearGradient id="b20" x1="0" y1="0" x2="0" y2="1"><stop offset="0.000" stop-color="#00ff5a"/><stop offset="0.081" stop-color="#00ff00"/><stop offset="0.119" stop-color="#29ff00"/><stop offset="0.260" stop-color="#ffff00"/><stop offset="0.263" stop-color="#fffa00"/><stop offset="0.365" stop-color="#ffff00"/><stop offset="0.466" stop-color="#faff00"/><stop offset="0.643" stop-color="#00ff00"/><stop offset="0.669" stop-color="#00ff26"/><stop offset="0.869" stop-color="#00ffff"/><stop offset="0.915" stop-color="#00ccff"/><stop offset="0.949" stop-color="#0000ff"/><stop offset="0.949" stop-color="#0100ff"/><stop offset="0.983" stop-color="#6d00ff"/><stop offset="1.000" stop-color="#8000ff"/></linearGradient><linearGradient id="b21" x1="0" y1="0" x2="0" y2="1"><stop offset="0.000" stop-color="#00ff4d"/><stop offset="0.066" stop-color="#00ff00"/><stop offset="0.127" stop-color="#47ff00"/><stop offset="0.254" stop-color="#ffff00"/><stop offset="0.263" stop-color="#fff200"/><stop offset="0.419" stop-color="#ffff00"/><stop offset="0.466" stop-color="#fbff00"/><stop offset="0.644" stop-color="#00ff00"/><stop offset="0.678" stop-color="#00ff2f"/><stop offset="0.871" stop-color="#00ffff"/><stop offset="0.915" stop-color="#00cfff"/><stop offset="0.949" stop-color="#0000ff"/><stop offset="0.949" stop-color="#0000ff"/><stop offset="0.983" stop-color="#6d00ff"/><stop offset="1.000" stop-color="#8000ff"/></linearGradient><linearGradient id="b22" x1="0" y1="0" x2="0" y2="1"><stop offset="0.000" stop-color="#00ff4c"/><stop offset="0.064" stop-color="#00ff00"/><stop offset="0.136" stop-color="#56ff00"/><stop offset="0.260" stop-color="#ffff00"/><stop offset="0.263" stop-color="#fffc00"/><stop offset="0.302" stop-color="#ffff00"/><stop offset="0.449" stop-color="#f3ff00"/><stop offset="0.635" stop-color="#00ff00"/><stop offset="0.695" stop-color="#00ff4f"/><stop offset="0.863" stop-color="#00ffff"/><stop offset="0.915" stop-color="#00c9ff"/><stop offset="0.947" stop-color="#0000ff"/><stop offset="0.958" stop-color="#2100ff"/><stop offset="0.983" stop-color="#6d00ff"/><stop offset="1.000" stop-color="#8000ff"/></linearGradient><linearGradient id="b23" x1="0" y1="0" x2="0" y2="1"><stop offset="0.000" stop-color="#00ff51"/><stop offset="0.067" stop-color="#00ff00"/><stop offset="0.144" stop-color="#5dff00"/><stop offset="0.263" stop-color="#f1ff00"/><stop offset="0.441" stop-color="#e4ff00"/><stop offset="0.621" stop-color="#00ff00"/><stop offset="0.712" stop-color="#00ff73"/><stop offset="0.852" stop-color="#00ffff"/><stop offset="0.915" stop-color="#00c0ff"/><stop offset="0.946" stop-color="#0000ff"/><stop offset="0.958" stop-color="#2300ff"/><stop offset="0.983" stop-color="#6d00ff"/><stop offset="1.000" stop-color="#8000ff"/></linearGradient><linearGradient id="b24" x1="0" y1="0" x2="0" y2="1"><stop offset="0.000" stop-color="#00ff30"/><stop offset="0.037" stop-color="#00ff00"/><stop offset="0.144" stop-color="#88ff00"/><stop offset="0.243" stop-color="#ffff00"/><stop offset="0.263" stop-color="#ffe700"/><stop offset="0.441" stop-color="#fff800"/><stop offset="0.446" stop-color="#ffff00"/><stop offset="0.638" stop-color="#00ff00"/><stop offset="0.712" stop-color="#00ff62"/><stop offset="0.867" stop-color="#00ffff"/><stop offset="0.907" stop-color="#00d6ff"/><stop offset="0.915" stop-color="#00cfff"/><stop offset="0.949" stop-color="#0000ff"/><stop offset="0.949" stop-color="#0000ff"/><stop offset="0.983" stop-color="#6d00ff"/><stop offset="1.000" stop-color="#8000ff"/></linearGradient><linearGradient id="b25" x1="0" y1="0" x2="0" y2="1"><stop offset="0.000" stop-color="#00ff39"/><stop offset="0.044" stop-color="#00ff00"/><stop offset="0.161" stop-color="#96ff00"/><stop offset="0.263" stop-color="#ffff00"/><stop offset="0.432" stop-color="#f5ff00"/><stop offset="0.619" stop-color="#00ff00"/><stop offset="0.703" stop-color="#00ff6f"/><stop offset="0.846" stop-color="#00ffff"/><stop offset="0.873" stop-color="#00e4ff"/><stop offset="0.915" stop-color="#00c3ff"/><stop offset="0.947" stop-color="#0000ff"/><stop offset="0.958" stop-color="#2200ff"/><stop offset="0.983" stop-color="#6d00ff"/><stop offset="1.000" stop-color="#8000ff"/></linearGradient><linearGradient id="b26" x1="0" y1="0" x2="0" y2="1"><stop offset="0.000" stop-color="#00ff20"/><stop offset="0.026" stop-color="#00ff00"/><stop offset="0.229" stop-color="#feff00"/><stop offset="0.231" stop-color="#ffff00"/><stop offset="0.288" stop-color="#ffe700"/><stop offset="0.432" stop-color="#fff200"/><stop offset="0.442" stop-color="#ffff00"/><stop offset="0.626" stop-color="#00ff00"/><stop offset="0.678" stop-color="#00ff48"/><stop offset="0.847" stop-color="#00ffff"/><stop offset="0.847" stop-color="#00ffff"/><stop offset="0.915" stop-color="#00cdff"/><stop offset="0.949" stop-color="#0000ff"/><stop offset="0.949" stop-color="#0100ff"/><stop offset="0.983" stop-color="#6d00ff"/><stop offset="1.000" stop-color="#8000ff"/></linearGradient><linearGradient id="b27" x1="0" y1="0" x2="0" y2="1"><stop offset="0.000" stop-color="#00ff03"/><stop offset="0.002" stop-color="#00ff00"/><stop offset="0.198" stop-color="#ffff00"/><stop offset="0.203" stop-color="#fff900"/><stop offset="0.280" stop-color="#ffcb00"/><stop offset="0.432" stop-color="#ffdb00"/><stop offset="0.457" stop-color="#ffff00"/><stop offset="0.633" stop-color="#00ff00"/><stop offset="0.661" stop-color="#00ff29"/><stop offset="0.839" stop-color="#00fff2"/><stop offset="0.857" stop-color="#00ffff"/><stop offset="0.915" stop-color="#00d6ff"/><stop offset="0.949" stop-color="#0003ff"/><stop offset="0.950" stop-color="#0000ff"/><stop offset="0.983" stop-color="#6c00ff"/><stop offset="1.000" stop-color="#8000ff"/></linearGradient><linearGradient id="b28" x1="0" y1="0" x2="0" y2="1"><stop offset="0.000" stop-color="#13ff00"/><stop offset="0.186" stop-color="#ffff00"/><stop offset="0.195" stop-color="#fff400"/><stop offset="0.280" stop-color="#ffcb00"/><stop offset="0.432" stop-color="#ffe700"/><stop offset="0.448" stop-color="#ffff00"/><stop offset="0.621" stop-color="#00ff00"/><stop offset="0.653" stop-color="#00ff2f"/><stop offset="0.839" stop-color="#00fffd"/><stop offset="0.842" stop-color="#00ffff"/><stop offset="0.915" stop-color="#00ccff"/><stop offset="0.948" stop-color="#0000ff"/><stop offset="0.958" stop-color="#2000ff"/><stop offset="0.983" stop-color="#6d00ff"/><stop offset="1.000" stop-color="#8000ff"/></linearGradient><linearGradient id="b29" x1="0" y1="0" x2="0" y2="1"><stop offset="0.000" stop-color="#2eff00"/><stop offset="0.162" stop-color="#ffff00"/><stop offset="0.178" stop-color="#ffea00"/><stop offset="0.288" stop-color="#ffc500"/><stop offset="0.432" stop-color="#ffec00"/><stop offset="0.445" stop-color="#ffff00"/><stop offset="0.614" stop-color="#00ff00"/><stop offset="0.653" stop-color="#00ff39"/><stop offset="0.834" stop-color="#00ffff"/><stop offset="0.839" stop-color="#00faff"/><stop offset="0.915" stop-color="#00c5ff"/><stop offset="0.947" stop-color="#0000ff"/><stop offset="0.958" stop-color="#2100ff"/><stop offset="0.983" stop-color="#6d00ff"/><stop offset="1.000" stop-color="#8000ff"/></linearGradient><linearGradient id="b30" x1="0" y1="0" x2="0" y2="1"><stop offset="0.000" stop-color="#51ff00"/><stop offset="0.131" stop-color="#ffff00"/><stop offset="0.169" stop-color="#ffcc00"/><stop offset="0.297" stop-color="#ffb400"/><stop offset="0.432" stop-color="#ffe600"/><stop offset="0.448" stop-color="#ffff00"/><stop offset="0.612" stop-color="#00ff00"/><stop offset="0.644" stop-color="#00ff33"/><stop offset="0.833" stop-color="#00ffff"/><stop offset="0.839" stop-color="#00f8ff"/><stop offset="0.915" stop-color="#00c4ff"/><stop offset="0.947" stop-color="#0000ff"/><stop offset="0.958" stop-color="#2200ff"/><stop offset="0.983" stop-color="#6d00ff"/><stop offset="1.000" stop-color="#8000ff"/></linearGradient><linearGradient id="b31" x1="0" y1="0" x2="0" y2="1"><stop offset="0.000" stop-color="#93ff00"/><stop offset="0.075" stop-color="#ffff00"/><stop offset="0.144" stop-color="#ff9a00"/><stop offset="0.263" stop-color="#ff7300"/><stop offset="0.415" stop-color="#ffa900"/><stop offset="0.473" stop-color="#ffff00"/><stop offset="0.508" stop-color="#cbff00"/><stop offset="0.625" stop-color="#00ff00"/><stop offset="0.636" stop-color="#00ff12"/><stop offset="0.839" stop-color="#00fff6"/><stop offset="0.852" stop-color="#00ffff"/><stop offset="0.915" stop-color="#00d2ff"/><stop offset="0.949" stop-color="#0001ff"/><stop offset="0.949" stop-color="#0000ff"/><stop offset="0.983" stop-color="#6d00ff"/><stop offset="1.000" stop-color="#8000ff"/></linearGradient><linearGradient id="b32" x1="0" y1="0" x2="0" y2="1"><stop offset="0.000" stop-color="#acff00"/><stop offset="0.055" stop-color="#ffff00"/><stop offset="0.136" stop-color="#ff8700"/><stop offset="0.220" stop-color="#ff6b00"/><stop offset="0.390" stop-color="#ff9c00"/><stop offset="0.474" stop-color="#ffff00"/><stop offset="0.492" stop-color="#ebff00"/><stop offset="0.617" stop-color="#00ff00"/><stop offset="0.627" stop-color="#00ff14"/><stop offset="0.839" stop-color="#00fffd"/><stop offset="0.842" stop-color="#00ffff"/><stop offset="0.915" stop-color="#00ccff"/><stop offset="0.948" stop-color="#0000ff"/><stop offset="0.958" stop-color="#2000ff"/><stop offset="0.983" stop-color="#6d00ff"/><stop offset="1.000" stop-color="#8000ff"/></linearGradient><linearGradient id="b33" x1="0" y1="0" x2="0" y2="1"><stop offset="0.000" stop-color="#c4ff00"/><stop offset="0.038" stop-color="#ffff00"/><stop offset="0.136" stop-color="#ff6a00"/><stop offset="0.254" stop-color="#ff5400"/><stop offset="0.398" stop-color="#ff9700"/><stop offset="0.474" stop-color="#ffff00"/><stop offset="0.500" stop-color="#dcff00"/><stop offset="0.618" stop-color="#00ff00"/><stop offset="0.627" stop-color="#00ff10"/><stop offset="0.839" stop-color="#00fffa"/><stop offset="0.847" stop-color="#00ffff"/><stop offset="0.915" stop-color="#00cfff"/><stop offset="0.949" stop-color="#0000ff"/><stop offset="0.949" stop-color="#0000ff"/><stop offset="0.983" stop-color="#6d00ff"/><stop offset="1.000" stop-color="#8000ff"/></linearGradient><linearGradient id="b34" x1="0" y1="0" x2="0" y2="1"><stop offset="0.000" stop-color="#d6ff00"/><stop offset="0.025" stop-color="#ffff00"/><stop offset="0.068" stop-color="#ffb700"/><stop offset="0.127" stop-color="#ff4500"/><stop offset="0.246" stop-color="#ff2b00"/><stop offset="0.381" stop-color="#ff6b00"/><stop offset="0.479" stop-color="#ffff00"/><stop offset="0.492" stop-color="#ecff00"/><stop offset="0.619" stop-color="#00ff00"/><stop offset="0.627" stop-color="#00ff0e"/><stop offset="0.839" stop-color="#00fff7"/><stop offset="0.850" stop-color="#00ffff"/><stop offset="0.915" stop-color="#00d1ff"/><stop offset="0.949" stop-color="#0000ff"/><stop offset="0.949" stop-color="#0000ff"/><stop offset="0.983" stop-color="#6d00ff"/><stop offset="1.000" stop-color="#8000ff"/></linearGradient><linearGradient id="b35" x1="0" y1="0" x2="0" y2="1"><stop offset="0.000" stop-color="#d9ff00"/><stop offset="0.025" stop-color="#ffff00"/><stop offset="0.068" stop-color="#ffbe00"/><stop offset="0.119" stop-color="#ff5b00"/><stop offset="0.229" stop-color="#ff3d00"/><stop offset="0.364" stop-color="#ff7400"/><stop offset="0.468" stop-color="#ffff00"/><stop offset="0.483" stop-color="#ebff00"/><stop offset="0.610" stop-color="#00ff00"/><stop offset="0.619" stop-color="#00ff0f"/><stop offset="0.839" stop-color="#00fffd"/><stop offset="0.841" stop-color="#00ffff"/><stop offset="0.915" stop-color="#00ccff"/><stop offset="0.948" stop-color="#0000ff"/><stop offset="0.958" stop-color="#2000ff"/><stop offset="0.983" stop-color="#6d00ff"/><stop offset="1.000" stop-color="#8000ff"/></linearGradient><linearGradient id="b36" x1="0" y1="0" x2="0" y2="1"><stop offset="0.000" stop-color="#e3ff00"/><stop offset="0.025" stop-color="#ffff00"/><stop offset="0.068" stop-color="#ffce00"/><stop offset="0.136" stop-color="#ff6500"/><stop offset="0.288" stop-color="#ff6a00"/><stop offset="0.441" stop-color="#ffe800"/><stop offset="0.455" stop-color="#ffff00"/><stop offset="0.525" stop-color="#90ff00"/><stop offset="0.610" stop-color="#00ff00"/><stop offset="0.627" stop-color="#00ff1d"/><stop offset="0.839" stop-color="#00ffff"/><stop offset="0.839" stop-color="#00ffff"/><stop offset="0.915" stop-color="#00caff"/><stop offset="0.947" stop-color="#0000ff"/><stop offset="0.958" stop-color="#2000ff"/><stop offset="0.983" stop-color="#6d00ff"/><stop offset="1.000" stop-color="#8000ff"/></linearGradient><linearGradient id="b37" x1="0" y1="0" x2="0" y2="1"><stop offset="0.000" stop-color="#e3ff00"/><stop offset="0.027" stop-color="#ffff00"/><stop offset="0.068" stop-color="#ffd600"/><stop offset="0.127" stop-color="#ff7700"/><stop offset="0.280" stop-color="#ff7200"/><stop offset="0.432" stop-color="#ffed00"/><stop offset="0.444" stop-color="#ffff00"/><stop offset="0.517" stop-color="#95ff00"/><stop offset="0.603" stop-color="#00ff00"/><stop offset="0.619" stop-color="#00ff1a"/><stop offset="0.838" stop-color="#00ffff"/><stop offset="0.847" stop-color="#00f5ff"/><stop offset="0.915" stop-color="#00c7ff"/><stop offset="0.947" stop-color="#0000ff"/><stop offset="0.958" stop-color="#2100ff"/><stop offset="0.983" stop-color="#6d00ff"/><stop offset="1.000" stop-color="#8000ff"/></linearGradient><linearGradient id="b38" x1="0" y1="0" x2="0" y2="1"><stop offset="0.000" stop-color="#cfff00"/><stop offset="0.039" stop-color="#ffff00"/><stop offset="0.059" stop-color="#ffe500"/><stop offset="0.102" stop-color="#ff8700"/><stop offset="0.161" stop-color="#ff5d00"/><stop offset="0.297" stop-color="#ff6700"/><stop offset="0.407" stop-color="#ffc600"/><stop offset="0.441" stop-color="#ffff00"/><stop offset="0.595" stop-color="#00ff00"/><stop offset="0.627" stop-color="#00ff35"/><stop offset="0.825" stop-color="#00ffff"/><stop offset="0.847" stop-color="#00e8ff"/><stop offset="0.915" stop-color="#00bbff"/><stop offset="0.946" stop-color="#0000ff"/><stop offset="0.958" stop-color="#2400ff"/><stop offset="0.983" stop-color="#6e00ff"/><stop offset="1.000" stop-color="#8000ff"/></linearGradient><linearGradient id="b39" x1="0" y1="0" x2="0" y2="1"><stop offset="0.000" stop-color="#e0ff00"/><stop offset="0.028" stop-color="#ffff00"/><stop offset="0.068" stop-color="#ffd200"/><stop offset="0.136" stop-color="#ff7500"/><stop offset="0.288" stop-color="#ff7000"/><stop offset="0.407" stop-color="#ffc500"/><stop offset="0.442" stop-color="#ffff00"/><stop offset="0.593" stop-color="#07ff00"/><stop offset="0.599" stop-color="#00ff00"/><stop offset="0.832" stop-color="#00ffff"/><stop offset="0.839" stop-color="#00f8ff"/><stop offset="0.915" stop-color="#00c4ff"/><stop offset="0.947" stop-color="#0000ff"/><stop offset="0.958" stop-color="#2200ff"/><stop offset="0.983" stop-color="#6d00ff"/><stop offset="1.000" stop-color="#8000ff"/></linearGradient><linearGradient id="b40" x1="0" y1="0" x2="0" y2="1"><stop offset="0.000" stop-color="#edff00"/><stop offset="0.029" stop-color="#ffff00"/><stop offset="0.178" stop-color="#ffa000"/><stop offset="0.314" stop-color="#ffa900"/><stop offset="0.438" stop-color="#ffff00"/><stop offset="0.475" stop-color="#e6ff00"/><stop offset="0.615" stop-color="#00ff00"/><stop offset="0.636" stop-color="#00ff21"/><stop offset="0.839" stop-color="#00fffd"/><stop offset="0.841" stop-color="#00ffff"/><stop offset="0.915" stop-color="#00ccff"/><stop offset="0.948" stop-color="#0000ff"/><stop offset="0.958" stop-color="#2000ff"/><stop offset="0.983" stop-color="#6d00ff"/><stop offset="1.000" stop-color="#8000ff"/></linearGradient><linearGradient id="b41" x1="0" y1="0" x2="0" y2="1"><stop offset="0.000" stop-color="#f4ff00"/><stop offset="0.010" stop-color="#ffff00"/><stop offset="0.161" stop-color="#ff5000"/><stop offset="0.305" stop-color="#ff4f00"/><stop offset="0.398" stop-color="#ff9800"/><stop offset="0.461" stop-color="#ffff00"/><stop offset="0.616" stop-color="#00ff00"/><stop offset="0.636" stop-color="#00ff20"/><stop offset="0.839" stop-color="#00fffe"/><stop offset="0.840" stop-color="#00ffff"/><stop offset="0.915" stop-color="#00cbff"/><stop offset="0.947" stop-color="#0000ff"/><stop offset="0.958" stop-color="#2000ff"/><stop offset="0.983" stop-color="#6d00ff"/><stop offset="1.000" stop-color="#8000ff"/></linearGradient><linearGradient id="b42" x1="0" y1="0" x2="0" y2="1"><stop offset="0.000" stop-color="#f9ff00"/><stop offset="0.006" stop-color="#ffff00"/><stop offset="0.169" stop-color="#ff6600"/><stop offset="0.305" stop-color="#ff6200"/><stop offset="0.407" stop-color="#ffa900"/><stop offset="0.461" stop-color="#ffff00"/><stop offset="0.621" stop-color="#00ff00"/><stop offset="0.644" stop-color="#00ff24"/><stop offset="0.839" stop-color="#00fffb"/><stop offset="0.845" stop-color="#00ffff"/><stop offset="0.915" stop-color="#00ceff"/><stop offset="0.949" stop-color="#0000ff"/><stop offset="0.949" stop-color="#0100ff"/><stop offset="0.983" stop-color="#6d00ff"/><stop offset="1.000" stop-color="#8000ff"/></linearGradient><linearGradient id="b43" x1="0" y1="0" x2="0" y2="1"><stop offset="0.000" stop-color="#f0ff00"/><stop offset="0.021" stop-color="#ffff00"/><stop offset="0.178" stop-color="#ff9100"/><stop offset="0.339" stop-color="#ff9500"/><stop offset="0.451" stop-color="#ffff00"/><stop offset="0.458" stop-color="#f8ff00"/><stop offset="0.618" stop-color="#00ff00"/><stop offset="0.644" stop-color="#00ff29"/><stop offset="0.839" stop-color="#00fffe"/><stop offset="0.841" stop-color="#00ffff"/><stop offset="0.915" stop-color="#00cbff"/><stop offset="0.947" stop-color="#0000ff"/><stop offset="0.958" stop-color="#2000ff"/><stop offset="0.983" stop-color="#6d00ff"/><stop offset="1.000" stop-color="#8000ff"/></linearGradient><linearGradient id="b44" x1="0" y1="0" x2="0" y2="1"><stop offset="0.000" stop-color="#f3ff00"/><stop offset="0.016" stop-color="#ffff00"/><stop offset="0.178" stop-color="#ff8d00"/><stop offset="0.339" stop-color="#ff9100"/><stop offset="0.450" stop-color="#ffff00"/><stop offset="0.458" stop-color="#f7ff00"/><stop offset="0.618" stop-color="#00ff00"/><stop offset="0.644" stop-color="#00ff28"/><stop offset="0.839" stop-color="#00fffc"/><stop offset="0.843" stop-color="#00ffff"/><stop offset="0.915" stop-color="#00cdff"/><stop offset="0.949" stop-color="#0000ff"/><stop offset="0.949" stop-color="#0100ff"/><stop offset="0.983" stop-color="#6d00ff"/><stop offset="1.000" stop-color="#8000ff"/></linearGradient><linearGradient id="b45" x1="0" y1="0" x2="0" y2="1"><stop offset="0.000" stop-color="#fcff00"/><stop offset="0.003" stop-color="#ffff00"/><stop offset="0.169" stop-color="#ff7400"/><stop offset="0.331" stop-color="#ff7500"/><stop offset="0.441" stop-color="#ffe800"/><stop offset="0.456" stop-color="#ffff00"/><stop offset="0.621" stop-color="#00ff00"/><stop offset="0.644" stop-color="#00ff23"/><stop offset="0.839" stop-color="#00fff8"/><stop offset="0.849" stop-color="#00ffff"/><stop offset="0.915" stop-color="#00d0ff"/><stop offset="0.949" stop-color="#0000ff"/><stop offset="0.949" stop-color="#0000ff"/><stop offset="0.983" stop-color="#6d00ff"/><stop offset="1.000" stop-color="#8000ff"/></linearGradient><linearGradient id="b46" x1="0" y1="0" x2="0" y2="1"><stop offset="0.000" stop-color="#e6ff00"/><stop offset="0.040" stop-color="#ffff00"/><stop offset="0.178" stop-color="#ffa800"/><stop offset="0.347" stop-color="#ffb100"/><stop offset="0.424" stop-color="#ffff00"/><stop offset="0.466" stop-color="#d4ff00"/><stop offset="0.610" stop-color="#00ff00"/><stop offset="0.644" stop-color="#00ff33"/><stop offset="0.836" stop-color="#00ffff"/><stop offset="0.839" stop-color="#00fcff"/><stop offset="0.915" stop-color="#00c7ff"/><stop offset="0.947" stop-color="#0000ff"/><stop offset="0.958" stop-color="#2100ff"/><stop offset="0.983" stop-color="#6d00ff"/><stop offset="1.000" stop-color="#8000ff"/></linearGradient><linearGradient id="b47" x1="0" y1="0" x2="0" y2="1"><stop offset="0.000" stop-color="#ebff00"/><stop offset="0.040" stop-color="#ffff00"/><stop offset="0.186" stop-color="#ffb500"/><stop offset="0.356" stop-color="#ffc300"/><stop offset="0.418" stop-color="#ffff00"/><stop offset="0.475" stop-color="#c9ff00"/><stop offset="0.612" stop-color="#00ff00"/><stop offset="0.644" stop-color="#00ff2f"/><stop offset="0.842" stop-color="#00ffff"/><stop offset="0.847" stop-color="#00f9ff"/><stop offset="0.915" stop-color="#00caff"/><stop offset="0.947" stop-color="#0000ff"/><stop offset="0.958" stop-color="#2000ff"/><stop offset="0.983" stop-color="#6d00ff"/><stop offset="1.000" stop-color="#8000ff"/></linearGradient><linearGradient id="b48" x1="0" y1="0" x2="0" y2="1"><stop offset="0.000" stop-color="#e0ff00"/><stop offset="0.037" stop-color="#ffff00"/><stop offset="0.169" stop-color="#ff8f00"/><stop offset="0.339" stop-color="#ff9100"/><stop offset="0.427" stop-color="#ffff00"/><stop offset="0.441" stop-color="#eeff00"/><stop offset="0.602" stop-color="#00ff00"/><stop offset="0.636" stop-color="#00ff32"/><stop offset="0.834" stop-color="#00ffff"/><stop offset="0.847" stop-color="#00f1ff"/><stop offset="0.915" stop-color="#00c3ff"/><stop offset="0.947" stop-color="#0000ff"/><stop offset="0.958" stop-color="#2200ff"/><stop offset="0.983" stop-color="#6d00ff"/><stop offset="1.000" stop-color="#8000ff"/></linearGradient><linearGradient id="b49" x1="0" y1="0" x2="0" y2="1"><stop offset="0.000" stop-color="#fbff00"/><stop offset="0.008" stop-color="#ffff00"/><stop offset="0.186" stop-color="#ffa500"/><stop offset="0.356" stop-color="#ffb500"/><stop offset="0.429" stop-color="#ffff00"/><stop offset="0.475" stop-color="#d0ff00"/><stop offset="0.616" stop-color="#00ff00"/><stop offset="0.636" stop-color="#00ff1c"/><stop offset="0.847" stop-color="#00fffd"/><stop offset="0.850" stop-color="#00ffff"/><stop offset="0.915" stop-color="#00d1ff"/><stop offset="0.949" stop-color="#0000ff"/><stop offset="0.949" stop-color="#0000ff"/><stop offset="0.983" stop-color="#6d00ff"/><stop offset="1.000" stop-color="#8000ff"/></linearGradient><linearGradient id="b50" x1="0" y1="0" x2="0" y2="1"><stop offset="0.000" stop-color="#f8ff00"/><stop offset="0.007" stop-color="#ffff00"/><stop offset="0.161" stop-color="#ff6f00"/><stop offset="0.339" stop-color="#ff7600"/><stop offset="0.437" stop-color="#ffff00"/><stop offset="0.449" stop-color="#eeff00"/><stop offset="0.610" stop-color="#00ff00"/><stop offset="0.636" stop-color="#00ff25"/><stop offset="0.844" stop-color="#00ffff"/><stop offset="0.847" stop-color="#00fbff"/><stop offset="0.915" stop-color="#00ccff"/><stop offset="0.949" stop-color="#0000ff"/><stop offset="0.949" stop-color="#0100ff"/><stop offset="0.983" stop-color="#6d00ff"/><stop offset="1.000" stop-color="#8000ff"/></linearGradient><linearGradient id="b51" x1="0" y1="0" x2="0" y2="1"><stop offset="0.000" stop-color="#f8ff00"/><stop offset="0.013" stop-color="#ffff00"/><stop offset="0.186" stop-color="#ffa400"/><stop offset="0.347" stop-color="#ffb500"/><stop offset="0.420" stop-color="#ffff00"/><stop offset="0.475" stop-color="#c7ff00"/><stop offset="0.612" stop-color="#00ff00"/><stop offset="0.636" stop-color="#00ff22"/><stop offset="0.847" stop-color="#00ffff"/><stop offset="0.847" stop-color="#00feff"/><stop offset="0.915" stop-color="#00cfff"/><stop offset="0.949" stop-color="#0000ff"/><stop offset="0.949" stop-color="#0100ff"/><stop offset="0.983" stop-color="#6d00ff"/><stop offset="1.000" stop-color="#8000ff"/></linearGradient><linearGradient id="b52" x1="0" y1="0" x2="0" y2="1"><stop offset="0.000" stop-color="#fff100"/><stop offset="0.161" stop-color="#ff6400"/><stop offset="0.331" stop-color="#ff6d00"/><stop offset="0.446" stop-color="#ffff00"/><stop offset="0.449" stop-color="#fbff00"/><stop offset="0.619" stop-color="#00ff00"/><stop offset="0.636" stop-color="#00ff19"/><stop offset="0.847" stop-color="#00fffa"/><stop offset="0.855" stop-color="#00ffff"/><stop offset="0.915" stop-color="#00d4ff"/><stop offset="0.949" stop-color="#0002ff"/><stop offset="0.949" stop-color="#0000ff"/><stop offset="0.983" stop-color="#6c00ff"/><stop offset="1.000" stop-color="#8000ff"/></linearGradient><linearGradient id="b53" x1="0" y1="0" x2="0" y2="1"><stop offset="0.000" stop-color="#fff400"/><stop offset="0.153" stop-color="#ff6800"/><stop offset="0.322" stop-color="#ff6f00"/><stop offset="0.424" stop-color="#ffe400"/><stop offset="0.442" stop-color="#ffff00"/><stop offset="0.613" stop-color="#00ff00"/><stop offset="0.627" stop-color="#00ff15"/><stop offset="0.847" stop-color="#00fffc"/><stop offset="0.851" stop-color="#00ffff"/><stop offset="0.915" stop-color="#00d2ff"/><stop offset="0.949" stop-color="#0001ff"/><stop offset="0.949" stop-color="#0000ff"/><stop offset="0.983" stop-color="#6d00ff"/><stop offset="1.000" stop-color="#8000ff"/></linearGradient><linearGradient id="b54" x1="0" y1="0" x2="0" y2="1"><stop offset="0.000" stop-color="#fff500"/><stop offset="0.136" stop-color="#ff3700"/><stop offset="0.314" stop-color="#ff3300"/><stop offset="0.373" stop-color="#ff7a00"/><stop offset="0.442" stop-color="#ffff00"/><stop offset="0.492" stop-color="#a1ff00"/><stop offset="0.607" stop-color="#00ff00"/><stop offset="0.636" stop-color="#00ff28"/><stop offset="0.843" stop-color="#00ffff"/><stop offset="0.847" stop-color="#00fbff"/><stop offset="0.915" stop-color="#00ccff"/><stop offset="0.948" stop-color="#0000ff"/><stop offset="0.958" stop-color="#2000ff"/><stop offset="0.983" stop-color="#6d00ff"/><stop offset="1.000" stop-color="#8000ff"/></linearGradient><linearGradient id="b55" x1="0" y1="0" x2="0" y2="1"><stop offset="0.000" stop-color="#fffa00"/><stop offset="0.161" stop-color="#ff8500"/><stop offset="0.322" stop-color="#ff9000"/><stop offset="0.424" stop-color="#ffff00"/><stop offset="0.466" stop-color="#d1ff00"/><stop offset="0.612" stop-color="#00ff00"/><stop offset="0.636" stop-color="#00ff21"/><stop offset="0.847" stop-color="#00fffe"/><stop offset="0.849" stop-color="#00ffff"/><stop offset="0.915" stop-color="#00d0ff"/><stop offset="0.949" stop-color="#0000ff"/><stop offset="0.949" stop-color="#0000ff"/><stop offset="0.983" stop-color="#6d00ff"/><stop offset="1.000" stop-color="#8000ff"/></linearGradient><linearGradient id="b56" x1="0" y1="0" x2="0" y2="1"><stop offset="0.000" stop-color="#e8ff00"/><stop offset="0.034" stop-color="#ffff00"/><stop offset="0.161" stop-color="#ffac00"/><stop offset="0.314" stop-color="#ffb200"/><stop offset="0.391" stop-color="#ffff00"/><stop offset="0.466" stop-color="#b5ff00"/><stop offset="0.597" stop-color="#00ff00"/><stop offset="0.636" stop-color="#00ff35"/><stop offset="0.835" stop-color="#00ffff"/><stop offset="0.847" stop-color="#00f2ff"/><stop offset="0.915" stop-color="#00c4ff"/><stop offset="0.947" stop-color="#0000ff"/><stop offset="0.958" stop-color="#2200ff"/><stop offset="0.983" stop-color="#6d00ff"/><stop offset="1.000" stop-color="#8000ff"/></linearGradient><linearGradient id="b57" x1="0" y1="0" x2="0" y2="1"><stop offset="0.000" stop-color="#fff700"/><stop offset="0.144" stop-color="#ff7500"/><stop offset="0.314" stop-color="#ff7b00"/><stop offset="0.427" stop-color="#ffff00"/><stop offset="0.441" stop-color="#efff00"/><stop offset="0.607" stop-color="#00ff00"/><stop offset="0.627" stop-color="#00ff1d"/><stop offset="0.846" stop-color="#00ffff"/><stop offset="0.847" stop-color="#00feff"/><stop offset="0.915" stop-color="#00ceff"/><stop offset="0.949" stop-color="#0000ff"/><stop offset="0.949" stop-color="#0100ff"/><stop offset="0.983" stop-color="#6d00ff"/><stop offset="1.000" stop-color="#8000ff"/></linearGradient><linearGradient id="b58" x1="0" y1="0" x2="0" y2="1"><stop offset="0.000" stop-color="#fffd00"/><stop offset="0.144" stop-color="#ff8600"/><stop offset="0.314" stop-color="#ff8e00"/><stop offset="0.410" stop-color="#ffff00"/><stop offset="0.483" stop-color="#aaff00"/><stop offset="0.606" stop-color="#00ff00"/><stop offset="0.636" stop-color="#00ff28"/><stop offset="0.844" stop-color="#00ffff"/><stop offset="0.847" stop-color="#00fcff"/><stop offset="0.915" stop-color="#00cdff"/><stop offset="0.949" stop-color="#0000ff"/><stop offset="0.949" stop-color="#0100ff"/><stop offset="0.983" stop-color="#6d00ff"/><stop offset="1.000" stop-color="#8000ff"/></linearGradient><linearGradient id="b59" x1="0" y1="0" x2="0" y2="1"><stop offset="0.000" stop-color="#f2ff00"/><stop offset="0.014" stop-color="#ffff00"/><stop offset="0.144" stop-color="#ff8700"/><stop offset="0.314" stop-color="#ff9000"/><stop offset="0.404" stop-color="#ffff00"/><stop offset="0.449" stop-color="#c7ff00"/><stop offset="0.593" stop-color="#00ff00"/><stop offset="0.627" stop-color="#00ff30"/><stop offset="0.834" stop-color="#00ffff"/><stop offset="0.847" stop-color="#00f1ff"/><stop offset="0.915" stop-color="#00c3ff"/><stop offset="0.947" stop-color="#0000ff"/><stop offset="0.958" stop-color="#2200ff"/><stop offset="0.983" stop-color="#6d00ff"/><stop offset="1.000" stop-color="#8000ff"/></linearGradient><linearGradient id="c0" x1="0" y1="0" x2="0" y2="1"><stop offset="0.000" stop-color="#00a6ff"/><stop offset="0.060" stop-color="#00ffff"/><stop offset="0.085" stop-color="#00ffdb"/><stop offset="0.178" stop-color="#00ff33"/><stop offset="0.204" stop-color="#00ff00"/><stop offset="0.254" stop-color="#60ff00"/><stop offset="0.331" stop-color="#f2ff00"/><stop offset="0.340" stop-color="#ffff00"/><stop offset="0.432" stop-color="#ff8000"/><stop offset="0.534" stop-color="#ff8c00"/><stop offset="0.611" stop-color="#ffff00"/><stop offset="0.678" stop-color="#9bff00"/><stop offset="0.729" stop-color="#3aff00"/><stop offset="0.811" stop-color="#00ff00"/><stop offset="0.847" stop-color="#00ff1a"/><stop offset="0.920" stop-color="#00ffff"/><stop offset="0.924" stop-color="#00f2ff"/><stop offset="0.949" stop-color="#0080ff"/><stop offset="0.956" stop-color="#0000ff"/><stop offset="0.966" stop-color="#6000ff"/><stop offset="1.000" stop-color="#8000ff"/></linearGradient>
</defs>
<g shape-rendering="crispEdges">
<rect x="210.00" y="70" width="1.80" height="150" fill="url(#a0)"/><rect x="211.50" y="70" width="1.80" height="150" fill="url(#a1)"/><rect x="213.00" y="70" width="1.80" height="150" fill="url(#a2)"/><rect x="214.50" y="70" width="1.80" height="150" fill="url(#a3)"/><rect x="216.00" y="70" width="1.80" height="150" fill="url(#a4)"/><rect x="217.50" y="70" width="1.80" height="150" fill="url(#a5)"/><rect x="219.00" y="70" width="1.80" height="150" fill="url(#a6)"/><rect x="220.50" y="70" width="1.80" height="150" fill="url(#a7)"/><rect x="222.00" y="70" width="1.80" height="150" fill="url(#a8)"/><rect x="223.50" y="70" width="1.80" height="150" fill="url(#a9)"/><rect x="225.00" y="70" width="1.80" height="150" fill="url(#a10)"/><rect x="226.50" y="70" width="1.80" height="150" fill="url(#a11)"/><rect x="228.00" y="70" width="1.80" height="150" fill="url(#a12)"/><rect x="229.50" y="70" width="1.80" height="150" fill="url(#a13)"/><rect x="231.00" y="70" width="1.80" height="150" fill="url(#a14)"/><rect x="232.50" y="70" width="1.80" height="150" fill="url(#a15)"/><rect x="234.00" y="70" width="1.80" height="150" fill="url(#a16)"/><rect x="235.50" y="70" width="1.80" height="150" fill="url(#a17)"/><rect x="237.00" y="70" width="1.80" height="150" fill="url(#a18)"/><rect x="238.50" y="70" width="1.80" height="150" fill="url(#a19)"/><rect x="240.00" y="70" width="1.80" height="150" fill="url(#a20)"/><rect x="241.50" y="70" width="1.80" height="150" fill="url(#a21)"/><rect x="243.00" y="70" width="1.80" height="150" fill="url(#a22)"/><rect x="244.50" y="70" width="1.80" height="150" fill="url(#a23)"/><rect x="246.00" y="70" width="1.80" height="150" fill="url(#a24)"/><rect x="247.50" y="70" width="1.80" height="150" fill="url(#a25)"/><rect x="249.00" y="70" width="1.80" height="150" fill="url(#a26)"/><rect x="250.50" y="70" width="1.80" height="150" fill="url(#a27)"/><rect x="252.00" y="70" width="1.80" height="150" fill="url(#a28)"/><rect x="253.50" y="70" width="1.80" height="150" fill="url(#a29)"/><rect x="255.00" y="70" width="1.80" height="150" fill="url(#a30)"/><rect x="256.50" y="70" width="1.80" height="150" fill="url(#a31)"/><rect x="258.00" y="70" width="1.80" height="150" fill="url(#a32)"/><rect x="259.50" y="70" width="1.80" height="150" fill="url(#a33)"/><rect x="261.00" y="70" width="1.80" height="150" fill="url(#a34)"/><rect x="262.50" y="70" width="1.80" height="150" fill="url(#a35)"/><rect x="264.00" y="70" width="1.80" height="150" fill="url(#a36)"/><rect x="265.50" y="70" width="1.80" height="150" fill="url(#a37)"/><rect x="267.00" y="70" width="1.80" height="150" fill="url(#a38)"/><rect x="268.50" y="70" width="1.80" height="150" fill="url(#a39)"/><rect x="270.00" y="70" width="1.80" height="150" fill="url(#a40)"/><rect x="271.50" y="70" width="1.80" height="150" fill="url(#a41)"/><rect x="273.00" y="70" width="1.80" height="150" fill="url(#a42)"/><rect x="274.50" y="70" width="1.80" height="150" fill="url(#a43)"/><rect x="276.00" y="70" width="1.80" height="150" fill="url(#a44)"/><rect x="277.50" y="70" width="1.80" height="150" fill="url(#a45)"/><rect x="279.00" y="70" width="1.80" height="150" fill="url(#a46)"/><rect x="280.50" y="70" width="1.80" height="150" fill="url(#a47)"/><rect x="282.00" y="70" width="1.80" height="150" fill="url(#a48)"/><rect x="283.50" y="70" width="1.80" height="150" fill="url(#a49)"/><rect x="285.00" y="70" width="1.80" height="150" fill="url(#a50)"/><rect x="286.50" y="70" width="1.80" height="150" fill="url(#a51)"/><rect x="288.00" y="70" width="1.80" height="150" fill="url(#a52)"/><rect x="289.50" y="70" width="1.80" height="150" fill="url(#a53)"/><rect x="291.00" y="70" width="1.80" height="150" fill="url(#a54)"/><rect x="292.50" y="70" width="1.80" height="150" fill="url(#a55)"/><rect x="294.00" y="70" width="1.80" height="150" fill="url(#a56)"/><rect x="295.50" y="70" width="1.80" height="150" fill="url(#a57)"/><rect x="297.00" y="70" width="1.80" height="150" fill="url(#a58)"/><rect x="298.50" y="70" width="1.80" height="150" fill="url(#a59)"/><rect x="300.00" y="70" width="1.80" height="150" fill="url(#a60)"/><rect x="301.50" y="70" width="1.80" height="150" fill="url(#a61)"/><rect x="303.00" y="70" width="1.80" height="150" fill="url(#a62)"/><rect x="304.50" y="70" width="1.80" height="150" fill="url(#a63)"/><rect x="306.00" y="70" width="1.80" height="150" fill="url(#a64)"/><rect x="307.50" y="70" width="1.80" height="150" fill="url(#a65)"/><rect x="309.00" y="70" width="1.80" height="150" fill="url(#a66)"/><rect x="310.50" y="70" width="1.80" height="150" fill="url(#a67)"/><rect x="312.00" y="70" width="1.80" height="150" fill="url(#a68)"/><rect x="313.50" y="70" width="1.80" height="150" fill="url(#a69)"/><rect x="315.00" y="70" width="1.80" height="150" fill="url(#a70)"/><rect x="316.50" y="70" width="1.80" height="150" fill="url(#a71)"/><rect x="318.00" y="70" width="1.80" height="150" fill="url(#a72)"/><rect x="319.50" y="70" width="1.80" height="150" fill="url(#a73)"/><rect x="321.00" y="70" width="1.80" height="150" fill="url(#a74)"/><rect x="322.50" y="70" width="1.80" height="150" fill="url(#a75)"/><rect x="324.00" y="70" width="1.80" height="150" fill="url(#a76)"/><rect x="325.50" y="70" width="1.80" height="150" fill="url(#a77)"/><rect x="327.00" y="70" width="1.80" height="150" fill="url(#a78)"/><rect x="328.50" y="70" width="1.80" height="150" fill="url(#a79)"/><rect x="330.00" y="70" width="1.80" height="150" fill="url(#a80)"/><rect x="331.50" y="70" width="1.80" height="150" fill="url(#a81)"/><rect x="333.00" y="70" width="1.80" height="150" fill="url(#a82)"/><rect x="334.50" y="70" width="1.80" height="150" fill="url(#a83)"/><rect x="336.00" y="70" width="1.80" height="150" fill="url(#a84)"/><rect x="337.50" y="70" width="1.80" height="150" fill="url(#a85)"/><rect x="339.00" y="70" width="1.80" height="150" fill="url(#a86)"/><rect x="340.50" y="70" width="1.80" height="150" fill="url(#a87)"/><rect x="342.00" y="70" width="1.80" height="150" fill="url(#a88)"/><rect x="343.50" y="70" width="1.80" height="150" fill="url(#a89)"/><rect x="345.00" y="70" width="1.80" height="150" fill="url(#a90)"/><rect x="346.50" y="70" width="1.80" height="150" fill="url(#a91)"/><rect x="348.00" y="70" width="1.80" height="150" fill="url(#a92)"/><rect x="349.50" y="70" width="1.80" height="150" fill="url(#a93)"/><rect x="351.00" y="70" width="1.80" height="150" fill="url(#a94)"/><rect x="352.50" y="70" width="1.80" height="150" fill="url(#a95)"/><rect x="354.00" y="70" width="1.80" height="150" fill="url(#a96)"/><rect x="355.50" y="70" width="1.80" height="150" fill="url(#a97)"/><rect x="357.00" y="70" width="1.80" height="150" fill="url(#a98)"/><rect x="358.50" y="70" width="1.80" height="150" fill="url(#a99)"/><rect x="360.00" y="70" width="1.80" height="150" fill="url(#a100)"/><rect x="361.50" y="70" width="1.80" height="150" fill="url(#a101)"/><rect x="363.00" y="70" width="1.80" height="150" fill="url(#a102)"/><rect x="364.50" y="70" width="1.80" height="150" fill="url(#a103)"/><rect x="366.00" y="70" width="1.80" height="150" fill="url(#a104)"/><rect x="367.50" y="70" width="1.80" height="150" fill="url(#a105)"/><rect x="369.00" y="70" width="1.80" height="150" fill="url(#a106)"/><rect x="370.50" y="70" width="1.80" height="150" fill="url(#a107)"/><rect x="372.00" y="70" width="1.80" height="150" fill="url(#a108)"/><rect x="373.50" y="70" width="1.80" height="150" fill="url(#a109)"/><rect x="375.00" y="70" width="1.80" height="150" fill="url(#a110)"/><rect x="376.50" y="70" width="1.80" height="150" fill="url(#a111)"/><rect x="378.00" y="70" width="1.80" height="150" fill="url(#a112)"/><rect x="379.50" y="70" width="1.80" height="150" fill="url(#a113)"/><rect x="381.00" y="70" width="1.80" height="150" fill="url(#a114)"/><rect x="382.50" y="70" width="1.80" height="150" fill="url(#a115)"/><rect x="384.00" y="70" width="1.80" height="150" fill="url(#a116)"/><rect x="385.50" y="70" width="1.80" height="150" fill="url(#a117)"/><rect x="387.00" y="70" width="1.80" height="150" fill="url(#a118)"/><rect x="388.50" y="70" width="1.80" height="150" fill="url(#a119)"/><rect x="390.00" y="70" width="1.80" height="150" fill="url(#a120)"/><rect x="391.50" y="70" width="1.80" height="150" fill="url(#a121)"/><rect x="393.00" y="70" width="1.80" height="150" fill="url(#a122)"/><rect x="394.50" y="70" width="1.80" height="150" fill="url(#a123)"/><rect x="396.00" y="70" width="1.80" height="150" fill="url(#a124)"/><rect x="397.50" y="70" width="1.80" height="150" fill="url(#a125)"/><rect x="399.00" y="70" width="1.80" height="150" fill="url(#a126)"/><rect x="400.50" y="70" width="1.80" height="150" fill="url(#a127)"/><rect x="402.00" y="70" width="1.80" height="150" fill="url(#a128)"/><rect x="403.50" y="70" width="1.80" height="150" fill="url(#a129)"/><rect x="405.00" y="70" width="1.80" height="150" fill="url(#a130)"/><rect x="406.50" y="70" width="1.80" height="150" fill="url(#a131)"/><rect x="408.00" y="70" width="1.80" height="150" fill="url(#a132)"/><rect x="409.50" y="70" width="1.80" height="150" fill="url(#a133)"/><rect x="411.00" y="70" width="1.80" height="150" fill="url(#a134)"/><rect x="412.50" y="70" width="1.80" height="150" fill="url(#a135)"/><rect x="414.00" y="70" width="1.80" height="150" fill="url(#a136)"/><rect x="415.50" y="70" width="1.80" height="150" fill="url(#a137)"/><rect x="417.00" y="70" width="1.80" height="150" fill="url(#a138)"/><rect x="418.50" y="70" width="1.80" height="150" fill="url(#a139)"/><rect x="420.00" y="70" width="1.80" height="150" fill="url(#a140)"/><rect x="421.50" y="70" width="1.80" height="150" fill="url(#a141)"/><rect x="423.00" y="70" width="1.80" height="150" fill="url(#a142)"/><rect x="739.00" y="70" width="1.80" height="118" fill="url(#b0)"/><rect x="740.50" y="70" width="1.80" height="118" fill="url(#b1)"/><rect x="742.00" y="70" width="1.80" height="118" fill="url(#b2)"/><rect x="743.50" y="70" width="1.80" height="118" fill="url(#b3)"/><rect x="745.00" y="70" width="1.80" height="118" fill="url(#b4)"/><rect x="746.50" y="70" width="1.80" height="118" fill="url(#b5)"/><rect x="748.00" y="70" width="1.80" height="118" fill="url(#b6)"/><rect x="749.50" y="70" width="1.80" height="118" fill="url(#b7)"/><rect x="751.00" y="70" width="1.80" height="118" fill="url(#b8)"/><rect x="752.50" y="70" width="1.80" height="118" fill="url(#b9)"/><rect x="754.00" y="70" width="1.80" height="118" fill="url(#b10)"/><rect x="755.50" y="70" width="1.80" height="118" fill="url(#b11)"/><rect x="757.00" y="70" width="1.80" height="118" fill="url(#b12)"/><rect x="758.50" y="70" width="1.80" height="118" fill="url(#b13)"/><rect x="760.00" y="70" width="1.80" height="118" fill="url(#b14)"/><rect x="761.50" y="70" width="1.80" height="118" fill="url(#b15)"/><rect x="763.00" y="70" width="1.80" height="118" fill="url(#b16)"/><rect x="764.50" y="70" width="1.80" height="118" fill="url(#b17)"/><rect x="766.00" y="70" width="1.80" height="118" fill="url(#b18)"/><rect x="767.50" y="70" width="1.80" height="118" fill="url(#b19)"/><rect x="769.00" y="70" width="1.80" height="118" fill="url(#b20)"/><rect x="770.50" y="70" width="1.80" height="118" fill="url(#b21)"/><rect x="772.00" y="70" width="1.80" height="118" fill="url(#b22)"/><rect x="773.50" y="70" width="1.80" height="118" fill="url(#b23)"/><rect x="775.00" y="70" width="1.80" height="118" fill="url(#b24)"/><rect x="776.50" y="70" width="1.80" height="118" fill="url(#b25)"/><rect x="778.00" y="70" width="1.80" height="118" fill="url(#b26)"/><rect x="779.50" y="70" width="1.80" height="118" fill="url(#b27)"/><rect x="781.00" y="70" width="1.80" height="118" fill="url(#b28)"/><rect x="782.50" y="70" width="1.80" height="118" fill="url(#b29)"/><rect x="784.00" y="70" width="1.80" height="118" fill="url(#b30)"/><rect x="785.50" y="70" width="1.80" height="118" fill="url(#b31)"/><rect x="787.00" y="70" width="1.80" height="118" fill="url(#b32)"/><rect x="788.50" y="70" width="1.80" height="118" fill="url(#b33)"/><rect x="790.00" y="70" width="1.80" height="118" fill="url(#b34)"/><rect x="791.50" y="70" width="1.80" height="118" fill="url(#b35)"/><rect x="793.00" y="70" width="1.80" height="118" fill="url(#b36)"/><rect x="794.50" y="70" width="1.80" height="118" fill="url(#b37)"/><rect x="796.00" y="70" width="1.80" height="118" fill="url(#b38)"/><rect x="797.50" y="70" width="1.80" height="118" fill="url(#b39)"/><rect x="799.00" y="70" width="1.80" height="118" fill="url(#b40)"/><rect x="800.50" y="70" width="1.80" height="118" fill="url(#b41)"/><rect x="802.00" y="70" width="1.80" height="118" fill="url(#b42)"/><rect x="803.50" y="70" width="1.80" height="118" fill="url(#b43)"/><rect x="805.00" y="70" width="1.80" height="118" fill="url(#b44)"/><rect x="806.50" y="70" width="1.80" height="118" fill="url(#b45)"/><rect x="808.00" y="70" width="1.80" height="118" fill="url(#b46)"/><rect x="809.50" y="70" width="1.80" height="118" fill="url(#b47)"/><rect x="811.00" y="70" width="1.80" height="118" fill="url(#b48)"/><rect x="812.50" y="70" width="1.80" height="118" fill="url(#b49)"/><rect x="814.00" y="70" width="1.80" height="118" fill="url(#b50)"/><rect x="815.50" y="70" width="1.80" height="118" fill="url(#b51)"/><rect x="817.00" y="70" width="1.80" height="118" fill="url(#b52)"/><rect x="818.50" y="70" width="1.80" height="118" fill="url(#b53)"/><rect x="820.00" y="70" width="1.80" height="118" fill="url(#b54)"/><rect x="821.50" y="70" width="1.80" height="118" fill="url(#b55)"/><rect x="823.00" y="70" width="1.80" height="118" fill="url(#b56)"/><rect x="824.50" y="70" width="1.80" height="118" fill="url(#b57)"/><rect x="826.00" y="70" width="1.80" height="118" fill="url(#b58)"/><rect x="827.50" y="70" width="1.80" height="118" fill="url(#b59)"/><rect x="730.00" y="70" width="3.00" height="118" fill="url(#c0)"/>
</g>
<path shape-rendering="crispEdges" fill="#000" d="M247.5 207h1.5v2h-1.5zM265.5 207h1.5v2h-1.5zM286.5 207h1.5v2h-1.5zM331.5 207h1.5v2h-1.5zM342.0 207h3.0v2h-3.0zM354.0 207h3.0v2h-3.0zM381.0 207h1.5v2h-1.5zM390.0 207h1.5v2h-1.5zM400.5 207h3.0v2h-3.0zM408.0 207h1.5v2h-1.5zM409.5 207h1.5v2h-1.5zM412.5 207h3.0v2h-3.0zM415.5 207h1.5v2h-1.5zM210.0 209h3.0v3h-3.0zM216.0 209h3.0v3h-3.0zM219.0 209h1.5v3h-1.5zM223.5 209h1.5v3h-1.5zM226.5 209h1.5v3h-1.5zM234.0 209h1.5v3h-1.5zM243.0 209h3.0v3h-3.0zM246.0 209h1.5v3h-1.5zM264.0 209h1.5v3h-1.5zM267.0 209h1.5v3h-1.5zM271.5 209h3.0v3h-3.0zM283.5 209h1.5v3h-1.5zM294.0 209h3.0v3h-3.0zM300.0 209h1.5v3h-1.5zM307.5 209h1.5v3h-1.5zM309.0 209h1.5v3h-1.5zM310.5 209h3.0v3h-3.0zM313.5 209h3.0v3h-3.0zM322.5 209h1.5v3h-1.5zM328.5 209h1.5v3h-1.5zM346.5 209h1.5v3h-1.5zM348.0 209h3.0v3h-3.0zM355.5 209h1.5v3h-1.5zM378.0 209h3.0v3h-3.0zM396.0 209h1.5v3h-1.5zM421.5 209h3.0v3h-3.0zM210.0 212h1.5v4h-1.5zM214.5 212h1.5v4h-1.5zM216.0 212h3.0v4h-3.0zM223.5 212h1.5v4h-1.5zM226.5 212h1.5v4h-1.5zM235.5 212h1.5v4h-1.5zM237.0 212h1.5v4h-1.5zM238.5 212h1.5v4h-1.5zM243.0 212h1.5v4h-1.5zM250.5 212h1.5v4h-1.5zM261.0 212h3.0v4h-3.0zM264.0 212h1.5v4h-1.5zM265.5 212h1.5v4h-1.5zM267.0 212h3.0v4h-3.0zM270.0 212h1.5v4h-1.5zM271.5 212h3.0v4h-3.0zM274.5 212h3.0v4h-3.0zM279.0 212h1.5v4h-1.5zM280.5 212h1.5v4h-1.5zM286.5 212h3.0v4h-3.0zM289.5 212h1.5v4h-1.5zM301.5 212h1.5v4h-1.5zM304.5 212h3.0v4h-3.0zM307.5 212h3.0v4h-3.0zM310.5 212h3.0v4h-3.0zM316.5 212h1.5v4h-1.5zM318.0 212h1.5v4h-1.5zM321.0 212h1.5v4h-1.5zM322.5 212h3.0v4h-3.0zM328.5 212h1.5v4h-1.5zM333.0 212h1.5v4h-1.5zM334.5 212h1.5v4h-1.5zM336.0 212h1.5v4h-1.5zM337.5 212h1.5v4h-1.5zM339.0 212h1.5v4h-1.5zM340.5 212h1.5v4h-1.5zM345.0 212h1.5v4h-1.5zM348.0 212h1.5v4h-1.5zM349.5 212h1.5v4h-1.5zM351.0 212h1.5v4h-1.5zM360.0 212h1.5v4h-1.5zM361.5 212h3.0v4h-3.0zM367.5 212h3.0v4h-3.0zM370.5 212h3.0v4h-3.0zM373.5 212h1.5v4h-1.5zM375.0 212h1.5v4h-1.5zM376.5 212h3.0v4h-3.0zM379.5 212h1.5v4h-1.5zM382.5 212h1.5v4h-1.5zM384.0 212h3.0v4h-3.0zM387.0 212h3.0v4h-3.0zM396.0 212h1.5v4h-1.5zM397.5 212h1.5v4h-1.5zM400.5 212h3.0v4h-3.0zM405.0 212h1.5v4h-1.5zM411.0 212h1.5v4h-1.5zM417.0 212h3.0v4h-3.0zM210.0 216h1.5v4h-1.5zM211.5 216h3.0v4h-3.0zM214.5 216h3.0v4h-3.0zM217.5 216h1.5v4h-1.5zM219.0 216h1.5v4h-1.5zM220.5 216h3.0v4h-3.0zM223.5 216h1.5v4h-1.5zM226.5 216h1.5v4h-1.5zM228.0 216h1.5v4h-1.5zM229.5 216h1.5v4h-1.5zM231.0 216h1.5v4h-1.5zM232.5 216h1.5v4h-1.5zM234.0 216h3.0v4h-3.0zM244.5 216h1.5v4h-1.5zM246.0 216h1.5v4h-1.5zM247.5 216h1.5v4h-1.5zM249.0 216h1.5v4h-1.5zM250.5 216h1.5v4h-1.5zM252.0 216h3.0v4h-3.0zM258.0 216h3.0v4h-3.0zM261.0 216h3.0v4h-3.0zM264.0 216h1.5v4h-1.5zM265.5 216h3.0v4h-3.0zM268.5 216h3.0v4h-3.0zM271.5 216h3.0v4h-3.0zM274.5 216h1.5v4h-1.5zM276.0 216h1.5v4h-1.5zM277.5 216h1.5v4h-1.5zM279.0 216h3.0v4h-3.0zM282.0 216h1.5v4h-1.5zM288.0 216h1.5v4h-1.5zM289.5 216h1.5v4h-1.5zM291.0 216h1.5v4h-1.5zM292.5 216h1.5v4h-1.5zM297.0 216h1.5v4h-1.5zM301.5 216h1.5v4h-1.5zM303.0 216h3.0v4h-3.0zM306.0 216h1.5v4h-1.5zM307.5 216h3.0v4h-3.0zM310.5 216h3.0v4h-3.0zM313.5 216h1.5v4h-1.5zM315.0 216h1.5v4h-1.5zM316.5 216h1.5v4h-1.5zM318.0 216h3.0v4h-3.0zM321.0 216h3.0v4h-3.0zM324.0 216h1.5v4h-1.5zM325.5 216h3.0v4h-3.0zM328.5 216h1.5v4h-1.5zM330.0 216h3.0v4h-3.0zM333.0 216h1.5v4h-1.5zM337.5 216h1.5v4h-1.5zM340.5 216h3.0v4h-3.0zM345.0 216h3.0v4h-3.0zM348.0 216h1.5v4h-1.5zM349.5 216h1.5v4h-1.5zM351.0 216h1.5v4h-1.5zM355.5 216h1.5v4h-1.5zM357.0 216h1.5v4h-1.5zM358.5 216h1.5v4h-1.5zM360.0 216h1.5v4h-1.5zM361.5 216h1.5v4h-1.5zM363.0 216h3.0v4h-3.0zM366.0 216h3.0v4h-3.0zM369.0 216h1.5v4h-1.5zM375.0 216h3.0v4h-3.0zM378.0 216h1.5v4h-1.5zM381.0 216h1.5v4h-1.5zM382.5 216h1.5v4h-1.5zM384.0 216h3.0v4h-3.0zM387.0 216h1.5v4h-1.5zM390.0 216h3.0v4h-3.0zM393.0 216h1.5v4h-1.5zM396.0 216h1.5v4h-1.5zM397.5 216h1.5v4h-1.5zM399.0 216h1.5v4h-1.5zM400.5 216h1.5v4h-1.5zM402.0 216h1.5v4h-1.5zM403.5 216h1.5v4h-1.5zM406.5 216h1.5v4h-1.5zM408.0 216h1.5v4h-1.5zM411.0 216h1.5v4h-1.5zM412.5 216h1.5v4h-1.5zM414.0 216h3.0v4h-3.0zM417.0 216h1.5v4h-1.5zM418.5 216h1.5v4h-1.5zM423.0 216h1.5v4h-1.5zM424.5 216h0.5v4h-0.5z"/>
<path shape-rendering="crispEdges" fill="#6a00ff" d="M731 188h2v4h-2zM741 188h2v3h-2zM745 190h2v3h-2zM749 188h2v2h-2zM753 191h2v3h-2zM760 189h2v2h-2zM766 192h2v3h-2zM771 188h2v2h-2zM779 190h2v3h-2zM786 188h2v2h-2zM792 189h2v3h-2zM800 190h2v2h-2zM806 188h2v3h-2zM812 190h2v2h-2zM818 188h2v3h-2zM824 189h2v2h-2zM730 193h2v3h-2zM739 198h2v3h-2zM784 193h2v3h-2zM795 197h2v3h-2zM797 201h2v3h-2zM820 193h2v3h-2zM826 195h2v4h-2zM739 205h2v3h-2zM741 209h2v3h-2zM744 212h2v3h-2zM750 208h2v2h-2zM767 211h2v3h-2zM772 207h2v2h-2zM796 206h2v3h-2zM815 211h2v3h-2zM825 209h2v3h-2zM827 213h2v4h-2zM741 216h2v3h-2zM752 214h2v3h-2zM757 216h2v3h-2z"/>
<text class="m" transform="translate(176.00 86.00) scale(0.7991 1)" font-size="13.6">10</text>
<text transform="translate(189.00 78.70)" font-size="8.5">2</text>
<text class="m" transform="translate(176.00 155.50) scale(0.7991 1)" font-size="13.6">10</text>
<text transform="translate(189.00 148.20)" font-size="8.5">1</text>
<text class="m" transform="translate(176.00 224.50) scale(0.7991 1)" font-size="13.6">10</text>
<text transform="translate(189.00 217.20)" font-size="8.5">0</text>
<text class="m" transform="translate(117.50 239.30) scale(1.0537 1)" font-size="13.6">GMT(min)</text>
<text class="m" transform="translate(214.50 239.30) scale(1.1248 1)" font-size="13.6" text-anchor="middle">20:30</text>
<text class="m" transform="translate(320.84 239.30) scale(1.0508 1)" font-size="13.6" text-anchor="middle">21:30</text>
<text class="m" transform="translate(374.01 239.30) scale(1.1248 1)" font-size="13.6" text-anchor="middle">22:00</text>
<text class="m" transform="translate(427.18 239.30) scale(1.1248 1)" font-size="13.6" text-anchor="middle">22:30</text>
<text class="m" transform="translate(533.52 239.30) scale(1.1248 1)" font-size="13.6" text-anchor="middle">23:30</text>
<text class="m" transform="translate(586.69 239.30) scale(1.1248 1)" font-size="13.6" text-anchor="middle">00:00</text>
<text class="m" transform="translate(693.03 239.30) scale(1.0508 1)" font-size="13.6" text-anchor="middle">01:00</text>
<text class="m" transform="translate(746.20 239.30) scale(1.0508 1)" font-size="13.6" text-anchor="middle">01:30</text>
<text class="t" transform="translate(414.50 30.60) scale(1.3007 1)" font-size="16">2005/255</text>
<text class="t" transform="translate(510.50 30.60) scale(1.2449 1)" font-size="16">20:28:00.000</text>
<text class="t" transform="translate(264.00 51.70) scale(1.0933 1)" font-size="16">ELSSCIL/MEx</text>
<text class="t" transform="translate(385.50 51.70) scale(1.2555 1)" font-size="16">ELS-07</text>
<text class="t" transform="translate(461.50 51.70) scale(1.1698 1)" font-size="16">LR-Bk</text>
<text class="t" transform="translate(533.50 51.70) scale(1.4036 1)" font-size="16">(ergs/(cm**2-sr-sec-eV))</text>
<text class="t" transform="translate(69.70 205.30) rotate(-90) scale(1.1262 1)" font-size="16">Electron</text>
<text class="t" transform="translate(69.70 132.80) rotate(-90) scale(1.1599 1)" font-size="16">Energy</text>
<text class="t" transform="translate(89.60 140.50) rotate(-90) scale(1.0918 1)" font-size="16" text-anchor="middle">(eV)</text>
<rect x="850.5" y="77.5" width="32" height="127" fill="url(#cb)" stroke="#fff" stroke-width="1"/>
<text class="t" transform="translate(852.00 60.00) scale(0.9375 1)" font-size="16">DEF</text>
<text class="t" transform="translate(894.50 82.50) scale(0.9271 1)" font-size="16">10</text>
<text transform="translate(912.50 73.70) scale(1.6869 1)" font-size="10">-3</text>
<text class="t" transform="translate(894.50 124.80) scale(0.9271 1)" font-size="16">10</text>
<text transform="translate(912.50 116.00) scale(1.6869 1)" font-size="10">-4</text>
<text class="t" transform="translate(894.50 167.10) scale(0.9271 1)" font-size="16">10</text>
<text transform="translate(912.50 158.30) scale(1.6869 1)" font-size="10">-5</text>
<text class="t" transform="translate(894.50 209.40) scale(0.9271 1)" font-size="16">10</text>
<text transform="translate(912.50 200.60) scale(1.6869 1)" font-size="10">-6</text>
<g shape-rendering="crispEdges">
<rect x="221" y="255" width="204" height="18" fill="#ffa500"/>
<rect x="221" y="273" width="204" height="17" fill="#ff0a00"/>
<rect x="221" y="290" width="204" height="18" fill="#ffa500"/>
<rect x="221" y="308" width="204" height="18" fill="#beff00"/>
<rect x="221" y="326" width="204" height="17" fill="#14ff00"/>
<rect x="221" y="343" width="204" height="18" fill="#00ff82"/>
<rect x="221" y="361" width="204" height="17" fill="#00dcff"/>
<rect x="221" y="378" width="204" height="18" fill="#0050ff"/>
<rect x="221" y="396" width="204" height="18" fill="#3200ff"/>
<rect x="221" y="431" width="204" height="18" fill="#2800ff"/>
</g><defs>
<linearGradient id="r0" gradientUnits="userSpaceOnUse" x1="776" y1="0" x2="808" y2="0"><stop offset="0" stop-color="#ffd200"/><stop offset="1" stop-color="#ff7800"/></linearGradient>
<linearGradient id="r1" gradientUnits="userSpaceOnUse" x1="776" y1="0" x2="808" y2="0"><stop offset="0" stop-color="#8cff00"/><stop offset="1" stop-color="#f0ff00"/></linearGradient>
<linearGradient id="r2" gradientUnits="userSpaceOnUse" x1="776" y1="0" x2="808" y2="0"><stop offset="0" stop-color="#00f014"/><stop offset="1" stop-color="#50ff00"/></linearGradient>
<linearGradient id="r3" gradientUnits="userSpaceOnUse" x1="776" y1="0" x2="808" y2="0"><stop offset="0" stop-color="#00ffaa"/><stop offset="1" stop-color="#00f050"/></linearGradient>
<linearGradient id="r4" gradientUnits="userSpaceOnUse" x1="776" y1="0" x2="808" y2="0"><stop offset="0" stop-color="#00aaff"/><stop offset="1" stop-color="#00ffff"/></linearGradient>
<linearGradient id="r5" gradientUnits="userSpaceOnUse" x1="776" y1="0" x2="808" y2="0"><stop offset="0" stop-color="#0028ff"/><stop offset="1" stop-color="#006eff"/></linearGradient>
<linearGradient id="r6" gradientUnits="userSpaceOnUse" x1="776" y1="0" x2="808" y2="0"><stop offset="0" stop-color="#5a00ff"/><stop offset="1" stop-color="#1e00ff"/></linearGradient>
<linearGradient id="r7" gradientUnits="userSpaceOnUse" x1="776" y1="0" x2="808" y2="0"><stop offset="0" stop-color="#8200ff"/><stop offset="1" stop-color="#8200ff"/></linearGradient>
<linearGradient id="r8" gradientUnits="userSpaceOnUse" x1="776" y1="0" x2="808" y2="0"><stop offset="0" stop-color="#140aff"/><stop offset="1" stop-color="#6e00ff"/></linearGradient>
<linearGradient id="r9" gradientUnits="userSpaceOnUse" x1="776" y1="0" x2="808" y2="0"><stop offset="0" stop-color="#006eff"/><stop offset="1" stop-color="#001eff"/></linearGradient>
<linearGradient id="r10" gradientUnits="userSpaceOnUse" x1="776" y1="0" x2="808" y2="0"><stop offset="0" stop-color="#00ffe6"/><stop offset="1" stop-color="#00beff"/></linearGradient>
</defs><g shape-rendering="crispEdges">
<rect x="739" y="255" width="82" height="18" fill="url(#r0)"/>
<rect x="730" y="255" width="2" height="18" fill="#ffd200"/>
<rect x="739" y="273" width="82" height="17" fill="url(#r1)"/>
<rect x="730" y="273" width="2" height="17" fill="#8cff00"/>
<rect x="739" y="290" width="82" height="18" fill="url(#r2)"/>
<rect x="730" y="290" width="2" height="18" fill="#00f014"/>
<rect x="739" y="308" width="82" height="18" fill="url(#r3)"/>
<rect x="730" y="308" width="2" height="18" fill="#00ffaa"/>
<rect x="739" y="326" width="82" height="17" fill="url(#r4)"/>
<rect x="730" y="326" width="2" height="17" fill="#00aaff"/>
<rect x="739" y="343" width="82" height="18" fill="url(#r5)"/>
<rect x="730" y="343" width="2" height="18" fill="#0028ff"/>
<rect x="739" y="361" width="82" height="17" fill="url(#r6)"/>
<rect x="730" y="361" width="2" height="17" fill="#5a00ff"/>
<rect x="739" y="378" width="82" height="18" fill="url(#r7)"/>
<rect x="730" y="378" width="2" height="18" fill="#8200ff"/>
<rect x="739" y="396" width="82" height="18" fill="url(#r8)"/>
<rect x="730" y="396" width="2" height="18" fill="#140aff"/>
<rect x="739" y="414" width="82" height="17" fill="url(#r9)"/>
<rect x="730" y="414" width="2" height="17" fill="#006eff"/>
<rect x="739" y="431" width="82" height="18" fill="url(#r10)"/>
<rect x="730" y="431" width="2" height="18" fill="#00ffe6"/>
<rect x="781" y="379" width="23" height="17" fill="#000"/>
<path d="M232 255h1v194h-1zM247 255h1v194h-1zM263 255h1v194h-1zM279 255h1v194h-1zM294 255h1v194h-1zM310 255h1v194h-1zM325 255h1v194h-1zM341 255h1v194h-1zM357 255h1v194h-1zM372 255h1v194h-1zM388 255h1v194h-1zM403 255h1v194h-1zM419 255h1v194h-1zM745 255h1v194h-1zM760 255h1v194h-1zM776 255h1v194h-1zM791 255h1v194h-1zM807 255h1v194h-1zM211 273h618v1h-618zM211 290h618v1h-618zM211 308h618v1h-618zM211 326h618v1h-618zM211 343h618v1h-618zM211 361h618v1h-618zM211 378h618v1h-618zM211 396h618v1h-618zM211 414h618v1h-618zM211 431h618v1h-618z" fill="#000"/>
</g>
<text class="m" transform="translate(74.40 268.60) scale(1.0039 1)" font-size="13.6">ELS-11</text>
<text class="m" transform="translate(126.30 268.60) scale(1.0829 1)" font-size="13.6">Pitch</text>
<text class="m" transform="translate(166.80 268.60) scale(1.0803 1)" font-size="13.6">Angle</text>
<text class="m" transform="translate(70.80 286.24) scale(1.0615 1)" font-size="13.6">ELS-10</text>
<text class="m" transform="translate(126.30 286.24) scale(1.0829 1)" font-size="13.6">Pitch</text>
<text class="m" transform="translate(166.80 286.24) scale(1.0803 1)" font-size="13.6">Angle</text>
<text class="m" transform="translate(67.30 303.87) scale(1.1393 1)" font-size="13.6">ELS-09</text>
<text class="m" transform="translate(126.30 303.87) scale(1.0829 1)" font-size="13.6">Pitch</text>
<text class="m" transform="translate(166.80 303.87) scale(1.0803 1)" font-size="13.6">Angle</text>
<text class="m" transform="translate(67.30 321.51) scale(1.1393 1)" font-size="13.6">ELS-08</text>
<text class="m" transform="translate(126.30 321.51) scale(1.0829 1)" font-size="13.6">Pitch</text>
<text class="m" transform="translate(166.80 321.51) scale(1.0803 1)" font-size="13.6">Angle</text>
<text class="m" transform="translate(67.30 339.14) scale(1.1393 1)" font-size="13.6">ELS-07</text>
<text class="m" transform="translate(126.30 339.14) scale(1.0829 1)" font-size="13.6">Pitch</text>
<text class="m" transform="translate(166.80 339.14) scale(1.0803 1)" font-size="13.6">Angle</text>
<text class="m" transform="translate(67.30 356.78) scale(1.1393 1)" font-size="13.6">ELS-06</text>
<text class="m" transform="translate(126.30 356.78) scale(1.0829 1)" font-size="13.6">Pitch</text>
<text class="m" transform="translate(166.80 356.78) scale(1.0803 1)" font-size="13.6">Angle</text>
<text class="m" transform="translate(67.30 374.42) scale(1.1393 1)" font-size="13.6">ELS-05</text>
<text class="m" transform="translate(126.30 374.42) scale(1.0829 1)" font-size="13.6">Pitch</text>
<text class="m" transform="translate(166.80 374.42) scale(1.0803 1)" font-size="13.6">Angle</text>
<text class="m" transform="translate(67.30 392.05) scale(1.1393 1)" font-size="13.6">ELS-04</text>
<text class="m" transform="translate(126.30 392.05) scale(1.0829 1)" font-size="13.6">Pitch</text>
<text class="m" transform="translate(166.80 392.05) scale(1.0803 1)" font-size="13.6">Angle</text>
<text class="m" transform="translate(67.30 409.69) scale(1.1393 1)" font-size="13.6">ELS-03</text>
<text class="m" transform="translate(126.30 409.69) scale(1.0829 1)" font-size="13.6">Pitch</text>
<text class="m" transform="translate(166.80 409.69) scale(1.0803 1)" font-size="13.6">Angle</text>
<text class="m" transform="translate(67.30 427.32) scale(1.1393 1)" font-size="13.6">ELS-02</text>
<text class="m" transform="translate(126.30 427.32) scale(1.0829 1)" font-size="13.6">Pitch</text>
<text class="m" transform="translate(166.80 427.32) scale(1.0803 1)" font-size="13.6">Angle</text>
<text class="m" transform="translate(67.30 444.96) scale(1.1393 1)" font-size="13.6">ELS-01</text>
<text class="m" transform="translate(126.30 444.96) scale(1.0829 1)" font-size="13.6">Pitch</text>
<text class="m" transform="translate(166.80 444.96) scale(1.0803 1)" font-size="13.6">Angle</text>
<text class="m" transform="translate(117.50 468.30) scale(1.0537 1)" font-size="13.6">GMT(min)</text>
<text class="m" transform="translate(214.50 468.30) scale(1.1248 1)" font-size="13.6" text-anchor="middle">20:30</text>
<text class="m" transform="translate(320.84 468.30) scale(1.0508 1)" font-size="13.6" text-anchor="middle">21:30</text>
<text class="m" transform="translate(374.01 468.30) scale(1.1248 1)" font-size="13.6" text-anchor="middle">22:00</text>
<text class="m" transform="translate(427.18 468.30) scale(1.1248 1)" font-size="13.6" text-anchor="middle">22:30</text>
<text class="m" transform="translate(533.52 468.30) scale(1.1248 1)" font-size="13.6" text-anchor="middle">23:30</text>
<text class="m" transform="translate(586.69 468.30) scale(1.1248 1)" font-size="13.6" text-anchor="middle">00:00</text>
<text class="m" transform="translate(693.03 468.30) scale(1.0508 1)" font-size="13.6" text-anchor="middle">01:00</text>
<text class="m" transform="translate(746.20 468.30) scale(1.0508 1)" font-size="13.6" text-anchor="middle">01:30</text>
<rect x="850.5" y="275.5" width="32" height="153" fill="url(#cb)" stroke="#fff" stroke-width="1"/>
<text class="t" transform="translate(851.50 258.40) scale(1.0732 1)" font-size="16">Deg</text>
<text class="t" transform="translate(894.50 280.60) scale(1.0676 1)" font-size="16">180</text>
<text class="t" transform="translate(894.50 319.10) scale(1.0676 1)" font-size="16">135</text>
<text class="t" transform="translate(896.40 357.60) scale(1.0676 1)" font-size="16">90</text>
<text class="t" transform="translate(896.40 396.10) scale(1.0676 1)" font-size="16">45</text>
<text class="t" transform="translate(896.40 434.60) scale(1.0114 1)" font-size="16">0</text>
<text class="m" transform="translate(194.50 682.70) scale(1.1246 1)" font-size="13.6" text-anchor="end">-1</text>
<text class="m" transform="translate(194.50 647.35) scale(0.9989 1)" font-size="13.6" text-anchor="end">0</text>
<text class="m" transform="translate(194.50 612.00) scale(0.9989 1)" font-size="13.6" text-anchor="end">1</text>
<text class="m" transform="translate(194.50 576.65) scale(0.9989 1)" font-size="13.6" text-anchor="end">2</text>
<text class="m" transform="translate(194.50 541.30) scale(0.9989 1)" font-size="13.6" text-anchor="end">3</text>
<text class="m" transform="translate(194.50 505.95) scale(0.9989 1)" font-size="13.6" text-anchor="end">4</text>
<text class="m" transform="translate(846.30 505.70) scale(1.0879 1)" font-size="13.6">1.0e+04</text>
<text class="m" transform="translate(846.30 541.05) scale(1.1652 1)" font-size="13.6">6.0e+03</text>
<text class="m" transform="translate(846.30 576.40) scale(1.1652 1)" font-size="13.6">2.0e+03</text>
<text class="m" transform="translate(846.30 611.75) scale(1.2483 1)" font-size="13.6">-2.0e+03</text>
<text class="m" transform="translate(846.30 647.10) scale(1.2483 1)" font-size="13.6">-6.0e+03</text>
<text class="m" transform="translate(846.30 682.45) scale(1.1924 1)" font-size="13.6">-1.0e+04</text>
<text class="m" transform="translate(117.50 697.30) scale(1.0537 1)" font-size="13.6">GMT(min)</text>
<text class="m" transform="translate(214.50 697.30) scale(1.1248 1)" font-size="13.6" text-anchor="middle">20:30</text>
<text class="m" transform="translate(320.84 697.30) scale(1.0508 1)" font-size="13.6" text-anchor="middle">21:30</text>
<text class="m" transform="translate(374.01 697.30) scale(1.1248 1)" font-size="13.6" text-anchor="middle">22:00</text>
<text class="m" transform="translate(427.18 697.30) scale(1.1248 1)" font-size="13.6" text-anchor="middle">22:30</text>
<text class="m" transform="translate(533.52 697.30) scale(1.1248 1)" font-size="13.6" text-anchor="middle">23:30</text>
<text class="m" transform="translate(586.69 697.30) scale(1.1248 1)" font-size="13.6" text-anchor="middle">00:00</text>
<text class="m" transform="translate(693.03 697.30) scale(1.0508 1)" font-size="13.6" text-anchor="middle">01:00</text>
<text class="m" transform="translate(746.20 697.30) scale(1.0508 1)" font-size="13.6" text-anchor="middle">01:30</text>
<text class="t" transform="translate(211.00 492.00) scale(1.1719 1)" font-size="16">SAF_BXuT/Data</text>
<text class="t" transform="translate(357.70 492.00) scale(1.1667 1)" font-size="16">Quality</text>
<text class="t" transform="translate(426.00 492.00) scale(1.2069 1)" font-size="16">(L)</text>
<text class="t" transform="translate(530.70 492.00) scale(1.0432 1)" font-size="16" style="fill:#00ff00">MEXORBMC/SPF</text>
<text class="t" transform="translate(674.50 492.00) scale(1.0981 1)" font-size="16" style="fill:#00ff00">X,</text>
<text class="t" transform="translate(701.60 492.00) scale(1.2316 1)" font-size="16" style="fill:#00ff00">Spacecraft</text>
<text class="t" transform="translate(804.00 492.00) scale(1.1796 1)" font-size="16" style="fill:#00ff00">(R)</text>
<text class="t" transform="translate(69.80 661.00) rotate(-90) scale(0.9841 1)" font-size="16">Raw</text>
<text class="t" transform="translate(69.80 619.80) rotate(-90) scale(1.0829 1)" font-size="16">Data</text>
<text class="t" transform="translate(69.80 574.30) rotate(-90) scale(1.1567 1)" font-size="16">Quality</text>
<text class="t" transform="translate(90.40 590.00) rotate(-90) scale(1.0782 1)" font-size="16" text-anchor="middle">(Raw)</text>
<text class="t" transform="translate(969.50 504.50) rotate(90) scale(1.1207 1)" font-size="16">Component</text>
<text class="t" transform="translate(969.50 606.30) rotate(90) scale(1.1229 1)" font-size="16">Distance</text>
<text class="t" transform="translate(950.00 590.00) rotate(90) scale(1.2193 1)" font-size="16" text-anchor="middle">(km)</text>
<g shape-rendering="crispEdges" fill="#fff">
<path d="M221 607h11v1h-11zM234 607h14v1h-14zM249 607h14v1h-14zM265 607h13v1h-13zM280 643h30v1h-30zM312 643h14v1h-14zM327 643h14v1h-14zM343 643h14v1h-14zM358 643h14v1h-14zM374 643h14v1h-14zM390 643h14v1h-14zM405 643h14v1h-14zM421 643h14v1h-14zM436 643h14v1h-14zM452 643h14v1h-14zM468 643h14v1h-14zM483 643h14v1h-14zM499 643h14v1h-14zM514 643h14v1h-14zM530 643h14v1h-14zM546 643h14v1h-14zM561 643h14v1h-14zM577 643h14v1h-14zM592 643h14v1h-14zM608 643h14v1h-14zM624 643h14v1h-14zM639 643h14v1h-14zM655 643h14v1h-14zM670 643h14v1h-14zM686 643h14v1h-14zM702 643h-1v1h1zM702 607h12v1h-12zM715 607h14v1h-14zM731 607h14v1h-14zM746 607h15v1h-15zM762 607h14v1h-14zM778 607h29v1h-29zM809 607h12v1h-12zM278 642h1v1h-1zM701 634h1v1h-1z"/>
</g>
<clipPath id="cp3"><rect x="211" y="502" width="618" height="176"/></clipPath>
<g clip-path="url(#cp3)" fill="none" stroke="#00ff00" stroke-width="1" shape-rendering="crispEdges">
<polyline points="210.0,580.9 213.0,583.4 216.0,586.0 219.0,588.5 222.0,590.9 225.0,593.4 228.0,595.8 231.0,598.2 234.0,600.5 237.0,602.8 240.0,605.1 243.0,607.3 246.0,609.5 249.0,611.7 252.0,613.9 255.0,616.0 258.0,618.1 261.0,620.2 264.0,622.2 267.0,624.2 270.0,626.2 273.0,628.1 276.0,630.0 279.0,631.9 282.0,633.7 285.0,635.6 288.0,637.4 291.0,639.1 294.0,640.9 297.0,642.6 300.0,644.3 303.0,645.9 306.0,647.6 309.0,649.2 312.0,650.7 315.0,652.3 318.0,653.8 321.0,655.3 324.0,656.8 327.0,658.2 330.0,659.6 333.0,661.0 336.0,662.4 339.0,663.7 342.0,665.0 345.0,666.3 348.0,667.6 351.0,668.8 354.0,670.0 357.0,671.2 360.0,672.4 363.0,673.5 366.0,674.6 369.0,675.7 372.0,676.8 375.0,677.8 378.0,678.9 381.0,679.9 384.0,680.9 387.0,681.8 390.0,682.8 393.0,683.7 396.0,684.6 399.0,685.4 400.6,685.9"/>
<polyline points="612.0,683.4 615.0,682.5 618.0,681.7 621.0,680.8 624.0,680.0 627.0,679.1 630.0,678.2 633.0,677.3 636.0,676.4 639.0,675.5 642.0,674.5 645.0,673.6 648.0,672.6 651.0,671.7 654.0,670.7 657.0,669.7 660.0,668.7 663.0,667.6 666.0,666.6 669.0,665.5 672.0,664.5 675.0,663.4 678.0,662.3 681.0,661.2 684.0,660.0 687.0,658.9 690.0,657.7 693.0,656.5 696.0,655.4 699.0,654.1 702.0,652.9 705.0,651.7 708.0,650.4 711.0,649.2 714.0,647.9 717.0,646.6 720.0,645.2 723.0,643.9 726.0,642.5 729.0,641.2 732.0,639.8 735.0,638.3 738.0,636.9 741.0,635.5 744.0,634.0 747.0,632.5 750.0,631.0 753.0,629.5 756.0,627.9 759.0,626.4 762.0,624.8 765.0,623.2 768.0,621.5 771.0,619.9 774.0,618.2 777.0,616.5 780.0,614.8 783.0,613.1 786.0,611.4 789.0,609.6 792.0,607.8 795.0,606.0 798.0,604.1 801.0,602.3 804.0,600.4 807.0,598.5 810.0,596.6 813.0,594.6 816.0,592.6 819.0,590.6 822.0,588.6 825.0,586.6 828.0,584.5 829.2,583.7"/>
</g>
<path shape-rendering="crispEdges" fill="#fff" d="M204 61h632v1h-632zM204 220h632v1h-632zM210 61h1v160h-1zM829 61h1v160h-1zM214 62h1v9h-1zM214 210h1v10h-1zM220 62h1v6h-1zM220 214h1v6h-1zM226 62h1v6h-1zM226 214h1v6h-1zM232 62h1v6h-1zM232 214h1v6h-1zM238 62h1v6h-1zM238 214h1v6h-1zM244 62h1v6h-1zM244 214h1v6h-1zM249 62h1v6h-1zM249 214h1v6h-1zM255 62h1v6h-1zM255 214h1v6h-1zM261 62h1v6h-1zM261 214h1v6h-1zM267 62h1v9h-1zM267 210h1v10h-1zM273 62h1v6h-1zM273 214h1v6h-1zM279 62h1v6h-1zM279 214h1v6h-1zM285 62h1v6h-1zM285 214h1v6h-1zM291 62h1v6h-1zM291 214h1v6h-1zM297 62h1v6h-1zM297 214h1v6h-1zM303 62h1v6h-1zM303 214h1v6h-1zM309 62h1v6h-1zM309 214h1v6h-1zM314 62h1v6h-1zM314 214h1v6h-1zM320 62h1v9h-1zM320 210h1v10h-1zM326 62h1v6h-1zM326 214h1v6h-1zM332 62h1v6h-1zM332 214h1v6h-1zM338 62h1v6h-1zM338 214h1v6h-1zM344 62h1v6h-1zM344 214h1v6h-1zM350 62h1v6h-1zM350 214h1v6h-1zM356 62h1v6h-1zM356 214h1v6h-1zM362 62h1v6h-1zM362 214h1v6h-1zM368 62h1v6h-1zM368 214h1v6h-1zM374 62h1v9h-1zM374 210h1v10h-1zM379 62h1v6h-1zM379 214h1v6h-1zM385 62h1v6h-1zM385 214h1v6h-1zM391 62h1v6h-1zM391 214h1v6h-1zM397 62h1v6h-1zM397 214h1v6h-1zM403 62h1v6h-1zM403 214h1v6h-1zM409 62h1v6h-1zM409 214h1v6h-1zM415 62h1v6h-1zM415 214h1v6h-1zM421 62h1v6h-1zM421 214h1v6h-1zM427 62h1v9h-1zM427 210h1v10h-1zM433 62h1v6h-1zM433 214h1v6h-1zM438 62h1v6h-1zM438 214h1v6h-1zM444 62h1v6h-1zM444 214h1v6h-1zM450 62h1v6h-1zM450 214h1v6h-1zM456 62h1v6h-1zM456 214h1v6h-1zM462 62h1v6h-1zM462 214h1v6h-1zM468 62h1v6h-1zM468 214h1v6h-1zM474 62h1v6h-1zM474 214h1v6h-1zM480 62h1v9h-1zM480 210h1v10h-1zM486 62h1v6h-1zM486 214h1v6h-1zM492 62h1v6h-1zM492 214h1v6h-1zM498 62h1v6h-1zM498 214h1v6h-1zM503 62h1v6h-1zM503 214h1v6h-1zM509 62h1v6h-1zM509 214h1v6h-1zM515 62h1v6h-1zM515 214h1v6h-1zM521 62h1v6h-1zM521 214h1v6h-1zM527 62h1v6h-1zM527 214h1v6h-1zM533 62h1v9h-1zM533 210h1v10h-1zM539 62h1v6h-1zM539 214h1v6h-1zM545 62h1v6h-1zM545 214h1v6h-1zM551 62h1v6h-1zM551 214h1v6h-1zM557 62h1v6h-1zM557 214h1v6h-1zM563 62h1v6h-1zM563 214h1v6h-1zM568 62h1v6h-1zM568 214h1v6h-1zM574 62h1v6h-1zM574 214h1v6h-1zM580 62h1v6h-1zM580 214h1v6h-1zM586 62h1v9h-1zM586 210h1v10h-1zM592 62h1v6h-1zM592 214h1v6h-1zM598 62h1v6h-1zM598 214h1v6h-1zM604 62h1v6h-1zM604 214h1v6h-1zM610 62h1v6h-1zM610 214h1v6h-1zM616 62h1v6h-1zM616 214h1v6h-1zM622 62h1v6h-1zM622 214h1v6h-1zM628 62h1v6h-1zM628 214h1v6h-1zM633 62h1v6h-1zM633 214h1v6h-1zM639 62h1v9h-1zM639 210h1v10h-1zM645 62h1v6h-1zM645 214h1v6h-1zM651 62h1v6h-1zM651 214h1v6h-1zM657 62h1v6h-1zM657 214h1v6h-1zM663 62h1v6h-1zM663 214h1v6h-1zM669 62h1v6h-1zM669 214h1v6h-1zM675 62h1v6h-1zM675 214h1v6h-1zM681 62h1v6h-1zM681 214h1v6h-1zM687 62h1v6h-1zM687 214h1v6h-1zM693 62h1v9h-1zM693 210h1v10h-1zM698 62h1v6h-1zM698 214h1v6h-1zM704 62h1v6h-1zM704 214h1v6h-1zM710 62h1v6h-1zM710 214h1v6h-1zM716 62h1v6h-1zM716 214h1v6h-1zM722 62h1v6h-1zM722 214h1v6h-1zM728 62h1v6h-1zM728 214h1v6h-1zM734 62h1v6h-1zM734 214h1v6h-1zM740 62h1v6h-1zM740 214h1v6h-1zM746 62h1v9h-1zM746 210h1v10h-1zM752 62h1v6h-1zM752 214h1v6h-1zM758 62h1v6h-1zM758 214h1v6h-1zM763 62h1v6h-1zM763 214h1v6h-1zM769 62h1v6h-1zM769 214h1v6h-1zM775 62h1v6h-1zM775 214h1v6h-1zM781 62h1v6h-1zM781 214h1v6h-1zM787 62h1v6h-1zM787 214h1v6h-1zM793 62h1v6h-1zM793 214h1v6h-1zM799 62h1v9h-1zM799 210h1v10h-1zM805 62h1v6h-1zM805 214h1v6h-1zM811 62h1v6h-1zM811 214h1v6h-1zM817 62h1v6h-1zM817 214h1v6h-1zM823 62h1v6h-1zM823 214h1v6h-1zM201 81h10v1h-10zM829 81h10v1h-10zM204 88h7v1h-7zM829 88h7v1h-7zM204 97h7v1h-7zM829 97h7v1h-7zM204 109h7v1h-7zM829 109h7v1h-7zM204 130h7v1h-7zM829 130h7v1h-7zM201 150h10v1h-10zM829 150h10v1h-10zM204 157h7v1h-7zM829 157h7v1h-7zM204 166h7v1h-7zM829 166h7v1h-7zM204 178h7v1h-7zM829 178h7v1h-7zM204 199h7v1h-7zM829 199h7v1h-7zM201 220h10v1h-10zM829 220h10v1h-10zM878 81h5v1h-5zM878 86h5v1h-5zM878 94h5v1h-5zM878 106h5v1h-5zM875 119h8v1h-8zM878 123h5v1h-5zM878 128h5v1h-5zM878 136h5v1h-5zM878 149h5v1h-5zM875 161h8v1h-8zM878 165h5v1h-5zM878 171h5v1h-5zM878 178h5v1h-5zM878 191h5v1h-5zM210 255h620v1h-620zM210 449h620v1h-620zM210 255h1v195h-1zM829 255h1v195h-1zM214 256h1v9h-1zM214 439h1v10h-1zM220 256h1v6h-1zM220 443h1v6h-1zM226 256h1v6h-1zM226 443h1v6h-1zM232 256h1v6h-1zM232 443h1v6h-1zM238 256h1v6h-1zM238 443h1v6h-1zM244 256h1v6h-1zM244 443h1v6h-1zM249 256h1v6h-1zM249 443h1v6h-1zM255 256h1v6h-1zM255 443h1v6h-1zM261 256h1v6h-1zM261 443h1v6h-1zM267 256h1v9h-1zM267 439h1v10h-1zM273 256h1v6h-1zM273 443h1v6h-1zM279 256h1v6h-1zM279 443h1v6h-1zM285 256h1v6h-1zM285 443h1v6h-1zM291 256h1v6h-1zM291 443h1v6h-1zM297 256h1v6h-1zM297 443h1v6h-1zM303 256h1v6h-1zM303 443h1v6h-1zM309 256h1v6h-1zM309 443h1v6h-1zM314 256h1v6h-1zM314 443h1v6h-1zM320 256h1v9h-1zM320 439h1v10h-1zM326 256h1v6h-1zM326 443h1v6h-1zM332 256h1v6h-1zM332 443h1v6h-1zM338 256h1v6h-1zM338 443h1v6h-1zM344 256h1v6h-1zM344 443h1v6h-1zM350 256h1v6h-1zM350 443h1v6h-1zM356 256h1v6h-1zM356 443h1v6h-1zM362 256h1v6h-1zM362 443h1v6h-1zM368 256h1v6h-1zM368 443h1v6h-1zM374 256h1v9h-1zM374 439h1v10h-1zM379 256h1v6h-1zM379 443h1v6h-1zM385 256h1v6h-1zM385 443h1v6h-1zM391 256h1v6h-1zM391 443h1v6h-1zM397 256h1v6h-1zM397 443h1v6h-1zM403 256h1v6h-1zM403 443h1v6h-1zM409 256h1v6h-1zM409 443h1v6h-1zM415 256h1v6h-1zM415 443h1v6h-1zM421 256h1v6h-1zM421 443h1v6h-1zM427 256h1v9h-1zM427 439h1v10h-1zM433 256h1v6h-1zM433 443h1v6h-1zM438 256h1v6h-1zM438 443h1v6h-1zM444 256h1v6h-1zM444 443h1v6h-1zM450 256h1v6h-1zM450 443h1v6h-1zM456 256h1v6h-1zM456 443h1v6h-1zM462 256h1v6h-1zM462 443h1v6h-1zM468 256h1v6h-1zM468 443h1v6h-1zM474 256h1v6h-1zM474 443h1v6h-1zM480 256h1v9h-1zM480 439h1v10h-1zM486 256h1v6h-1zM486 443h1v6h-1zM492 256h1v6h-1zM492 443h1v6h-1zM498 256h1v6h-1zM498 443h1v6h-1zM503 256h1v6h-1zM503 443h1v6h-1zM509 256h1v6h-1zM509 443h1v6h-1zM515 256h1v6h-1zM515 443h1v6h-1zM521 256h1v6h-1zM521 443h1v6h-1zM527 256h1v6h-1zM527 443h1v6h-1zM533 256h1v9h-1zM533 439h1v10h-1zM539 256h1v6h-1zM539 443h1v6h-1zM545 256h1v6h-1zM545 443h1v6h-1zM551 256h1v6h-1zM551 443h1v6h-1zM557 256h1v6h-1zM557 443h1v6h-1zM563 256h1v6h-1zM563 443h1v6h-1zM568 256h1v6h-1zM568 443h1v6h-1zM574 256h1v6h-1zM574 443h1v6h-1zM580 256h1v6h-1zM580 443h1v6h-1zM586 256h1v9h-1zM586 439h1v10h-1zM592 256h1v6h-1zM592 443h1v6h-1zM598 256h1v6h-1zM598 443h1v6h-1zM604 256h1v6h-1zM604 443h1v6h-1zM610 256h1v6h-1zM610 443h1v6h-1zM616 256h1v6h-1zM616 443h1v6h-1zM622 256h1v6h-1zM622 443h1v6h-1zM628 256h1v6h-1zM628 443h1v6h-1zM633 256h1v6h-1zM633 443h1v6h-1zM639 256h1v9h-1zM639 439h1v10h-1zM645 256h1v6h-1zM645 443h1v6h-1zM651 256h1v6h-1zM651 443h1v6h-1zM657 256h1v6h-1zM657 443h1v6h-1zM663 256h1v6h-1zM663 443h1v6h-1zM669 256h1v6h-1zM669 443h1v6h-1zM675 256h1v6h-1zM675 443h1v6h-1zM681 256h1v6h-1zM681 443h1v6h-1zM687 256h1v6h-1zM687 443h1v6h-1zM693 256h1v9h-1zM693 439h1v10h-1zM698 256h1v6h-1zM698 443h1v6h-1zM704 256h1v6h-1zM704 443h1v6h-1zM710 256h1v6h-1zM710 443h1v6h-1zM716 256h1v6h-1zM716 443h1v6h-1zM722 256h1v6h-1zM722 443h1v6h-1zM728 256h1v6h-1zM728 443h1v6h-1zM734 256h1v6h-1zM734 443h1v6h-1zM740 256h1v6h-1zM740 443h1v6h-1zM746 256h1v9h-1zM746 439h1v10h-1zM752 256h1v6h-1zM752 443h1v6h-1zM758 256h1v6h-1zM758 443h1v6h-1zM763 256h1v6h-1zM763 443h1v6h-1zM769 256h1v6h-1zM769 443h1v6h-1zM775 256h1v6h-1zM775 443h1v6h-1zM781 256h1v6h-1zM781 443h1v6h-1zM787 256h1v6h-1zM787 443h1v6h-1zM793 256h1v6h-1zM793 443h1v6h-1zM799 256h1v9h-1zM799 439h1v10h-1zM805 256h1v6h-1zM805 443h1v6h-1zM811 256h1v6h-1zM811 443h1v6h-1zM817 256h1v6h-1zM817 443h1v6h-1zM823 256h1v6h-1zM823 443h1v6h-1zM878 283h5v1h-5zM878 290h5v1h-5zM878 298h5v1h-5zM878 306h5v1h-5zM875 314h8v1h-8zM878 321h5v1h-5zM878 329h5v1h-5zM878 337h5v1h-5zM878 344h5v1h-5zM875 352h8v1h-8zM878 360h5v1h-5zM878 367h5v1h-5zM878 375h5v1h-5zM878 383h5v1h-5zM875 390h8v1h-8zM878 398h5v1h-5zM878 406h5v1h-5zM878 414h5v1h-5zM878 421h5v1h-5zM204 501h632v1h-632zM204 678h632v1h-632zM210 501h1v178h-1zM829 501h1v178h-1zM214 502h1v9h-1zM214 668h1v10h-1zM220 502h1v6h-1zM220 672h1v6h-1zM226 502h1v6h-1zM226 672h1v6h-1zM232 502h1v6h-1zM232 672h1v6h-1zM238 502h1v6h-1zM238 672h1v6h-1zM244 502h1v6h-1zM244 672h1v6h-1zM249 502h1v6h-1zM249 672h1v6h-1zM255 502h1v6h-1zM255 672h1v6h-1zM261 502h1v6h-1zM261 672h1v6h-1zM267 502h1v9h-1zM267 668h1v10h-1zM273 502h1v6h-1zM273 672h1v6h-1zM279 502h1v6h-1zM279 672h1v6h-1zM285 502h1v6h-1zM285 672h1v6h-1zM291 502h1v6h-1zM291 672h1v6h-1zM297 502h1v6h-1zM297 672h1v6h-1zM303 502h1v6h-1zM303 672h1v6h-1zM309 502h1v6h-1zM309 672h1v6h-1zM314 502h1v6h-1zM314 672h1v6h-1zM320 502h1v9h-1zM320 668h1v10h-1zM326 502h1v6h-1zM326 672h1v6h-1zM332 502h1v6h-1zM332 672h1v6h-1zM338 502h1v6h-1zM338 672h1v6h-1zM344 502h1v6h-1zM344 672h1v6h-1zM350 502h1v6h-1zM350 672h1v6h-1zM356 502h1v6h-1zM356 672h1v6h-1zM362 502h1v6h-1zM362 672h1v6h-1zM368 502h1v6h-1zM368 672h1v6h-1zM374 502h1v9h-1zM374 668h1v10h-1zM379 502h1v6h-1zM379 672h1v6h-1zM385 502h1v6h-1zM385 672h1v6h-1zM391 502h1v6h-1zM391 672h1v6h-1zM397 502h1v6h-1zM397 672h1v6h-1zM403 502h1v6h-1zM403 672h1v6h-1zM409 502h1v6h-1zM409 672h1v6h-1zM415 502h1v6h-1zM415 672h1v6h-1zM421 502h1v6h-1zM421 672h1v6h-1zM427 502h1v9h-1zM427 668h1v10h-1zM433 502h1v6h-1zM433 672h1v6h-1zM438 502h1v6h-1zM438 672h1v6h-1zM444 502h1v6h-1zM444 672h1v6h-1zM450 502h1v6h-1zM450 672h1v6h-1zM456 502h1v6h-1zM456 672h1v6h-1zM462 502h1v6h-1zM462 672h1v6h-1zM468 502h1v6h-1zM468 672h1v6h-1zM474 502h1v6h-1zM474 672h1v6h-1zM480 502h1v9h-1zM480 668h1v10h-1zM486 502h1v6h-1zM486 672h1v6h-1zM492 502h1v6h-1zM492 672h1v6h-1zM498 502h1v6h-1zM498 672h1v6h-1zM503 502h1v6h-1zM503 672h1v6h-1zM509 502h1v6h-1zM509 672h1v6h-1zM515 502h1v6h-1zM515 672h1v6h-1zM521 502h1v6h-1zM521 672h1v6h-1zM527 502h1v6h-1zM527 672h1v6h-1zM533 502h1v9h-1zM533 668h1v10h-1zM539 502h1v6h-1zM539 672h1v6h-1zM545 502h1v6h-1zM545 672h1v6h-1zM551 502h1v6h-1zM551 672h1v6h-1zM557 502h1v6h-1zM557 672h1v6h-1zM563 502h1v6h-1zM563 672h1v6h-1zM568 502h1v6h-1zM568 672h1v6h-1zM574 502h1v6h-1zM574 672h1v6h-1zM580 502h1v6h-1zM580 672h1v6h-1zM586 502h1v9h-1zM586 668h1v10h-1zM592 502h1v6h-1zM592 672h1v6h-1zM598 502h1v6h-1zM598 672h1v6h-1zM604 502h1v6h-1zM604 672h1v6h-1zM610 502h1v6h-1zM610 672h1v6h-1zM616 502h1v6h-1zM616 672h1v6h-1zM622 502h1v6h-1zM622 672h1v6h-1zM628 502h1v6h-1zM628 672h1v6h-1zM633 502h1v6h-1zM633 672h1v6h-1zM639 502h1v9h-1zM639 668h1v10h-1zM645 502h1v6h-1zM645 672h1v6h-1zM651 502h1v6h-1zM651 672h1v6h-1zM657 502h1v6h-1zM657 672h1v6h-1zM663 502h1v6h-1zM663 672h1v6h-1zM669 502h1v6h-1zM669 672h1v6h-1zM675 502h1v6h-1zM675 672h1v6h-1zM681 502h1v6h-1zM681 672h1v6h-1zM687 502h1v6h-1zM687 672h1v6h-1zM693 502h1v9h-1zM693 668h1v10h-1zM698 502h1v6h-1zM698 672h1v6h-1zM704 502h1v6h-1zM704 672h1v6h-1zM710 502h1v6h-1zM710 672h1v6h-1zM716 502h1v6h-1zM716 672h1v6h-1zM722 502h1v6h-1zM722 672h1v6h-1zM728 502h1v6h-1zM728 672h1v6h-1zM734 502h1v6h-1zM734 672h1v6h-1zM740 502h1v6h-1zM740 672h1v6h-1zM746 502h1v9h-1zM746 668h1v10h-1zM752 502h1v6h-1zM752 672h1v6h-1zM758 502h1v6h-1zM758 672h1v6h-1zM763 502h1v6h-1zM763 672h1v6h-1zM769 502h1v6h-1zM769 672h1v6h-1zM775 502h1v6h-1zM775 672h1v6h-1zM781 502h1v6h-1zM781 672h1v6h-1zM787 502h1v6h-1zM787 672h1v6h-1zM793 502h1v6h-1zM793 672h1v6h-1zM799 502h1v9h-1zM799 668h1v10h-1zM805 502h1v6h-1zM805 672h1v6h-1zM811 502h1v6h-1zM811 672h1v6h-1zM817 502h1v6h-1zM817 672h1v6h-1zM823 502h1v6h-1zM823 672h1v6h-1zM201 678h10v1h-10zM829 678h10v1h-10zM204 671h7v1h-7zM829 671h7v1h-7zM204 664h7v1h-7zM829 664h7v1h-7zM204 657h7v1h-7zM829 657h7v1h-7zM204 650h7v1h-7zM829 650h7v1h-7zM201 643h10v1h-10zM829 643h10v1h-10zM204 635h7v1h-7zM829 635h7v1h-7zM204 628h7v1h-7zM829 628h7v1h-7zM204 621h7v1h-7zM829 621h7v1h-7zM204 614h7v1h-7zM829 614h7v1h-7zM201 607h10v1h-10zM829 607h10v1h-10zM204 600h7v1h-7zM829 600h7v1h-7zM204 593h7v1h-7zM829 593h7v1h-7zM204 586h7v1h-7zM829 586h7v1h-7zM204 579h7v1h-7zM829 579h7v1h-7zM201 572h10v1h-10zM829 572h10v1h-10zM204 565h7v1h-7zM829 565h7v1h-7zM204 557h7v1h-7zM829 557h7v1h-7zM204 550h7v1h-7zM829 550h7v1h-7zM204 543h7v1h-7zM829 543h7v1h-7zM201 536h10v1h-10zM829 536h10v1h-10zM204 529h7v1h-7zM829 529h7v1h-7zM204 522h7v1h-7zM829 522h7v1h-7zM204 515h7v1h-7zM829 515h7v1h-7zM204 508h7v1h-7zM829 508h7v1h-7zM201 501h10v1h-10zM829 501h10v1h-10z"/>
</svg>
</body></html>
